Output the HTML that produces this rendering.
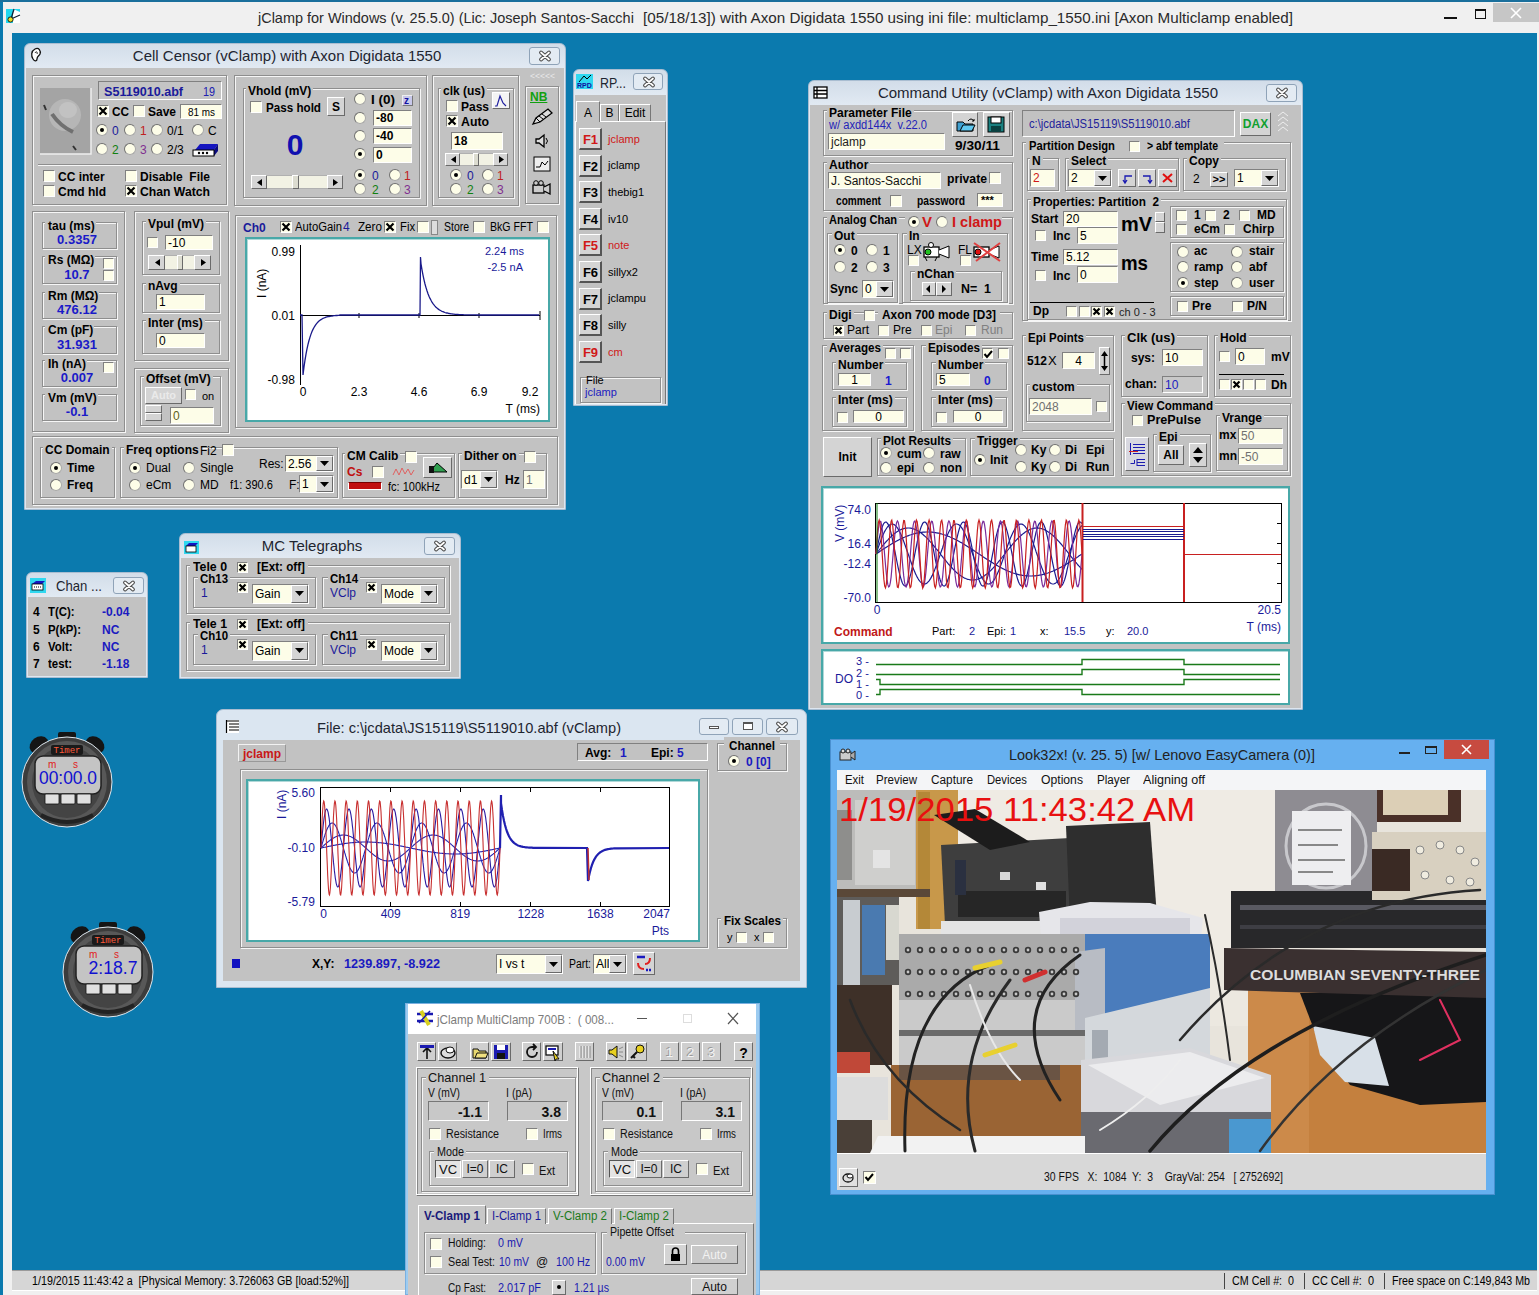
<!DOCTYPE html>
<html><head><meta charset="utf-8">
<style>
*{margin:0;padding:0;box-sizing:border-box}
html,body{width:1539px;height:1295px;overflow:hidden}
body{position:relative;background:#0b7aae;font-family:"Liberation Sans",sans-serif;font-size:12px;color:#000}
.a{position:absolute}
.t{position:absolute;white-space:pre}
svg{overflow:visible}
</style></head><body>
<div class="a" style="left:3px;top:2px;width:1536px;height:1293px;background:#f0f0f0"></div>
<div class="a" style="left:0px;top:0px;width:1539px;height:2px;background:#1a6f9c"></div>
<div class="a" style="left:12px;top:33px;width:1525px;height:1237px;background:#0b7aae"></div>
<svg class="a" style="left:6px;top:9px" width="14" height="14" viewBox="0 0 14 14"><rect width="14" height="14" fill="#22d8ee"/><path d="M14 3L7 0V14H14Z" fill="#fff"/><path d="M8 0L5 10M5 10L14 6" stroke="#123" stroke-width="1.3"/><circle cx="4.5" cy="10.5" r="2.6" fill="#e8e020" stroke="#222" stroke-width="1"/></svg>
<div class="t" style="left:258.0px;top:10.3px;font-size:15px;line-height:15px;color:#2a2a2a;transform:scaleX(0.964);transform-origin:0 0;">jClamp for Windows (v. 25.5.0) (Lic: Joseph Santos-Sacchi</div>
<div class="t" style="left:643.0px;top:10.3px;font-size:15px;line-height:15px;color:#2a2a2a;transform:scaleX(1.015);transform-origin:0 0;">[05/18/13]) with Axon Digidata 1550 using ini file: multiclamp_1550.ini [Axon Multiclamp enabled]</div>
<div class="a" style="left:1444px;top:17px;width:13px;height:2px;background:#111"></div>
<div class="a" style="left:1475px;top:9px;width:11px;height:10px;border:1.5px solid #111;border-top-width:2.5px"></div>
<div class="a" style="left:1493px;top:3px;width:46px;height:19px;background:#c6c6c6"></div>
<svg class="a" style="left:1510px;top:8px" width="12" height="10" viewBox="0 0 12 10"><path d="M1 0L11 10M11 0L1 10" stroke="#fff" stroke-width="1.6"/></svg>
<div class="a" style="left:12px;top:1270px;width:1525px;height:21px;background:#d6d6d6;border-top:1px solid #9a9a9a;border-bottom:1px solid #fff"></div>
<div class="t" style="left:32.0px;top:1274.8px;font-size:12px;line-height:12px;transform:scaleX(0.894);transform-origin:0 0;">1/19/2015 11:43:42 a  [Physical Memory: 3.726063 GB [load:52%]]</div>
<div class="a" style="left:1224px;top:1273px;width:1px;height:16px;background:#444"></div>
<div class="a" style="left:1304px;top:1273px;width:1px;height:16px;background:#444"></div>
<div class="a" style="left:1384px;top:1273px;width:1px;height:16px;background:#444"></div>
<div class="t" style="left:1232.0px;top:1274.8px;font-size:12px;line-height:12px;transform:scaleX(0.894);transform-origin:0 0;">CM Cell #:  0</div>
<div class="t" style="left:1312.0px;top:1274.8px;font-size:12px;line-height:12px;transform:scaleX(0.911);transform-origin:0 0;">CC Cell #:  0</div>
<div class="t" style="left:1392.0px;top:1274.8px;font-size:12px;line-height:12px;transform:scaleX(0.888);transform-origin:0 0;">Free space on C:149,843 Mb</div>
<div class="a" style="left:24px;top:43px;width:542px;height:467px;background:linear-gradient(#d2dde9,#e2eaf3 25px,#dde6f0);border:1px solid #a9bdd1;border-radius:6px 6px 0 0"></div>
<div class="a" style="left:26px;top:68px;width:538px;height:440px;background:#c2c2c2"></div>
<div class="t" style="left:132.8px;top:48.2px;font-size:15px;line-height:15px;color:#1e2530;">Cell Censor (vClamp) with Axon Digidata 1550</div>
<div class="a" style="left:529px;top:47px;width:31px;height:18px;border:1px solid #8fa3b8;border-radius:3px;background:#e3ebf3"></div>
<svg class="a" style="left:538.5px;top:51px" width="12" height="10"><path d="M2 1.5L10 8.5M10 1.5L2 8.5" stroke="#4a4a4a" stroke-width="3.8" stroke-linecap="round"/><path d="M2 1.5L10 8.5M10 1.5L2 8.5" stroke="#fff" stroke-width="1.7" stroke-linecap="round"/></svg>
<svg class="a" style="left:30px;top:47px" width="12" height="16" viewBox="0 0 12 16"><path d="M3 12C1 9 1 4 5 2C9 0 11 4 10 7C9 9 7 9 7 12C7 14 5 15 3 12Z" fill="#fff" stroke="#111" stroke-width="1.3"/><path d="M5 6C6 4 8 5 7 7" stroke="#111" fill="none"/></svg>
<div class="a" style="left:32px;top:75px;width:195px;height:130px;border:1px solid #8e8e8e;box-shadow:inset 1px 1px 0 #f6f6f6,1px 1px 0 #f6f6f6;"></div>
<svg class="a" style="left:40px;top:88px" width="51" height="66" viewBox="0 0 51 66"><rect width="51" height="66" fill="#a4a4a4"/><ellipse cx="25" cy="27" rx="16" ry="16" fill="#b6b6b6"/><ellipse cx="28" cy="22" rx="9" ry="8" fill="#c2c2c2"/><path d="M12 26Q20 38 33 44" stroke="#707070" stroke-width="4" fill="none"/><path d="M4 17L6 22M33 58L36 62" stroke="#333" stroke-width="2"/><path d="M51 0V66H0" stroke="#eee" fill="none" stroke-width="1.5"/></svg>
<div class="a" style="left:98px;top:81px;width:124px;height:19px;background:#c4c4c4;border-top:1px solid #808080;border-left:1px solid #808080;border-bottom:1px solid #fff;border-right:1px solid #fff;"></div>
<div class="t" style="left:104.0px;top:85.8px;font-size:12px;line-height:12px;font-weight:bold;color:#1a1a9a;transform:scaleX(1.048);transform-origin:0 0;">S5119010.abf</div>
<div class="t" style="left:203.0px;top:85.8px;font-size:12px;line-height:12px;color:#2020b0;transform:scaleX(0.899);transform-origin:0 0;">19</div>
<div class="a" style="left:97px;top:105px;width:12px;height:12px;background:#fdfde8;border-top:1px solid #808080;border-left:1px solid #808080;border-bottom:1px solid #fff;border-right:1px solid #fff;"></div>
<svg class="a" style="left:97px;top:105px" width="12" height="12"><path d="M2.5 2.5L9.5 9.5M9.5 2.5L2.5 9.5" stroke="#000" stroke-width="2.2"/></svg>
<div class="t" style="left:112.0px;top:105.8px;font-size:12px;line-height:12px;font-weight:bold;transform:scaleX(0.981);transform-origin:0 0;">CC</div>
<div class="a" style="left:133px;top:105px;width:12px;height:12px;background:#fdfde8;border-top:1px solid #808080;border-left:1px solid #808080;border-bottom:1px solid #fff;border-right:1px solid #fff;"></div>
<div class="t" style="left:148.0px;top:105.8px;font-size:12px;line-height:12px;font-weight:bold;">Save</div>
<div class="a" style="left:180px;top:104px;width:42px;height:15px;background:#fdfde8;border-top:1px solid #808080;border-left:1px solid #808080;border-bottom:1px solid #fff;border-right:1px solid #fff;"></div>
<div class="t" style="left:188.0px;top:106.7px;font-size:11px;line-height:11px;transform:scaleX(0.901);transform-origin:0 0;">81 ms</div>
<div class="a" style="left:96px;top:124px;width:12px;height:12px;border-radius:50%;background:#fdfde8;border:1px solid #a8a8a8;border-top-color:#707070;border-left-color:#707070"></div>
<div class="a" style="left:100px;top:128px;width:4px;height:4px;border-radius:50%;background:#000"></div>
<div class="t" style="left:112.0px;top:124.8px;font-size:12px;line-height:12px;color:#1a1a9a;">0</div>
<div class="a" style="left:124px;top:124px;width:12px;height:12px;border-radius:50%;background:#fdfde8;border:1px solid #a8a8a8;border-top-color:#707070;border-left-color:#707070"></div>
<div class="t" style="left:140.0px;top:124.8px;font-size:12px;line-height:12px;color:#c02020;">1</div>
<div class="a" style="left:151px;top:124px;width:12px;height:12px;border-radius:50%;background:#fdfde8;border:1px solid #a8a8a8;border-top-color:#707070;border-left-color:#707070"></div>
<div class="t" style="left:167.0px;top:124.8px;font-size:12px;line-height:12px;">0/1</div>
<div class="a" style="left:192px;top:124px;width:12px;height:12px;border-radius:50%;background:#fdfde8;border:1px solid #a8a8a8;border-top-color:#707070;border-left-color:#707070"></div>
<div class="t" style="left:208.0px;top:124.8px;font-size:12px;line-height:12px;">C</div>
<div class="a" style="left:96px;top:143px;width:12px;height:12px;border-radius:50%;background:#fdfde8;border:1px solid #a8a8a8;border-top-color:#707070;border-left-color:#707070"></div>
<div class="t" style="left:112.0px;top:143.8px;font-size:12px;line-height:12px;color:#108010;">2</div>
<div class="a" style="left:124px;top:143px;width:12px;height:12px;border-radius:50%;background:#fdfde8;border:1px solid #a8a8a8;border-top-color:#707070;border-left-color:#707070"></div>
<div class="t" style="left:140.0px;top:143.8px;font-size:12px;line-height:12px;color:#803090;">3</div>
<div class="a" style="left:151px;top:143px;width:12px;height:12px;border-radius:50%;background:#fdfde8;border:1px solid #a8a8a8;border-top-color:#707070;border-left-color:#707070"></div>
<div class="t" style="left:167.0px;top:143.8px;font-size:12px;line-height:12px;">2/3</div>
<svg class="a" style="left:192px;top:142px" width="28" height="15" viewBox="0 0 28 15"><path d="M3 8L8 2H26L22 8Z" fill="#1515c0"/><path d="M22 8L26 2V9L22 14Z" fill="#0a0a80"/><rect x="1" y="8" width="21" height="6" fill="#fff" stroke="#000"/><circle cx="7" cy="11" r="1.2" fill="#000"/><circle cx="11" cy="11" r="1.2" fill="#000"/><circle cx="15" cy="11" r="1.2" fill="#000"/></svg>
<div class="a" style="left:38px;top:164px;width:183px;height:2px;border-top:1px solid #8e8e8e;border-bottom:1px solid #f6f6f6"></div>
<div class="a" style="left:43px;top:170px;width:12px;height:12px;background:#fdfde8;border-top:1px solid #808080;border-left:1px solid #808080;border-bottom:1px solid #fff;border-right:1px solid #fff;"></div>
<div class="t" style="left:58.0px;top:170.8px;font-size:12px;line-height:12px;font-weight:bold;">CC inter</div>
<div class="a" style="left:43px;top:185px;width:12px;height:12px;background:#fdfde8;border-top:1px solid #808080;border-left:1px solid #808080;border-bottom:1px solid #fff;border-right:1px solid #fff;"></div>
<div class="t" style="left:58.0px;top:185.8px;font-size:12px;line-height:12px;font-weight:bold;">Cmd hld</div>
<div class="a" style="left:125px;top:170px;width:12px;height:12px;background:#fdfde8;border-top:1px solid #808080;border-left:1px solid #808080;border-bottom:1px solid #fff;border-right:1px solid #fff;"></div>
<div class="t" style="left:140.0px;top:170.8px;font-size:12px;line-height:12px;font-weight:bold;">Disable  File</div>
<div class="a" style="left:125px;top:185px;width:12px;height:12px;background:#fdfde8;border-top:1px solid #808080;border-left:1px solid #808080;border-bottom:1px solid #fff;border-right:1px solid #fff;"></div>
<svg class="a" style="left:125px;top:185px" width="12" height="12"><path d="M2.5 2.5L9.5 9.5M9.5 2.5L2.5 9.5" stroke="#000" stroke-width="2.2"/></svg>
<div class="t" style="left:140.0px;top:185.8px;font-size:12px;line-height:12px;font-weight:bold;transform:scaleX(1.016);transform-origin:0 0;">Chan Watch</div>
<div class="a" style="left:234px;top:75px;width:193px;height:131px;border:1px solid #8e8e8e;box-shadow:inset 1px 1px 0 #f6f6f6,1px 1px 0 #f6f6f6;"></div>
<div class="a" style="left:243px;top:88px;width:177px;height:110px;border:1px solid #8e8e8e;box-shadow:inset 1px 1px 0 #f6f6f6,1px 1px 0 #f6f6f6;"></div>
<div class="a" style="left:246px;top:86px;width:67.3398px;height:10px;background:#c2c2c2"></div>
<div class="t" style="left:248.0px;top:84.8px;font-size:12px;line-height:12px;font-weight:bold;">Vhold (mV)</div>
<div class="a" style="left:250px;top:101px;width:12px;height:12px;background:#fdfde8;border-top:1px solid #808080;border-left:1px solid #808080;border-bottom:1px solid #fff;border-right:1px solid #fff;"></div>
<div class="t" style="left:266.0px;top:101.8px;font-size:12px;line-height:12px;font-weight:bold;transform:scaleX(0.970);transform-origin:0 0;">Pass hold</div>
<div class="a" style="left:327px;top:97px;width:18px;height:19px;background:#d4d4d4;border-top:1px solid #fff;border-left:1px solid #fff;border-bottom:1px solid #6a6a6a;border-right:1px solid #6a6a6a;"></div>
<div class="t" style="left:332.0px;top:100.7px;font-size:12px;line-height:12px;font-weight:bold;">S</div>
<div class="t" style="left:286.7px;top:129.6px;font-size:30px;line-height:30px;font-weight:bold;color:#1010b0;">0</div>
<div class="a" style="left:251px;top:175px;width:92px;height:14px;background:#f2f2e4;border:1px solid #b0b0b0"></div>
<div class="a" style="left:251px;top:175px;width:16px;height:14px;background:#d4d4d4;border-top:1px solid #fff;border-left:1px solid #fff;border-bottom:1px solid #6a6a6a;border-right:1px solid #6a6a6a;"></div>
<div class="a" style="left:327px;top:175px;width:16px;height:14px;background:#d4d4d4;border-top:1px solid #fff;border-left:1px solid #fff;border-bottom:1px solid #6a6a6a;border-right:1px solid #6a6a6a;"></div>
<svg class="a" style="left:257px;top:178.5px" width="5" height="7"><path d="M5 0V7L0 3.5Z" fill="#000"/></svg>
<svg class="a" style="left:333px;top:178.5px" width="5" height="7"><path d="M0 0V7L5 3.5Z" fill="#000"/></svg>
<div class="a" style="left:292px;top:175px;width:7px;height:14px;background:#dcdcd0;border-top:1px solid #fff;border-left:1px solid #fff;border-bottom:1px solid #6a6a6a;border-right:1px solid #6a6a6a;"></div>
<div class="a" style="left:354px;top:93px;width:12px;height:12px;border-radius:50%;background:#fdfde8;border:1px solid #a8a8a8;border-top-color:#707070;border-left-color:#707070"></div>
<div class="a" style="left:354px;top:112px;width:12px;height:12px;border-radius:50%;background:#fdfde8;border:1px solid #a8a8a8;border-top-color:#707070;border-left-color:#707070"></div>
<div class="a" style="left:354px;top:130px;width:12px;height:12px;border-radius:50%;background:#fdfde8;border:1px solid #a8a8a8;border-top-color:#707070;border-left-color:#707070"></div>
<div class="a" style="left:354px;top:148px;width:12px;height:12px;border-radius:50%;background:#fdfde8;border:1px solid #a8a8a8;border-top-color:#707070;border-left-color:#707070"></div>
<div class="a" style="left:358px;top:152px;width:4px;height:4px;border-radius:50%;background:#000"></div>
<div class="a" style="left:373px;top:110px;width:39px;height:16px;background:#fdfde8;border-top:1px solid #808080;border-left:1px solid #808080;border-bottom:1px solid #fff;border-right:1px solid #fff;"></div>
<div class="t" style="left:376.0px;top:112.2px;font-size:12px;line-height:12px;font-weight:bold;">-80</div>
<div class="a" style="left:373px;top:128px;width:39px;height:16px;background:#fdfde8;border-top:1px solid #808080;border-left:1px solid #808080;border-bottom:1px solid #fff;border-right:1px solid #fff;"></div>
<div class="t" style="left:376.0px;top:130.2px;font-size:12px;line-height:12px;font-weight:bold;">-40</div>
<div class="a" style="left:373px;top:147px;width:39px;height:16px;background:#fdfde8;border-top:1px solid #808080;border-left:1px solid #808080;border-bottom:1px solid #fff;border-right:1px solid #fff;"></div>
<div class="t" style="left:376.0px;top:149.2px;font-size:12px;line-height:12px;font-weight:bold;">0</div>
<div class="t" style="left:371.0px;top:93.8px;font-size:12px;line-height:12px;font-weight:bold;transform:scaleX(1.125);transform-origin:0 0;">I (0)</div>
<div class="a" style="left:402px;top:95px;width:11px;height:11px;background:#c8c8ea;border:1px solid #eee;border-right-color:#777;border-bottom-color:#777"></div>
<div class="t" style="left:404.0px;top:95.5px;font-size:10px;line-height:10px;font-weight:bold;color:#1010a0;">z</div>
<div class="a" style="left:354px;top:169px;width:12px;height:12px;border-radius:50%;background:#fdfde8;border:1px solid #a8a8a8;border-top-color:#707070;border-left-color:#707070"></div>
<div class="a" style="left:358px;top:173px;width:4px;height:4px;border-radius:50%;background:#000"></div>
<div class="t" style="left:372.0px;top:169.8px;font-size:12px;line-height:12px;color:#1a1a9a;">0</div>
<div class="a" style="left:389px;top:169px;width:12px;height:12px;border-radius:50%;background:#fdfde8;border:1px solid #a8a8a8;border-top-color:#707070;border-left-color:#707070"></div>
<div class="t" style="left:404.0px;top:169.8px;font-size:12px;line-height:12px;color:#c02020;">1</div>
<div class="a" style="left:354px;top:183px;width:12px;height:12px;border-radius:50%;background:#fdfde8;border:1px solid #a8a8a8;border-top-color:#707070;border-left-color:#707070"></div>
<div class="t" style="left:372.0px;top:183.8px;font-size:12px;line-height:12px;color:#108010;">2</div>
<div class="a" style="left:389px;top:183px;width:12px;height:12px;border-radius:50%;background:#fdfde8;border:1px solid #a8a8a8;border-top-color:#707070;border-left-color:#707070"></div>
<div class="t" style="left:404.0px;top:183.8px;font-size:12px;line-height:12px;color:#803090;">3</div>
<div class="a" style="left:432px;top:75px;width:87px;height:131px;border:1px solid #8e8e8e;box-shadow:inset 1px 1px 0 #f6f6f6,1px 1px 0 #f6f6f6;"></div>
<div class="a" style="left:438px;top:88px;width:76px;height:110px;border:1px solid #8e8e8e;box-shadow:inset 1px 1px 0 #f6f6f6,1px 1px 0 #f6f6f6;"></div>
<div class="a" style="left:441px;top:86px;width:46.0234px;height:10px;background:#c2c2c2"></div>
<div class="t" style="left:443.0px;top:84.8px;font-size:12px;line-height:12px;font-weight:bold;">clk (us)</div>
<div class="a" style="left:446px;top:100px;width:12px;height:12px;background:#fdfde8;border-top:1px solid #808080;border-left:1px solid #808080;border-bottom:1px solid #fff;border-right:1px solid #fff;"></div>
<div class="t" style="left:461.0px;top:100.8px;font-size:12px;line-height:12px;font-weight:bold;">Pass</div>
<div class="a" style="left:492px;top:92px;width:18px;height:17px;background:#f4f4f4;border-top:1px solid #fff;border-left:1px solid #fff;border-bottom:1px solid #6a6a6a;border-right:1px solid #6a6a6a;"></div>
<svg class="a" style="left:494px;top:94px" width="14" height="13" viewBox="0 0 14 13"><path d="M1 12H3L6 2L9 9L12 12" stroke="#2020a0" fill="none" stroke-width="1.2"/></svg>
<div class="a" style="left:446px;top:115px;width:12px;height:12px;background:#fdfde8;border-top:1px solid #808080;border-left:1px solid #808080;border-bottom:1px solid #fff;border-right:1px solid #fff;"></div>
<svg class="a" style="left:446px;top:115px" width="12" height="12"><path d="M2.5 2.5L9.5 9.5M9.5 2.5L2.5 9.5" stroke="#000" stroke-width="2.2"/></svg>
<div class="t" style="left:461.0px;top:115.8px;font-size:12px;line-height:12px;font-weight:bold;transform:scaleX(1.025);transform-origin:0 0;">Auto</div>
<div class="a" style="left:451px;top:132px;width:52px;height:18px;background:#fdfde8;border-top:1px solid #808080;border-left:1px solid #808080;border-bottom:1px solid #fff;border-right:1px solid #fff;"></div>
<div class="t" style="left:454.0px;top:135.2px;font-size:12px;line-height:12px;font-weight:bold;">18</div>
<div class="a" style="left:445px;top:153px;width:63px;height:13px;background:#f2f2e4;border:1px solid #b0b0b0"></div>
<div class="a" style="left:445px;top:153px;width:15px;height:13px;background:#d4d4d4;border-top:1px solid #fff;border-left:1px solid #fff;border-bottom:1px solid #6a6a6a;border-right:1px solid #6a6a6a;"></div>
<div class="a" style="left:493px;top:153px;width:15px;height:13px;background:#d4d4d4;border-top:1px solid #fff;border-left:1px solid #fff;border-bottom:1px solid #6a6a6a;border-right:1px solid #6a6a6a;"></div>
<svg class="a" style="left:450.5px;top:156px" width="5" height="7"><path d="M5 0V7L0 3.5Z" fill="#000"/></svg>
<svg class="a" style="left:498.5px;top:156px" width="5" height="7"><path d="M0 0V7L5 3.5Z" fill="#000"/></svg>
<div class="a" style="left:473px;top:153px;width:6px;height:13px;background:#dcdcd0;border-top:1px solid #fff;border-left:1px solid #fff;border-bottom:1px solid #6a6a6a;border-right:1px solid #6a6a6a;"></div>
<div class="a" style="left:450px;top:169px;width:12px;height:12px;border-radius:50%;background:#fdfde8;border:1px solid #a8a8a8;border-top-color:#707070;border-left-color:#707070"></div>
<div class="a" style="left:454px;top:173px;width:4px;height:4px;border-radius:50%;background:#000"></div>
<div class="t" style="left:467.0px;top:169.8px;font-size:12px;line-height:12px;color:#1a1a9a;">0</div>
<div class="a" style="left:482px;top:169px;width:12px;height:12px;border-radius:50%;background:#fdfde8;border:1px solid #a8a8a8;border-top-color:#707070;border-left-color:#707070"></div>
<div class="t" style="left:497.0px;top:169.8px;font-size:12px;line-height:12px;color:#c02020;">1</div>
<div class="a" style="left:450px;top:183px;width:12px;height:12px;border-radius:50%;background:#fdfde8;border:1px solid #a8a8a8;border-top-color:#707070;border-left-color:#707070"></div>
<div class="t" style="left:467.0px;top:183.8px;font-size:12px;line-height:12px;color:#108010;">2</div>
<div class="a" style="left:482px;top:183px;width:12px;height:12px;border-radius:50%;background:#fdfde8;border:1px solid #a8a8a8;border-top-color:#707070;border-left-color:#707070"></div>
<div class="t" style="left:497.0px;top:183.8px;font-size:12px;line-height:12px;color:#803090;">3</div>
<div class="t" style="left:530.0px;top:72.4px;font-size:9px;line-height:9px;color:#e8e8e8;transform:scaleX(0.951);transform-origin:0 0;">&lt;&lt;&lt;&lt;&lt;</div>
<div class="a" style="left:525px;top:86px;width:34px;height:118px;border:1px solid #8e8e8e;box-shadow:inset 1px 1px 0 #f6f6f6,1px 1px 0 #f6f6f6;"></div>
<div class="t" style="left:530.0px;top:90.8px;font-size:12px;line-height:12px;font-weight:bold;color:#10a010;text-decoration:underline">NB</div>
<svg class="a" style="left:531px;top:108px" width="22" height="18" viewBox="0 0 22 18"><path d="M2 16L5 10L17 1L21 5L9 14Z" fill="#ddd" stroke="#000" stroke-width="1.3"/><path d="M5 10L9 14M8 8L12 11M11 6L15 9" stroke="#000"/></svg>
<svg class="a" style="left:534px;top:133px" width="16" height="16" viewBox="0 0 16 16"><path d="M2 6H5L10 2V14L5 10H2Z" fill="#ddd" stroke="#000" stroke-width="1.3"/><path d="M12 5Q15 8 12 11" stroke="#000" fill="none"/></svg>
<svg class="a" style="left:533px;top:156px" width="18" height="16" viewBox="0 0 18 16"><rect x="1" y="1" width="16" height="14" fill="#eee" stroke="#000"/><path d="M3 11H7L9 6L12 9L15 5" stroke="#000" fill="none"/></svg>
<svg class="a" style="left:532px;top:180px" width="20" height="16" viewBox="0 0 20 16"><rect x="1" y="5" width="11" height="8" fill="#ccc" stroke="#000" stroke-width="1.3"/><path d="M12 7L18 4V14L12 11" fill="#ccc" stroke="#000" stroke-width="1.3"/><circle cx="4" cy="3" r="2.3" fill="#ccc" stroke="#000"/><circle cx="9" cy="3" r="2.3" fill="#ccc" stroke="#000"/></svg>
<div class="a" style="left:32px;top:211px;width:93px;height:221px;border:1px solid #8e8e8e;box-shadow:inset 1px 1px 0 #f6f6f6,1px 1px 0 #f6f6f6;"></div>
<div class="a" style="left:42px;top:222px;width:75px;height:27px;border:1px solid #8e8e8e;box-shadow:inset 1px 1px 0 #f6f6f6,1px 1px 0 #f6f6f6;"></div>
<div class="a" style="left:45px;top:217px;width:50.6797px;height:9px;background:#c2c2c2"></div>
<div class="t" style="left:48.0px;top:219.8px;font-size:12px;line-height:12px;font-weight:bold;">tau (ms)</div>
<div class="t" style="left:57.1px;top:233.0px;font-size:13px;line-height:13px;font-weight:bold;color:#1a1ac8;">0.3357</div>
<div class="a" style="left:42px;top:256px;width:75px;height:28px;border:1px solid #8e8e8e;box-shadow:inset 1px 1px 0 #f6f6f6,1px 1px 0 #f6f6f6;"></div>
<div class="a" style="left:45px;top:251px;width:50.2891px;height:9px;background:#c2c2c2"></div>
<div class="t" style="left:48.0px;top:253.8px;font-size:12px;line-height:12px;font-weight:bold;">Rs (MΩ)</div>
<div class="t" style="left:64.3px;top:268.0px;font-size:13px;line-height:13px;font-weight:bold;color:#1a1ac8;">10.7</div>
<div class="a" style="left:42px;top:292px;width:75px;height:27px;border:1px solid #8e8e8e;box-shadow:inset 1px 1px 0 #f6f6f6,1px 1px 0 #f6f6f6;"></div>
<div class="a" style="left:45px;top:287px;width:54.2852px;height:9px;background:#c2c2c2"></div>
<div class="t" style="left:48.0px;top:289.8px;font-size:12px;line-height:12px;font-weight:bold;">Rm (MΩ)</div>
<div class="t" style="left:57.1px;top:303.0px;font-size:13px;line-height:13px;font-weight:bold;color:#1a1ac8;">476.12</div>
<div class="a" style="left:42px;top:326px;width:75px;height:28px;border:1px solid #8e8e8e;box-shadow:inset 1px 1px 0 #f6f6f6,1px 1px 0 #f6f6f6;"></div>
<div class="a" style="left:45px;top:321px;width:49.332px;height:9px;background:#c2c2c2"></div>
<div class="t" style="left:48.0px;top:323.8px;font-size:12px;line-height:12px;font-weight:bold;">Cm (pF)</div>
<div class="t" style="left:57.1px;top:338.0px;font-size:13px;line-height:13px;font-weight:bold;color:#1a1ac8;">31.931</div>
<div class="a" style="left:42px;top:360px;width:75px;height:27px;border:1px solid #8e8e8e;box-shadow:inset 1px 1px 0 #f6f6f6,1px 1px 0 #f6f6f6;"></div>
<div class="a" style="left:45px;top:355px;width:41.9961px;height:9px;background:#c2c2c2"></div>
<div class="t" style="left:48.0px;top:357.8px;font-size:12px;line-height:12px;font-weight:bold;">Ih (nA)</div>
<div class="t" style="left:60.7px;top:371.0px;font-size:13px;line-height:13px;font-weight:bold;color:#1a1ac8;">0.007</div>
<div class="a" style="left:42px;top:394px;width:75px;height:27px;border:1px solid #8e8e8e;box-shadow:inset 1px 1px 0 #f6f6f6,1px 1px 0 #f6f6f6;"></div>
<div class="a" style="left:45px;top:389px;width:52.6797px;height:9px;background:#c2c2c2"></div>
<div class="t" style="left:48.0px;top:391.8px;font-size:12px;line-height:12px;font-weight:bold;">Vm (mV)</div>
<div class="t" style="left:65.8px;top:405.0px;font-size:13px;line-height:13px;font-weight:bold;color:#1a1ac8;">-0.1</div>
<div class="a" style="left:103px;top:258px;width:11px;height:11px;background:#fdfde8;border-top:1px solid #808080;border-left:1px solid #808080;border-bottom:1px solid #fff;border-right:1px solid #fff;"></div>
<div class="a" style="left:103px;top:270px;width:11px;height:11px;background:#fdfde8;border-top:1px solid #808080;border-left:1px solid #808080;border-bottom:1px solid #fff;border-right:1px solid #fff;"></div>
<div class="a" style="left:103px;top:362px;width:11px;height:11px;background:#fdfde8;border-top:1px solid #808080;border-left:1px solid #808080;border-bottom:1px solid #fff;border-right:1px solid #fff;"></div>
<div class="a" style="left:134px;top:211px;width:95px;height:150px;border:1px solid #8e8e8e;box-shadow:inset 1px 1px 0 #f6f6f6,1px 1px 0 #f6f6f6;"></div>
<div class="a" style="left:142px;top:221px;width:78px;height:54px;border:1px solid #8e8e8e;box-shadow:inset 1px 1px 0 #f6f6f6,1px 1px 0 #f6f6f6;"></div>
<div class="a" style="left:146px;top:219px;width:60.0078px;height:10px;background:#c2c2c2"></div>
<div class="t" style="left:148.0px;top:217.8px;font-size:12px;line-height:12px;font-weight:bold;">Vpul (mV)</div>
<div class="a" style="left:147px;top:237px;width:11px;height:11px;background:#fdfde8;border-top:1px solid #808080;border-left:1px solid #808080;border-bottom:1px solid #fff;border-right:1px solid #fff;"></div>
<div class="a" style="left:165px;top:235px;width:48px;height:15px;background:#fdfde8;border-top:1px solid #808080;border-left:1px solid #808080;border-bottom:1px solid #fff;border-right:1px solid #fff;"></div>
<div class="t" style="left:168.0px;top:236.7px;font-size:12px;line-height:12px;">-10</div>
<div class="a" style="left:148px;top:255px;width:63px;height:15px;background:#f2f2e4;border:1px solid #b0b0b0"></div>
<div class="a" style="left:148px;top:255px;width:17px;height:15px;background:#d4d4d4;border-top:1px solid #fff;border-left:1px solid #fff;border-bottom:1px solid #6a6a6a;border-right:1px solid #6a6a6a;"></div>
<div class="a" style="left:194px;top:255px;width:17px;height:15px;background:#d4d4d4;border-top:1px solid #fff;border-left:1px solid #fff;border-bottom:1px solid #6a6a6a;border-right:1px solid #6a6a6a;"></div>
<svg class="a" style="left:154.5px;top:259px" width="5" height="7"><path d="M5 0V7L0 3.5Z" fill="#000"/></svg>
<svg class="a" style="left:200.5px;top:259px" width="5" height="7"><path d="M0 0V7L5 3.5Z" fill="#000"/></svg>
<div class="a" style="left:177px;top:255px;width:6px;height:15px;background:#dcdcd0;border-top:1px solid #fff;border-left:1px solid #fff;border-bottom:1px solid #6a6a6a;border-right:1px solid #6a6a6a;"></div>
<div class="a" style="left:142px;top:283px;width:78px;height:30px;border:1px solid #8e8e8e;box-shadow:inset 1px 1px 0 #f6f6f6,1px 1px 0 #f6f6f6;"></div>
<div class="a" style="left:146px;top:281px;width:33.5625px;height:10px;background:#c2c2c2"></div>
<div class="t" style="left:148.0px;top:279.8px;font-size:12px;line-height:12px;font-weight:bold;">nAvg</div>
<div class="a" style="left:156px;top:294px;width:49px;height:16px;background:#fdfde8;border-top:1px solid #808080;border-left:1px solid #808080;border-bottom:1px solid #fff;border-right:1px solid #fff;"></div>
<div class="t" style="left:159.0px;top:296.2px;font-size:12px;line-height:12px;">1</div>
<div class="a" style="left:142px;top:320px;width:78px;height:34px;border:1px solid #8e8e8e;box-shadow:inset 1px 1px 0 #f6f6f6,1px 1px 0 #f6f6f6;"></div>
<div class="a" style="left:146px;top:318px;width:58.6875px;height:10px;background:#c2c2c2"></div>
<div class="t" style="left:148.0px;top:316.8px;font-size:12px;line-height:12px;font-weight:bold;">Inter (ms)</div>
<div class="a" style="left:156px;top:333px;width:49px;height:15px;background:#fdfde8;border-top:1px solid #808080;border-left:1px solid #808080;border-bottom:1px solid #fff;border-right:1px solid #fff;"></div>
<div class="t" style="left:159.0px;top:334.7px;font-size:12px;line-height:12px;">0</div>
<div class="a" style="left:134px;top:368px;width:95px;height:65px;border:1px solid #8e8e8e;box-shadow:inset 1px 1px 0 #f6f6f6,1px 1px 0 #f6f6f6;"></div>
<div class="a" style="left:140px;top:376px;width:81px;height:50px;border:1px solid #8e8e8e;box-shadow:inset 1px 1px 0 #f6f6f6,1px 1px 0 #f6f6f6;"></div>
<div class="a" style="left:144px;top:374px;width:68.6797px;height:10px;background:#c2c2c2"></div>
<div class="t" style="left:146.0px;top:372.8px;font-size:12px;line-height:12px;font-weight:bold;">Offset (mV)</div>
<div class="a" style="left:145px;top:387px;width:37px;height:17px;background:#d4d4d4;border-top:1px solid #fff;border-left:1px solid #fff;border-bottom:1px solid #6a6a6a;border-right:1px solid #6a6a6a;"></div>
<div class="t" style="left:151.0px;top:390.1px;font-size:11px;line-height:11px;font-weight:bold;color:#eaeaea;">Auto</div>
<div class="a" style="left:185px;top:389px;width:11px;height:11px;background:#fdfde8;border-top:1px solid #808080;border-left:1px solid #808080;border-bottom:1px solid #fff;border-right:1px solid #fff;"></div>
<div class="t" style="left:202.0px;top:390.7px;font-size:11px;line-height:11px;">on</div>
<div class="a" style="left:145px;top:405px;width:17px;height:8px;background:#d4d4d4;border-top:1px solid #fff;border-left:1px solid #fff;border-bottom:1px solid #6a6a6a;border-right:1px solid #6a6a6a;"></div>
<div class="a" style="left:145px;top:413px;width:17px;height:8px;background:#d4d4d4;border-top:1px solid #fff;border-left:1px solid #fff;border-bottom:1px solid #6a6a6a;border-right:1px solid #6a6a6a;"></div>
<div class="a" style="left:170px;top:407px;width:44px;height:17px;background:#fdfde8;border-top:1px solid #808080;border-left:1px solid #808080;border-bottom:1px solid #fff;border-right:1px solid #fff;"></div>
<div class="t" style="left:173.0px;top:409.7px;font-size:12px;line-height:12px;color:#606020;">0</div>
<div class="a" style="left:235px;top:215px;width:322px;height:213px;border:1px solid #8e8e8e;box-shadow:inset 1px 1px 0 #f6f6f6,1px 1px 0 #f6f6f6;"></div>
<div class="t" style="left:243.0px;top:221.8px;font-size:12px;line-height:12px;font-weight:bold;color:#1a1a9a;">Ch0</div>
<div class="a" style="left:280px;top:221px;width:12px;height:12px;background:#fdfde8;border-top:1px solid #808080;border-left:1px solid #808080;border-bottom:1px solid #fff;border-right:1px solid #fff;"></div>
<svg class="a" style="left:280px;top:221px" width="12" height="12"><path d="M2.5 2.5L9.5 9.5M9.5 2.5L2.5 9.5" stroke="#000" stroke-width="2.2"/></svg>
<div class="t" style="left:295.0px;top:220.8px;font-size:12px;line-height:12px;transform:scaleX(0.939);transform-origin:0 0;">AutoGain</div>
<div class="t" style="left:343.0px;top:220.8px;font-size:12px;line-height:12px;color:#1a1a9a;">4</div>
<div class="t" style="left:358.0px;top:220.8px;font-size:12px;line-height:12px;transform:scaleX(0.972);transform-origin:0 0;">Zero</div>
<div class="a" style="left:384px;top:221px;width:12px;height:12px;background:#fdfde8;border-top:1px solid #808080;border-left:1px solid #808080;border-bottom:1px solid #fff;border-right:1px solid #fff;"></div>
<svg class="a" style="left:384px;top:221px" width="12" height="12"><path d="M2.5 2.5L9.5 9.5M9.5 2.5L2.5 9.5" stroke="#000" stroke-width="2.2"/></svg>
<div class="t" style="left:400.0px;top:220.8px;font-size:12px;line-height:12px;transform:scaleX(0.938);transform-origin:0 0;">Fix</div>
<div class="a" style="left:417px;top:221px;width:12px;height:12px;background:#fdfde8;border-top:1px solid #808080;border-left:1px solid #808080;border-bottom:1px solid #fff;border-right:1px solid #fff;"></div>
<div class="a" style="left:431px;top:220px;width:7px;height:15px;background:#ddd;border:1px solid #888"></div>
<div class="t" style="left:444.0px;top:220.8px;font-size:12px;line-height:12px;transform:scaleX(0.871);transform-origin:0 0;">Store</div>
<div class="a" style="left:473px;top:221px;width:12px;height:12px;background:#fdfde8;border-top:1px solid #808080;border-left:1px solid #808080;border-bottom:1px solid #fff;border-right:1px solid #fff;"></div>
<div class="t" style="left:490.0px;top:220.8px;font-size:12px;line-height:12px;transform:scaleX(0.883);transform-origin:0 0;">BkG FFT</div>
<div class="a" style="left:537px;top:221px;width:12px;height:12px;background:#fdfde8;border-top:1px solid #808080;border-left:1px solid #808080;border-bottom:1px solid #fff;border-right:1px solid #fff;"></div>
<div class="a" style="left:245px;top:237px;width:305px;height:185px;background:#fff;border:2px solid #48a8a8;box-shadow:inset 1px 1px 0 #b0d8d8"></div>
<svg class="a" style="left:0px;top:0px" width="1" height="1" viewBox="0 0 1 1"><path d="M300.5 245V385M300 315.5H540M540 311V320M359 313V318M419 313V318M479 313V318" stroke="#000" fill="none"/><path d="M300 315L302 315L303 375L303 375.0L304 367.0L305 360.1L306 354.1L307 348.9L308 344.4L309 340.5L310 337.1L311 334.1L312 331.6L313 329.4L314 327.5L315 325.8L316 324.4L317 323.1L318 322.0L319 321.1L320 320.3L321 319.6L322 319.0L323 318.4L324 318.0L325 317.6L326 317.2L327 316.9L328 316.7L329 316.5L330 316.3L331 316.1L332 316.0L333 315.8L334 315.7L335 315.6L336 315.5L337 315.5L338 315.4L339 315.4L340 315.0L341 315.0L342 315.0L343 315.0L344 315.0L345 315.0L346 315.0L347 315.0L348 315.0L349 315.0L350 315.0L351 315.0L352 315.0L353 315.0L354 315.0L355 315.0L356 315.0L357 315.0L358 315.0L359 315.0L360 315.0L361 315.0L362 315.0L363 315.0L364 315.0L365 315.0L366 315.0L367 315.0L368 315.0L369 315.0L370 315.0L371 315.0L372 315.0L373 315.0L374 315.0L375 315.0L376 315.0L377 315.0L378 315.0L379 315.0L380 315.0L381 315.0L382 315.0L383 315.0L384 315.0L385 315.0L386 315.0L387 315.0L388 315.0L389 315.0L390 315.0L391 315.0L392 315.0L393 315.0L394 315.0L395 315.0L396 315.0L397 315.0L398 315.0L399 315.0L400 315.0L401 315.0L402 315.0L403 315.0L404 315.0L405 315.0L406 315.0L407 315.0L408 315.0L409 315.0L410 315.0L411 315.0L412 315.0L413 315.0L414 315.0L415 315.0L416 315.0L417 315.0L418 315.0L419 315.0L420 315L420.5 257L421 263.8L422 269.8L423 275.1L424 279.8L425 284.0L426 287.6L427 290.8L428 293.7L429 296.2L430 298.4L431 300.3L432 302.1L433 303.6L434 304.9L435 306.1L436 307.2L437 308.1L438 308.9L439 309.6L440 310.2L441 310.8L442 311.3L443 311.7L444 312.1L445 312.5L446 312.8L447 313.0L448 313.2L449 313.5L450 313.6L451 313.8L452 313.9L453 314.1L454 314.2L455 314.3L456 314.4L457 314.4L458 314.5L459 314.6L460 314.6L461 314.7L462 314.7L463 314.7L464 314.8L465 314.8L466 314.8L467 314.8L468 314.9L469 314.9L470 314.9L471 314.9L472 314.9L473 314.9L474 314.9L475 314.9L476 314.9L477 315.0L478 315.0L479 315.0L480 315.0L481 315.0L482 315.0L483 315.0L484 315.0L485 315.0L486 315.0L487 315.0L488 315.0L489 315.0L490 315.0L491 315.0L492 315.0L493 315.0L494 315.0L495 315.0L496 315.0L497 315.0L498 315.0L499 315.0L500 315.0L501 315.0L502 315.0L503 315.0L504 315.0L505 315.0L506 315.0L507 315.0L508 315.0L509 315.0L510 315.0L511 315.0L512 315.0L513 315.0L514 315.0L515 315.0L516 315.0L517 315.0L518 315.0L519 315.0L520 315.0L521 315.0L522 315.0L523 315.0L524 315.0L525 315.0L526 315.0L527 315.0L528 315.0L529 315.0L530 315.0L531 315.0L532 315.0L533 315.0L534 315.0L535 315.0L536 315.0L537 315.0L538 315.0L539 315.0" stroke="#1a1a8a" fill="none" stroke-width="1.3"/></svg>
<div class="t" style="left:271.6px;top:245.8px;font-size:12px;line-height:12px;">0.99</div>
<div class="t" style="left:271.6px;top:309.8px;font-size:12px;line-height:12px;">0.01</div>
<div class="t" style="left:267.6px;top:373.8px;font-size:12px;line-height:12px;">-0.98</div>
<div class="t" style="left:299.7px;top:385.8px;font-size:12px;line-height:12px;">0</div>
<div class="t" style="left:350.7px;top:385.8px;font-size:12px;line-height:12px;">2.3</div>
<div class="t" style="left:410.7px;top:385.8px;font-size:12px;line-height:12px;">4.6</div>
<div class="t" style="left:470.7px;top:385.8px;font-size:12px;line-height:12px;">6.9</div>
<div class="t" style="left:521.7px;top:385.8px;font-size:12px;line-height:12px;">9.2</div>
<div class="t" style="left:505.6px;top:402.8px;font-size:12px;line-height:12px;">T (ms)</div>
<div class="t" style="left:244px;top:274px;font-size:12px;line-height:12px;transform:rotate(-90deg);transform-origin:18px 6px;width:36px">I (nA)</div>
<div class="t" style="left:484.9px;top:245.7px;font-size:11px;line-height:11px;color:#1a1a9a;">2.24 ms</div>
<div class="t" style="left:487.5px;top:261.7px;font-size:11px;line-height:11px;color:#1a1a9a;">-2.5 nA</div>
<div class="a" style="left:32px;top:436px;width:526px;height:69px;border:1px solid #8e8e8e;box-shadow:inset 1px 1px 0 #f6f6f6,1px 1px 0 #f6f6f6;"></div>
<div class="a" style="left:40px;top:447px;width:75px;height:51px;border:1px solid #8e8e8e;box-shadow:inset 1px 1px 0 #f6f6f6,1px 1px 0 #f6f6f6;"></div>
<div class="a" style="left:43px;top:445px;width:68.6875px;height:10px;background:#c2c2c2"></div>
<div class="t" style="left:45.0px;top:443.8px;font-size:12px;line-height:12px;font-weight:bold;">CC Domain</div>
<div class="a" style="left:50px;top:462px;width:12px;height:12px;border-radius:50%;background:#fdfde8;border:1px solid #a8a8a8;border-top-color:#707070;border-left-color:#707070"></div>
<div class="a" style="left:54px;top:466px;width:4px;height:4px;border-radius:50%;background:#000"></div>
<div class="t" style="left:67.0px;top:461.8px;font-size:12px;line-height:12px;font-weight:bold;">Time</div>
<div class="a" style="left:50px;top:479px;width:12px;height:12px;border-radius:50%;background:#fdfde8;border:1px solid #a8a8a8;border-top-color:#707070;border-left-color:#707070"></div>
<div class="t" style="left:67.0px;top:478.8px;font-size:12px;line-height:12px;font-weight:bold;">Freq</div>
<div class="a" style="left:120px;top:447px;width:218px;height:51px;border:1px solid #8e8e8e;box-shadow:inset 1px 1px 0 #f6f6f6,1px 1px 0 #f6f6f6;"></div>
<div class="a" style="left:124px;top:445px;width:76.6836px;height:10px;background:#c2c2c2"></div>
<div class="t" style="left:126.0px;top:443.8px;font-size:12px;line-height:12px;font-weight:bold;">Freq options</div>
<div class="t" style="left:200.0px;top:444.8px;font-size:12px;line-height:12px;">Fi2</div>
<div class="a" style="left:222px;top:444px;width:12px;height:12px;background:#fdfde8;border-top:1px solid #808080;border-left:1px solid #808080;border-bottom:1px solid #fff;border-right:1px solid #fff;"></div>
<div class="a" style="left:129px;top:462px;width:12px;height:12px;border-radius:50%;background:#fdfde8;border:1px solid #a8a8a8;border-top-color:#707070;border-left-color:#707070"></div>
<div class="a" style="left:133px;top:466px;width:4px;height:4px;border-radius:50%;background:#000"></div>
<div class="t" style="left:146.0px;top:461.8px;font-size:12px;line-height:12px;">Dual</div>
<div class="a" style="left:183px;top:462px;width:12px;height:12px;border-radius:50%;background:#fdfde8;border:1px solid #a8a8a8;border-top-color:#707070;border-left-color:#707070"></div>
<div class="t" style="left:200.0px;top:461.8px;font-size:12px;line-height:12px;">Single</div>
<div class="a" style="left:129px;top:479px;width:12px;height:12px;border-radius:50%;background:#fdfde8;border:1px solid #a8a8a8;border-top-color:#707070;border-left-color:#707070"></div>
<div class="t" style="left:146.0px;top:478.8px;font-size:12px;line-height:12px;">eCm</div>
<div class="a" style="left:183px;top:479px;width:12px;height:12px;border-radius:50%;background:#fdfde8;border:1px solid #a8a8a8;border-top-color:#707070;border-left-color:#707070"></div>
<div class="t" style="left:200.0px;top:478.8px;font-size:12px;line-height:12px;">MD</div>
<div class="t" style="left:230.0px;top:478.8px;font-size:12px;line-height:12px;transform:scaleX(0.920);transform-origin:0 0;">f1: 390.6</div>
<div class="t" style="left:259.0px;top:457.8px;font-size:12px;line-height:12px;">Res:</div>
<div class="a" style="left:285px;top:455px;width:49px;height:17px;background:#fdfde8;border-top:1px solid #808080;border-left:1px solid #808080;border-bottom:1px solid #fff;border-right:1px solid #fff;"></div>
<div class="t" style="left:288.0px;top:457.7px;font-size:12px;line-height:12px;">2.56</div>
<div class="a" style="left:316px;top:456px;width:17px;height:15px;background:#d4d4d4;border-top:1px solid #fff;border-left:1px solid #fff;border-bottom:1px solid #6a6a6a;border-right:1px solid #6a6a6a;"></div>
<svg class="a" style="left:320px;top:461px" width="9" height="5"><path d="M0 0H9L4.5 5Z" fill="#000"/></svg>
<div class="t" style="left:289.0px;top:478.8px;font-size:12px;line-height:12px;">F:</div>
<div class="a" style="left:299px;top:475px;width:35px;height:18px;background:#fdfde8;border-top:1px solid #808080;border-left:1px solid #808080;border-bottom:1px solid #fff;border-right:1px solid #fff;"></div>
<div class="t" style="left:302.0px;top:478.2px;font-size:12px;line-height:12px;">1</div>
<div class="a" style="left:316px;top:476px;width:17px;height:16px;background:#d4d4d4;border-top:1px solid #fff;border-left:1px solid #fff;border-bottom:1px solid #6a6a6a;border-right:1px solid #6a6a6a;"></div>
<svg class="a" style="left:320px;top:481.5px" width="9" height="5"><path d="M0 0H9L4.5 5Z" fill="#000"/></svg>
<div class="a" style="left:342px;top:453px;width:113px;height:45px;border:1px solid #8e8e8e;box-shadow:inset 1px 1px 0 #f6f6f6,1px 1px 0 #f6f6f6;"></div>
<div class="a" style="left:345px;top:451px;width:55.3477px;height:10px;background:#c2c2c2"></div>
<div class="t" style="left:347.0px;top:449.8px;font-size:12px;line-height:12px;font-weight:bold;">CM Calib</div>
<div class="a" style="left:405px;top:451px;width:12px;height:12px;background:#fdfde8;border-top:1px solid #808080;border-left:1px solid #808080;border-bottom:1px solid #fff;border-right:1px solid #fff;"></div>
<div class="t" style="left:347.0px;top:465.8px;font-size:12px;line-height:12px;font-weight:bold;color:#c01010;">Cs</div>
<div class="a" style="left:372px;top:466px;width:12px;height:12px;background:#fdfde8;border-top:1px solid #808080;border-left:1px solid #808080;border-bottom:1px solid #fff;border-right:1px solid #fff;"></div>
<svg class="a" style="left:392px;top:466px" width="24" height="11" viewBox="0 0 24 11"><path d="M1 9L4 3L7 9L10 2L13 8L16 3L19 9L22 4" stroke="#e06060" fill="none"/></svg>
<div class="a" style="left:423px;top:457px;width:29px;height:21px;background:#d0d0d0;border-top:1px solid #fff;border-left:1px solid #fff;border-bottom:1px solid #6a6a6a;border-right:1px solid #6a6a6a;"></div>
<svg class="a" style="left:427px;top:460px" width="22" height="15" viewBox="0 0 22 15"><path d="M3 12L10 3L20 12Z" fill="#30a050" stroke="#000"/><rect x="2" y="6" width="5" height="7" fill="#111"/></svg>
<div class="a" style="left:348px;top:482px;width:34px;height:8px;background:#c01010;border:1px solid #fff;border-top-color:#700"></div>
<div class="t" style="left:388.0px;top:480.8px;font-size:12px;line-height:12px;transform:scaleX(0.917);transform-origin:0 0;">fc: 100kHz</div>
<div class="a" style="left:458px;top:453px;width:89px;height:45px;border:1px solid #8e8e8e;box-shadow:inset 1px 1px 0 #f6f6f6,1px 1px 0 #f6f6f6;"></div>
<div class="a" style="left:462px;top:451px;width:56.6797px;height:10px;background:#c2c2c2"></div>
<div class="t" style="left:464.0px;top:449.8px;font-size:12px;line-height:12px;font-weight:bold;">Dither on</div>
<div class="a" style="left:524px;top:451px;width:12px;height:12px;background:#fdfde8;border-top:1px solid #808080;border-left:1px solid #808080;border-bottom:1px solid #fff;border-right:1px solid #fff;"></div>
<div class="a" style="left:461px;top:470px;width:37px;height:19px;background:#fdfde8;border-top:1px solid #808080;border-left:1px solid #808080;border-bottom:1px solid #fff;border-right:1px solid #fff;"></div>
<div class="t" style="left:464.0px;top:473.7px;font-size:12px;line-height:12px;">d1</div>
<div class="a" style="left:480px;top:471px;width:17px;height:17px;background:#d4d4d4;border-top:1px solid #fff;border-left:1px solid #fff;border-bottom:1px solid #6a6a6a;border-right:1px solid #6a6a6a;"></div>
<svg class="a" style="left:484px;top:477px" width="9" height="5"><path d="M0 0H9L4.5 5Z" fill="#000"/></svg>
<div class="t" style="left:505.0px;top:473.8px;font-size:12px;line-height:12px;font-weight:bold;">Hz</div>
<div class="a" style="left:523px;top:470px;width:22px;height:19px;background:#fdfde8;border-top:1px solid #808080;border-left:1px solid #808080;border-bottom:1px solid #fff;border-right:1px solid #fff;"></div>
<div class="t" style="left:526.0px;top:473.7px;font-size:12px;line-height:12px;color:#707070;">1</div>
<div class="a" style="left:573px;top:69px;width:95px;height:337px;background:linear-gradient(#d2dde9,#e2eaf3 26px,#dde6f0);border:1px solid #a9bdd1;border-radius:6px 6px 0 0"></div>
<div class="a" style="left:575px;top:95px;width:91px;height:309px;background:#c2c2c2"></div>
<div class="t" style="left:620.5px;top:74.7px;font-size:15px;line-height:15px;color:#1e2530;"></div>
<svg class="a" style="left:576px;top:74px" width="17" height="15" viewBox="0 0 17 15"><rect width="17" height="15" fill="#30d8f0"/><path d="M3 8L8 2L11 5L15 1" stroke="#000" fill="none"/><text x="1" y="14" font-size="7" font-family="Liberation Sans" font-weight="bold" fill="#1010a0">RPD</text></svg>
<div class="t" style="left:600.0px;top:75.3px;font-size:15px;line-height:15px;color:#1e2530;transform:scaleX(0.828);transform-origin:0 0;">RP...</div>
<div class="a" style="left:633px;top:73px;width:30px;height:17px;border:1px solid #8fa3b8;border-radius:3px;background:#e3ebf3"></div>
<svg class="a" style="left:642.5px;top:77px" width="12" height="10" viewBox="0 0 12 10"><path d="M2 1.5L10 8.5M10 1.5L2 8.5" stroke="#4a4a4a" stroke-width="3.8" stroke-linecap="round"/><path d="M2 1.5L10 8.5M10 1.5L2 8.5" stroke="#fff" stroke-width="1.7" stroke-linecap="round"/></svg>
<div class="a" style="left:575px;top:121px;width:91px;height:283px;border-left:1px solid #fff;border-top:1px solid #fff;border-right:1px solid #777;"></div>
<div class="a" style="left:600px;top:104px;width:19px;height:17px;background:#c2c2c2;border:1px solid #fff;border-right-color:#777;border-bottom:none"></div>
<div class="a" style="left:619px;top:104px;width:32px;height:17px;background:#c2c2c2;border:1px solid #fff;border-right-color:#777;border-bottom:none"></div>
<div class="a" style="left:576px;top:101px;width:24px;height:21px;background:#c2c2c2;border:1px solid #fff;border-right-color:#777;border-bottom:none"></div>
<div class="t" style="left:584.0px;top:106.8px;font-size:12px;line-height:12px;">A</div>
<div class="t" style="left:605.5px;top:106.8px;font-size:12px;line-height:12px;">B</div>
<div class="t" style="left:624.7px;top:106.8px;font-size:12px;line-height:12px;">Edit</div>
<div class="a" style="left:579px;top:128px;width:23px;height:22px;background:#d4d4d4;border:1px solid #fff;border-right:2px solid #555;border-bottom:2px solid #555"></div>
<div class="t" style="left:582.9px;top:133.0px;font-size:13px;line-height:13px;font-weight:bold;color:#d01818;">F1</div>
<div class="t" style="left:608.0px;top:133.7px;font-size:11px;line-height:11px;color:#d01818;">jclamp</div>
<div class="a" style="left:579px;top:154.6px;width:23px;height:22px;background:#d4d4d4;border:1px solid #fff;border-right:2px solid #555;border-bottom:2px solid #555"></div>
<div class="t" style="left:582.9px;top:159.6px;font-size:13px;line-height:13px;font-weight:bold;">F2</div>
<div class="t" style="left:608.0px;top:160.3px;font-size:11px;line-height:11px;">jclamp</div>
<div class="a" style="left:579px;top:181.2px;width:23px;height:22px;background:#d4d4d4;border:1px solid #fff;border-right:2px solid #555;border-bottom:2px solid #555"></div>
<div class="t" style="left:582.9px;top:186.2px;font-size:13px;line-height:13px;font-weight:bold;">F3</div>
<div class="t" style="left:608.0px;top:186.9px;font-size:11px;line-height:11px;">thebig1</div>
<div class="a" style="left:579px;top:207.8px;width:23px;height:22px;background:#d4d4d4;border:1px solid #fff;border-right:2px solid #555;border-bottom:2px solid #555"></div>
<div class="t" style="left:582.9px;top:212.8px;font-size:13px;line-height:13px;font-weight:bold;">F4</div>
<div class="t" style="left:608.0px;top:213.5px;font-size:11px;line-height:11px;">iv10</div>
<div class="a" style="left:579px;top:234.4px;width:23px;height:22px;background:#d4d4d4;border:1px solid #fff;border-right:2px solid #555;border-bottom:2px solid #555"></div>
<div class="t" style="left:582.9px;top:239.4px;font-size:13px;line-height:13px;font-weight:bold;color:#d01818;">F5</div>
<div class="t" style="left:608.0px;top:240.1px;font-size:11px;line-height:11px;color:#d01818;">note</div>
<div class="a" style="left:579px;top:261px;width:23px;height:22px;background:#d4d4d4;border:1px solid #fff;border-right:2px solid #555;border-bottom:2px solid #555"></div>
<div class="t" style="left:582.9px;top:266.0px;font-size:13px;line-height:13px;font-weight:bold;">F6</div>
<div class="t" style="left:608.0px;top:266.7px;font-size:11px;line-height:11px;">sillyx2</div>
<div class="a" style="left:579px;top:287.6px;width:23px;height:22px;background:#d4d4d4;border:1px solid #fff;border-right:2px solid #555;border-bottom:2px solid #555"></div>
<div class="t" style="left:582.9px;top:292.6px;font-size:13px;line-height:13px;font-weight:bold;">F7</div>
<div class="t" style="left:608.0px;top:293.3px;font-size:11px;line-height:11px;">jclampu</div>
<div class="a" style="left:579px;top:314.2px;width:23px;height:22px;background:#d4d4d4;border:1px solid #fff;border-right:2px solid #555;border-bottom:2px solid #555"></div>
<div class="t" style="left:582.9px;top:319.2px;font-size:13px;line-height:13px;font-weight:bold;">F8</div>
<div class="t" style="left:608.0px;top:319.9px;font-size:11px;line-height:11px;">silly</div>
<div class="a" style="left:579px;top:340.8px;width:23px;height:22px;background:#d4d4d4;border:1px solid #fff;border-right:2px solid #555;border-bottom:2px solid #555"></div>
<div class="t" style="left:582.9px;top:345.8px;font-size:13px;line-height:13px;font-weight:bold;color:#d01818;">F9</div>
<div class="t" style="left:608.0px;top:346.5px;font-size:11px;line-height:11px;color:#d01818;">cm</div>
<div class="a" style="left:580px;top:377px;width:81px;height:26px;border:1px solid #8e8e8e;box-shadow:inset 1px 1px 0 #f6f6f6,1px 1px 0 #f6f6f6;"></div>
<div class="t" style="left:586.0px;top:374.7px;font-size:11px;line-height:11px;">File</div>
<div class="t" style="left:585.0px;top:386.7px;font-size:11px;line-height:11px;color:#2020c0;">jclamp</div>
<div class="a" style="left:808px;top:80px;width:495px;height:630px;background:linear-gradient(#d2dde9,#e2eaf3 25px,#dde6f0);border:1px solid #a9bdd1;border-radius:6px 6px 0 0"></div>
<div class="a" style="left:810px;top:105px;width:491px;height:603px;background:#c2c2c2"></div>
<div class="t" style="left:877.9px;top:85.2px;font-size:15px;line-height:15px;color:#1e2530;">Command Utility (vClamp) with Axon Digidata 1550</div>
<div class="a" style="left:1266px;top:84px;width:31px;height:18px;border:1px solid #8fa3b8;border-radius:3px;background:#e3ebf3"></div>
<svg class="a" style="left:1275.5px;top:88px" width="12" height="10"><path d="M2 1.5L10 8.5M10 1.5L2 8.5" stroke="#4a4a4a" stroke-width="3.8" stroke-linecap="round"/><path d="M2 1.5L10 8.5M10 1.5L2 8.5" stroke="#fff" stroke-width="1.7" stroke-linecap="round"/></svg>
<svg class="a" style="left:813px;top:86px" width="15" height="13" viewBox="0 0 15 13"><rect x="1" y="1" width="13" height="11" fill="#fff" stroke="#000" stroke-width="1.3"/><path d="M1 4.5H14M1 8H14M4 1V12" stroke="#000" stroke-width="1.3"/></svg>
<div class="a" style="left:823px;top:110px;width:190px;height:46px;border:1px solid #8e8e8e;box-shadow:inset 1px 1px 0 #f6f6f6,1px 1px 0 #f6f6f6;"></div>
<div class="a" style="left:827px;top:108px;width:86.7344px;height:10px;background:#c2c2c2"></div>
<div class="t" style="left:829.0px;top:106.8px;font-size:12px;line-height:12px;font-weight:bold;">Parameter File</div>
<div class="t" style="left:829.0px;top:118.8px;font-size:12px;line-height:12px;color:#2424b8;transform:scaleX(0.926);transform-origin:0 0;">w/ axdd144x  v.22.0</div>
<div class="a" style="left:828px;top:133px;width:117px;height:17px;background:#fdfde8;border-top:1px solid #808080;border-left:1px solid #808080;border-bottom:1px solid #fff;border-right:1px solid #fff;"></div>
<div class="t" style="left:831.0px;top:135.7px;font-size:12px;line-height:12px;color:#222;">jclamp</div>
<div class="a" style="left:952px;top:112px;width:26px;height:25px;background:#d4d4d4;border-top:1px solid #fff;border-left:1px solid #fff;border-bottom:1px solid #6a6a6a;border-right:1px solid #6a6a6a;"></div>
<svg class="a" style="left:956px;top:116px" width="20" height="17" viewBox="0 0 20 17"><path d="M1 6H7L9 8H17V15H1Z" fill="#40a0d0" stroke="#000"/><path d="M4 15L7 9H19L16 15Z" fill="#60c8f0" stroke="#000"/><path d="M12 5Q15 1 18 5M16 5H18V3" stroke="#000" fill="none"/></svg>
<div class="a" style="left:983px;top:112px;width:27px;height:25px;background:#d4d4d4;border-top:1px solid #fff;border-left:1px solid #fff;border-bottom:1px solid #6a6a6a;border-right:1px solid #6a6a6a;"></div>
<svg class="a" style="left:987px;top:116px" width="18" height="17" viewBox="0 0 18 17"><rect x="1" y="1" width="16" height="15" fill="#1a8080" stroke="#000"/><rect x="4" y="1" width="10" height="6" fill="#fff" stroke="#000"/><rect x="4" y="10" width="10" height="6" fill="#0a4040"/></svg>
<div class="t" style="left:955.0px;top:139.8px;font-size:12px;line-height:12px;font-weight:bold;transform:scaleX(1.142);transform-origin:0 0;">9/30/11</div>
<div class="a" style="left:823px;top:162px;width:190px;height:49px;border:1px solid #8e8e8e;box-shadow:inset 1px 1px 0 #f6f6f6,1px 1px 0 #f6f6f6;"></div>
<div class="a" style="left:827px;top:160px;width:43.332px;height:10px;background:#c2c2c2"></div>
<div class="t" style="left:829.0px;top:158.8px;font-size:12px;line-height:12px;font-weight:bold;">Author</div>
<div class="a" style="left:828px;top:172px;width:113px;height:17px;background:#fdfde8;border-top:1px solid #808080;border-left:1px solid #808080;border-bottom:1px solid #fff;border-right:1px solid #fff;"></div>
<div class="t" style="left:831.0px;top:174.7px;font-size:12px;line-height:12px;color:#111;">J. Santos-Sacchi</div>
<div class="t" style="left:947.0px;top:172.8px;font-size:12px;line-height:12px;font-weight:bold;transform:scaleX(1.016);transform-origin:0 0;">private</div>
<div class="a" style="left:989px;top:172px;width:12px;height:12px;background:#fdfde8;border-top:1px solid #808080;border-left:1px solid #808080;border-bottom:1px solid #fff;border-right:1px solid #fff;"></div>
<div class="t" style="left:836.0px;top:194.8px;font-size:12px;line-height:12px;font-weight:bold;transform:scaleX(0.843);transform-origin:0 0;">comment</div>
<div class="a" style="left:890px;top:195px;width:12px;height:12px;background:#fdfde8;border-top:1px solid #808080;border-left:1px solid #808080;border-bottom:1px solid #fff;border-right:1px solid #fff;"></div>
<div class="t" style="left:917.0px;top:194.8px;font-size:12px;line-height:12px;font-weight:bold;transform:scaleX(0.857);transform-origin:0 0;">password</div>
<div class="a" style="left:977px;top:193px;width:26px;height:14px;background:#fdfde8;border-top:1px solid #808080;border-left:1px solid #808080;border-bottom:1px solid #fff;border-right:1px solid #fff;"></div>
<div class="t" style="left:981.0px;top:194.7px;font-size:11px;line-height:11px;font-weight:bold;">***</div>
<div class="a" style="left:823px;top:217px;width:190px;height:87px;border:1px solid #8e8e8e;box-shadow:inset 1px 1px 0 #f6f6f6,1px 1px 0 #f6f6f6;"></div>
<div class="a" style="left:827px;top:215px;width:72px;height:10px;background:#c2c2c2"></div>
<div class="t" style="left:829.0px;top:213.8px;font-size:12px;line-height:12px;font-weight:bold;transform:scaleX(0.919);transform-origin:0 0;">Analog Chan</div>
<div class="a" style="left:905px;top:212px;width:97px;height:18px;background:#c2c2c2"></div>
<div class="a" style="left:908px;top:216px;width:12px;height:12px;border-radius:50%;background:#fdfde8;border:1px solid #a8a8a8;border-top-color:#707070;border-left-color:#707070"></div>
<div class="a" style="left:912px;top:220px;width:4px;height:4px;border-radius:50%;background:#000"></div>
<div class="t" style="left:922.0px;top:214.3px;font-size:15px;line-height:15px;font-weight:bold;color:#d01818;">V</div>
<div class="a" style="left:936px;top:216px;width:12px;height:12px;border-radius:50%;background:#fdfde8;border:1px solid #a8a8a8;border-top-color:#707070;border-left-color:#707070"></div>
<div class="t" style="left:952.0px;top:215.1px;font-size:14px;line-height:14px;font-weight:bold;color:#d01818;transform:scaleX(1.036);transform-origin:0 0;">I clamp</div>
<div class="a" style="left:827px;top:233px;width:71px;height:70px;border:1px solid #8e8e8e;box-shadow:inset 1px 1px 0 #f6f6f6,1px 1px 0 #f6f6f6;"></div>
<div class="a" style="left:832px;top:231px;width:24.6641px;height:10px;background:#c2c2c2"></div>
<div class="t" style="left:834.0px;top:229.8px;font-size:12px;line-height:12px;font-weight:bold;">Out</div>
<div class="a" style="left:834px;top:244px;width:12px;height:12px;border-radius:50%;background:#fdfde8;border:1px solid #a8a8a8;border-top-color:#707070;border-left-color:#707070"></div>
<div class="a" style="left:838px;top:248px;width:4px;height:4px;border-radius:50%;background:#000"></div>
<div class="t" style="left:851.0px;top:244.8px;font-size:12px;line-height:12px;font-weight:bold;">0</div>
<div class="a" style="left:866px;top:244px;width:12px;height:12px;border-radius:50%;background:#fdfde8;border:1px solid #a8a8a8;border-top-color:#707070;border-left-color:#707070"></div>
<div class="t" style="left:883.0px;top:244.8px;font-size:12px;line-height:12px;font-weight:bold;">1</div>
<div class="a" style="left:834px;top:261px;width:12px;height:12px;border-radius:50%;background:#fdfde8;border:1px solid #a8a8a8;border-top-color:#707070;border-left-color:#707070"></div>
<div class="t" style="left:851.0px;top:261.8px;font-size:12px;line-height:12px;font-weight:bold;">2</div>
<div class="a" style="left:866px;top:261px;width:12px;height:12px;border-radius:50%;background:#fdfde8;border:1px solid #a8a8a8;border-top-color:#707070;border-left-color:#707070"></div>
<div class="t" style="left:883.0px;top:261.8px;font-size:12px;line-height:12px;font-weight:bold;">3</div>
<div class="t" style="left:830.0px;top:282.8px;font-size:12px;line-height:12px;font-weight:bold;transform:scaleX(0.976);transform-origin:0 0;">Sync</div>
<div class="a" style="left:862px;top:280px;width:32px;height:18px;background:#fdfde8;border-top:1px solid #808080;border-left:1px solid #808080;border-bottom:1px solid #fff;border-right:1px solid #fff;"></div>
<div class="t" style="left:865.0px;top:283.2px;font-size:12px;line-height:12px;">0</div>
<div class="a" style="left:876px;top:281px;width:17px;height:16px;background:#d4d4d4;border-top:1px solid #fff;border-left:1px solid #fff;border-bottom:1px solid #6a6a6a;border-right:1px solid #6a6a6a;"></div>
<svg class="a" style="left:880px;top:286.5px" width="9" height="5"><path d="M0 0H9L4.5 5Z" fill="#000"/></svg>
<div class="a" style="left:902px;top:233px;width:106px;height:70px;border:1px solid #8e8e8e;box-shadow:inset 1px 1px 0 #f6f6f6,1px 1px 0 #f6f6f6;"></div>
<div class="a" style="left:907px;top:231px;width:14.668px;height:10px;background:#c2c2c2"></div>
<div class="t" style="left:909.0px;top:229.8px;font-size:12px;line-height:12px;font-weight:bold;">In</div>
<div class="t" style="left:907.0px;top:243.8px;font-size:12px;line-height:12px;">LX</div>
<div class="a" style="left:908px;top:255px;width:11px;height:11px;background:#fdfde8;border-top:1px solid #808080;border-left:1px solid #808080;border-bottom:1px solid #fff;border-right:1px solid #fff;"></div>
<svg class="a" style="left:922px;top:242px" width="30" height="20" viewBox="0 0 30 20"><rect x="2" y="5" width="15" height="10" fill="#fff" stroke="#000" stroke-width="1.3"/><circle cx="6" cy="10" r="3" fill="#20c020" stroke="#000"/><path d="M17 8L27 4V16L17 12" fill="#fff" stroke="#000"/><path d="M3 15L5 19M15 15L13 19" stroke="#000"/><circle cx="9" cy="3" r="2.5" fill="#fff" stroke="#000"/></svg>
<div class="t" style="left:958.0px;top:243.8px;font-size:12px;line-height:12px;">FL</div>
<div class="a" style="left:960px;top:255px;width:11px;height:11px;background:#fdfde8;border-top:1px solid #808080;border-left:1px solid #808080;border-bottom:1px solid #fff;border-right:1px solid #fff;"></div>
<svg class="a" style="left:972px;top:241px" width="30" height="22" viewBox="0 0 30 22"><rect x="2" y="6" width="15" height="10" fill="#fff" stroke="#000" stroke-width="1.3"/><circle cx="6" cy="11" r="3" fill="#e01010" stroke="#000"/><path d="M17 9L27 5V17L17 13" fill="#fff" stroke="#000"/><path d="M2 2L28 20M28 2L4 20" stroke="#e04040" stroke-width="2"/></svg>
<div class="a" style="left:910px;top:271px;width:92px;height:30px;border:1px solid #8e8e8e;box-shadow:inset 1px 1px 0 #f6f6f6,1px 1px 0 #f6f6f6;"></div>
<div class="a" style="left:915px;top:269px;width:41.3398px;height:10px;background:#c2c2c2"></div>
<div class="t" style="left:917.0px;top:267.8px;font-size:12px;line-height:12px;font-weight:bold;">nChan</div>
<div class="a" style="left:922px;top:282px;width:14px;height:14px;background:#d4d4d4;border-top:1px solid #fff;border-left:1px solid #fff;border-bottom:1px solid #6a6a6a;border-right:1px solid #6a6a6a;"></div>
<div class="a" style="left:936px;top:282px;width:16px;height:14px;background:#d4d4d4;border-top:1px solid #fff;border-left:1px solid #fff;border-bottom:1px solid #6a6a6a;border-right:1px solid #6a6a6a;"></div>
<svg class="a" style="left:926px;top:285px" width="5" height="8" viewBox="0 0 5 8"><path d="M4 0V8L0 4Z" fill="#000"/></svg>
<svg class="a" style="left:942px;top:285px" width="5" height="8" viewBox="0 0 5 8"><path d="M0 0V8L4 4Z" fill="#000"/></svg>
<div class="t" style="left:961.0px;top:282.8px;font-size:12px;line-height:12px;font-weight:bold;transform:scaleX(1.034);transform-origin:0 0;">N=  1</div>
<div class="a" style="left:823px;top:312px;width:190px;height:27px;border:1px solid #8e8e8e;box-shadow:inset 1px 1px 0 #f6f6f6,1px 1px 0 #f6f6f6;"></div>
<div class="a" style="left:827px;top:310px;width:26.6719px;height:10px;background:#c2c2c2"></div>
<div class="t" style="left:829.0px;top:308.8px;font-size:12px;line-height:12px;font-weight:bold;">Digi</div>
<div class="a" style="left:864px;top:310px;width:11px;height:11px;background:#fdfde8;border-top:1px solid #808080;border-left:1px solid #808080;border-bottom:1px solid #fff;border-right:1px solid #fff;"></div>
<div class="a" style="left:878px;top:306px;width:122px;height:12px;background:#c2c2c2"></div>
<div class="t" style="left:882.0px;top:308.8px;font-size:12px;line-height:12px;font-weight:bold;transform:scaleX(0.988);transform-origin:0 0;">Axon 700 mode [D3]</div>
<div class="a" style="left:833px;top:325px;width:11px;height:11px;background:#fdfde8;border-top:1px solid #808080;border-left:1px solid #808080;border-bottom:1px solid #fff;border-right:1px solid #fff;"></div>
<svg class="a" style="left:833px;top:325px" width="11" height="11"><path d="M2.5 2.5L8.5 8.5M8.5 2.5L2.5 8.5" stroke="#000" stroke-width="2.2"/></svg>
<div class="t" style="left:847.0px;top:323.8px;font-size:12px;line-height:12px;">Part</div>
<div class="a" style="left:878px;top:325px;width:11px;height:11px;background:#fdfde8;border-top:1px solid #808080;border-left:1px solid #808080;border-bottom:1px solid #fff;border-right:1px solid #fff;"></div>
<div class="t" style="left:893.0px;top:323.8px;font-size:12px;line-height:12px;">Pre</div>
<div class="a" style="left:921px;top:325px;width:11px;height:11px;background:#fdfde8;border-top:1px solid #808080;border-left:1px solid #808080;border-bottom:1px solid #fff;border-right:1px solid #fff;"></div>
<div class="t" style="left:935.0px;top:323.8px;font-size:12px;line-height:12px;color:#808080;">Epi</div>
<div class="a" style="left:965px;top:325px;width:11px;height:11px;background:#fdfde8;border-top:1px solid #808080;border-left:1px solid #808080;border-bottom:1px solid #fff;border-right:1px solid #fff;"></div>
<div class="t" style="left:981.0px;top:323.8px;font-size:12px;line-height:12px;color:#808080;">Run</div>
<div class="a" style="left:822px;top:345px;width:92px;height:86px;border:1px solid #8e8e8e;box-shadow:inset 1px 1px 0 #f6f6f6,1px 1px 0 #f6f6f6;"></div>
<div class="a" style="left:827px;top:343px;width:56px;height:10px;background:#c2c2c2"></div>
<div class="t" style="left:829.0px;top:341.8px;font-size:12px;line-height:12px;font-weight:bold;transform:scaleX(0.970);transform-origin:0 0;">Averages</div>
<div class="a" style="left:885px;top:348px;width:11px;height:11px;background:#fdfde8;border-top:1px solid #808080;border-left:1px solid #808080;border-bottom:1px solid #fff;border-right:1px solid #fff;"></div>
<div class="a" style="left:900px;top:348px;width:11px;height:11px;background:#fdfde8;border-top:1px solid #808080;border-left:1px solid #808080;border-bottom:1px solid #fff;border-right:1px solid #fff;"></div>
<div class="a" style="left:832px;top:362px;width:75px;height:28px;border:1px solid #8e8e8e;box-shadow:inset 1px 1px 0 #f6f6f6,1px 1px 0 #f6f6f6;"></div>
<div class="a" style="left:836px;top:360px;width:49.3516px;height:10px;background:#c2c2c2"></div>
<div class="t" style="left:838.0px;top:358.8px;font-size:12px;line-height:12px;font-weight:bold;">Number</div>
<div class="a" style="left:838px;top:373px;width:33px;height:13px;background:#fdfde8;border-top:1px solid #808080;border-left:1px solid #808080;border-bottom:1px solid #fff;border-right:1px solid #fff;"></div>
<div class="t" style="left:851.2px;top:373.7px;font-size:12px;line-height:12px;">1</div>
<div class="t" style="left:885.0px;top:374.8px;font-size:12px;line-height:12px;font-weight:bold;color:#1a1ad0;">1</div>
<div class="a" style="left:832px;top:397px;width:75px;height:30px;border:1px solid #8e8e8e;box-shadow:inset 1px 1px 0 #f6f6f6,1px 1px 0 #f6f6f6;"></div>
<div class="a" style="left:836px;top:395px;width:58.6875px;height:10px;background:#c2c2c2"></div>
<div class="t" style="left:838.0px;top:393.8px;font-size:12px;line-height:12px;font-weight:bold;">Inter (ms)</div>
<div class="a" style="left:837px;top:412px;width:11px;height:11px;background:#fdfde8;border-top:1px solid #808080;border-left:1px solid #808080;border-bottom:1px solid #fff;border-right:1px solid #fff;"></div>
<div class="a" style="left:853px;top:410px;width:51px;height:13px;background:#fdfde8;border-top:1px solid #808080;border-left:1px solid #808080;border-bottom:1px solid #fff;border-right:1px solid #fff;"></div>
<div class="t" style="left:875.2px;top:410.7px;font-size:12px;line-height:12px;">0</div>
<div class="a" style="left:921px;top:345px;width:92px;height:86px;border:1px solid #8e8e8e;box-shadow:inset 1px 1px 0 #f6f6f6,1px 1px 0 #f6f6f6;"></div>
<div class="a" style="left:926px;top:343px;width:56px;height:10px;background:#c2c2c2"></div>
<div class="t" style="left:928.0px;top:341.8px;font-size:12px;line-height:12px;font-weight:bold;transform:scaleX(0.974);transform-origin:0 0;">Episodes</div>
<div class="a" style="left:982px;top:348px;width:11px;height:11px;background:#fdfde8;border-top:1px solid #808080;border-left:1px solid #808080;border-bottom:1px solid #fff;border-right:1px solid #fff;"></div>
<svg class="a" style="left:982px;top:348px" width="11" height="11"><path d="M2.5 6L5 9L10 3" stroke="#000" stroke-width="2" fill="none"/></svg>
<div class="a" style="left:998px;top:348px;width:11px;height:11px;background:#fdfde8;border-top:1px solid #808080;border-left:1px solid #808080;border-bottom:1px solid #fff;border-right:1px solid #fff;"></div>
<div class="a" style="left:931px;top:362px;width:76px;height:28px;border:1px solid #8e8e8e;box-shadow:inset 1px 1px 0 #f6f6f6,1px 1px 0 #f6f6f6;"></div>
<div class="a" style="left:936px;top:360px;width:49.3516px;height:10px;background:#c2c2c2"></div>
<div class="t" style="left:938.0px;top:358.8px;font-size:12px;line-height:12px;font-weight:bold;">Number</div>
<div class="a" style="left:936px;top:373px;width:34px;height:13px;background:#fdfde8;border-top:1px solid #808080;border-left:1px solid #808080;border-bottom:1px solid #fff;border-right:1px solid #fff;"></div>
<div class="t" style="left:939.0px;top:373.7px;font-size:12px;line-height:12px;">5</div>
<div class="t" style="left:984.0px;top:374.8px;font-size:12px;line-height:12px;font-weight:bold;color:#1a1ad0;">0</div>
<div class="a" style="left:931px;top:397px;width:76px;height:30px;border:1px solid #8e8e8e;box-shadow:inset 1px 1px 0 #f6f6f6,1px 1px 0 #f6f6f6;"></div>
<div class="a" style="left:936px;top:395px;width:58.6875px;height:10px;background:#c2c2c2"></div>
<div class="t" style="left:938.0px;top:393.8px;font-size:12px;line-height:12px;font-weight:bold;">Inter (ms)</div>
<div class="a" style="left:936px;top:412px;width:11px;height:11px;background:#fdfde8;border-top:1px solid #808080;border-left:1px solid #808080;border-bottom:1px solid #fff;border-right:1px solid #fff;"></div>
<div class="a" style="left:953px;top:410px;width:50px;height:13px;background:#fdfde8;border-top:1px solid #808080;border-left:1px solid #808080;border-bottom:1px solid #fff;border-right:1px solid #fff;"></div>
<div class="t" style="left:974.7px;top:410.7px;font-size:12px;line-height:12px;">0</div>
<div class="a" style="left:823px;top:437px;width:49px;height:40px;background:#d4d4d4;border-top:1px solid #fff;border-left:1px solid #fff;border-bottom:1px solid #6a6a6a;border-right:1px solid #6a6a6a;"></div>
<div class="t" style="left:838.5px;top:451.2px;font-size:12px;line-height:12px;font-weight:bold;">Init</div>
<div class="a" style="left:877px;top:438px;width:89px;height:38px;border:1px solid #8e8e8e;box-shadow:inset 1px 1px 0 #f6f6f6,1px 1px 0 #f6f6f6;"></div>
<div class="a" style="left:881px;top:436px;width:72px;height:10px;background:#c2c2c2"></div>
<div class="t" style="left:883.0px;top:434.8px;font-size:12px;line-height:12px;font-weight:bold;transform:scaleX(0.980);transform-origin:0 0;">Plot Results</div>
<div class="a" style="left:880px;top:447px;width:12px;height:12px;border-radius:50%;background:#fdfde8;border:1px solid #a8a8a8;border-top-color:#707070;border-left-color:#707070"></div>
<div class="a" style="left:884px;top:451px;width:4px;height:4px;border-radius:50%;background:#000"></div>
<div class="t" style="left:897.0px;top:447.8px;font-size:12px;line-height:12px;font-weight:bold;">cum</div>
<div class="a" style="left:923px;top:447px;width:12px;height:12px;border-radius:50%;background:#fdfde8;border:1px solid #a8a8a8;border-top-color:#707070;border-left-color:#707070"></div>
<div class="t" style="left:940.0px;top:447.8px;font-size:12px;line-height:12px;font-weight:bold;">raw</div>
<div class="a" style="left:880px;top:462px;width:12px;height:12px;border-radius:50%;background:#fdfde8;border:1px solid #a8a8a8;border-top-color:#707070;border-left-color:#707070"></div>
<div class="t" style="left:897.0px;top:461.8px;font-size:12px;line-height:12px;font-weight:bold;">epi</div>
<div class="a" style="left:923px;top:462px;width:12px;height:12px;border-radius:50%;background:#fdfde8;border:1px solid #a8a8a8;border-top-color:#707070;border-left-color:#707070"></div>
<div class="t" style="left:940.0px;top:461.8px;font-size:12px;line-height:12px;font-weight:bold;">non</div>
<div class="a" style="left:970px;top:438px;width:144px;height:38px;border:1px solid #8e8e8e;box-shadow:inset 1px 1px 0 #f6f6f6,1px 1px 0 #f6f6f6;"></div>
<div class="a" style="left:975px;top:436px;width:44.6914px;height:10px;background:#c2c2c2"></div>
<div class="t" style="left:977.0px;top:434.8px;font-size:12px;line-height:12px;font-weight:bold;">Trigger</div>
<div class="a" style="left:974px;top:454px;width:12px;height:12px;border-radius:50%;background:#fdfde8;border:1px solid #a8a8a8;border-top-color:#707070;border-left-color:#707070"></div>
<div class="a" style="left:978px;top:458px;width:4px;height:4px;border-radius:50%;background:#000"></div>
<div class="t" style="left:990.0px;top:453.8px;font-size:12px;line-height:12px;font-weight:bold;">Init</div>
<div class="a" style="left:1015px;top:444px;width:12px;height:12px;border-radius:50%;background:#fdfde8;border:1px solid #a8a8a8;border-top-color:#707070;border-left-color:#707070"></div>
<div class="t" style="left:1031.0px;top:443.8px;font-size:12px;line-height:12px;font-weight:bold;">Ky</div>
<div class="a" style="left:1049px;top:444px;width:12px;height:12px;border-radius:50%;background:#fdfde8;border:1px solid #a8a8a8;border-top-color:#707070;border-left-color:#707070"></div>
<div class="t" style="left:1065.0px;top:443.8px;font-size:12px;line-height:12px;font-weight:bold;">Di</div>
<div class="t" style="left:1086.0px;top:443.8px;font-size:12px;line-height:12px;font-weight:bold;">Epi</div>
<div class="a" style="left:1015px;top:461px;width:12px;height:12px;border-radius:50%;background:#fdfde8;border:1px solid #a8a8a8;border-top-color:#707070;border-left-color:#707070"></div>
<div class="t" style="left:1031.0px;top:460.8px;font-size:12px;line-height:12px;font-weight:bold;">Ky</div>
<div class="a" style="left:1049px;top:461px;width:12px;height:12px;border-radius:50%;background:#fdfde8;border:1px solid #a8a8a8;border-top-color:#707070;border-left-color:#707070"></div>
<div class="t" style="left:1065.0px;top:460.8px;font-size:12px;line-height:12px;font-weight:bold;">Di</div>
<div class="t" style="left:1086.0px;top:460.8px;font-size:12px;line-height:12px;font-weight:bold;">Run</div>
<div class="a" style="left:1022px;top:110px;width:213px;height:27px;background:#c2c2c2;border-top:1px solid #808080;border-left:1px solid #808080;border-bottom:1px solid #fff;border-right:1px solid #fff;"></div>
<div class="t" style="left:1029.0px;top:117.8px;font-size:12px;line-height:12px;color:#22229a;transform:scaleX(0.937);transform-origin:0 0;">c:\jcdata\JS15119\S5119010.abf</div>
<div class="a" style="left:1240px;top:112px;width:31px;height:24px;background:#d4d4d4;border-top:1px solid #fff;border-left:1px solid #fff;border-bottom:1px solid #6a6a6a;border-right:1px solid #6a6a6a;"></div>
<div class="t" style="left:1242.8px;top:118.2px;font-size:12px;line-height:12px;font-weight:bold;color:#10a030;">DAX</div>
<svg class="a" style="left:1277px;top:110px" width="12" height="26" viewBox="0 0 12 26"><path d="M1 6L6 2L11 6M1 11L6 7L11 11M1 16L6 12L11 16M1 21L6 17L11 21" stroke="#eee" fill="none"/></svg>
<div class="a" style="left:1022px;top:142px;width:269px;height:179px;border:1px solid #8e8e8e;box-shadow:inset 1px 1px 0 #f6f6f6,1px 1px 0 #f6f6f6;"></div>
<div class="a" style="left:1026px;top:139px;width:198px;height:11px;background:#c2c2c2"></div>
<div class="t" style="left:1029.0px;top:139.8px;font-size:12px;line-height:12px;font-weight:bold;transform:scaleX(0.934);transform-origin:0 0;">Partition Design</div>
<div class="a" style="left:1129px;top:141px;width:11px;height:11px;background:#fdfde8;border-top:1px solid #808080;border-left:1px solid #808080;border-bottom:1px solid #fff;border-right:1px solid #fff;"></div>
<div class="t" style="left:1147.0px;top:139.8px;font-size:12px;line-height:12px;font-weight:bold;transform:scaleX(0.876);transform-origin:0 0;">&gt; abf template</div>
<div class="a" style="left:1027px;top:158px;width:32px;height:33px;border:1px solid #8e8e8e;box-shadow:inset 1px 1px 0 #f6f6f6,1px 1px 0 #f6f6f6;"></div>
<div class="a" style="left:1030px;top:156px;width:12.668px;height:10px;background:#c2c2c2"></div>
<div class="t" style="left:1032.0px;top:154.8px;font-size:12px;line-height:12px;font-weight:bold;">N</div>
<div class="a" style="left:1030px;top:169px;width:25px;height:18px;background:#fdfde8;border-top:1px solid #808080;border-left:1px solid #808080;border-bottom:1px solid #fff;border-right:1px solid #fff;"></div>
<div class="t" style="left:1033.0px;top:172.2px;font-size:12px;line-height:12px;color:#d01818;">2</div>
<div class="a" style="left:1065px;top:158px;width:114px;height:33px;border:1px solid #8e8e8e;box-shadow:inset 1px 1px 0 #f6f6f6,1px 1px 0 #f6f6f6;"></div>
<div class="a" style="left:1069px;top:156px;width:39.3633px;height:10px;background:#c2c2c2"></div>
<div class="t" style="left:1071.0px;top:154.8px;font-size:12px;line-height:12px;font-weight:bold;">Select</div>
<div class="a" style="left:1068px;top:169px;width:44px;height:18px;background:#fdfde8;border-top:1px solid #808080;border-left:1px solid #808080;border-bottom:1px solid #fff;border-right:1px solid #fff;"></div>
<div class="t" style="left:1071.0px;top:172.2px;font-size:12px;line-height:12px;">2</div>
<div class="a" style="left:1094px;top:170px;width:17px;height:16px;background:#d4d4d4;border-top:1px solid #fff;border-left:1px solid #fff;border-bottom:1px solid #6a6a6a;border-right:1px solid #6a6a6a;"></div>
<svg class="a" style="left:1098px;top:175.5px" width="9" height="5"><path d="M0 0H9L4.5 5Z" fill="#000"/></svg>
<div class="a" style="left:1118px;top:169px;width:18px;height:18px;background:#d4d4d4;border-top:1px solid #fff;border-left:1px solid #fff;border-bottom:1px solid #6a6a6a;border-right:1px solid #6a6a6a;"></div>
<div class="a" style="left:1138px;top:169px;width:18px;height:18px;background:#d4d4d4;border-top:1px solid #fff;border-left:1px solid #fff;border-bottom:1px solid #6a6a6a;border-right:1px solid #6a6a6a;"></div>
<div class="a" style="left:1158px;top:169px;width:19px;height:18px;background:#d4d4d4;border-top:1px solid #fff;border-left:1px solid #fff;border-bottom:1px solid #6a6a6a;border-right:1px solid #6a6a6a;"></div>
<svg class="a" style="left:1121px;top:172px" width="13" height="12" viewBox="0 0 13 12"><path d="M11 4H4V10M2 8L4 11L6 8" stroke="#1a1ab0" fill="none" stroke-width="1.3"/></svg>
<svg class="a" style="left:1141px;top:172px" width="13" height="12" viewBox="0 0 13 12"><path d="M2 4H9V10M7 8L9 11L11 8" stroke="#1a1ab0" fill="none" stroke-width="1.3"/></svg>
<svg class="a" style="left:1161px;top:172px" width="13" height="12" viewBox="0 0 13 12"><path d="M2 2L11 10M11 2L2 10" stroke="#e01010" stroke-width="2"/></svg>
<div class="a" style="left:1183px;top:158px;width:103px;height:33px;border:1px solid #8e8e8e;box-shadow:inset 1px 1px 0 #f6f6f6,1px 1px 0 #f6f6f6;"></div>
<div class="a" style="left:1187px;top:156px;width:34.0078px;height:10px;background:#c2c2c2"></div>
<div class="t" style="left:1189.0px;top:154.8px;font-size:12px;line-height:12px;font-weight:bold;">Copy</div>
<div class="t" style="left:1193.0px;top:172.8px;font-size:12px;line-height:12px;">2</div>
<div class="a" style="left:1210px;top:172px;width:18px;height:15px;background:#d4d4d4;border-top:1px solid #fff;border-left:1px solid #fff;border-bottom:1px solid #6a6a6a;border-right:1px solid #6a6a6a;"></div>
<div class="t" style="left:1212.6px;top:174.1px;font-size:11px;line-height:11px;font-weight:bold;">&gt;&gt;</div>
<div class="a" style="left:1234px;top:169px;width:45px;height:18px;background:#fdfde8;border-top:1px solid #808080;border-left:1px solid #808080;border-bottom:1px solid #fff;border-right:1px solid #fff;"></div>
<div class="t" style="left:1237.0px;top:172.2px;font-size:12px;line-height:12px;">1</div>
<div class="a" style="left:1261px;top:170px;width:17px;height:16px;background:#d4d4d4;border-top:1px solid #fff;border-left:1px solid #fff;border-bottom:1px solid #6a6a6a;border-right:1px solid #6a6a6a;"></div>
<svg class="a" style="left:1265px;top:175.5px" width="9" height="5"><path d="M0 0H9L4.5 5Z" fill="#000"/></svg>
<div class="a" style="left:1027px;top:199px;width:260px;height:121px;border:1px solid #8e8e8e;box-shadow:inset 1px 1px 0 #f6f6f6,1px 1px 0 #f6f6f6;"></div>
<div class="a" style="left:1031px;top:197px;width:130px;height:10px;background:#c2c2c2"></div>
<div class="t" style="left:1033.0px;top:195.8px;font-size:12px;line-height:12px;font-weight:bold;transform:scaleX(0.979);transform-origin:0 0;">Properties: Partition  2</div>
<div class="t" style="left:1031.0px;top:212.8px;font-size:12px;line-height:12px;font-weight:bold;">Start</div>
<div class="a" style="left:1063px;top:211px;width:55px;height:16px;background:#fdfde8;border-top:1px solid #808080;border-left:1px solid #808080;border-bottom:1px solid #fff;border-right:1px solid #fff;"></div>
<div class="t" style="left:1066.0px;top:213.2px;font-size:12px;line-height:12px;">20</div>
<div class="a" style="left:1035px;top:230px;width:11px;height:11px;background:#fdfde8;border-top:1px solid #808080;border-left:1px solid #808080;border-bottom:1px solid #fff;border-right:1px solid #fff;"></div>
<div class="t" style="left:1053.0px;top:229.8px;font-size:12px;line-height:12px;font-weight:bold;">Inc</div>
<div class="a" style="left:1077px;top:227px;width:41px;height:17px;background:#fdfde8;border-top:1px solid #808080;border-left:1px solid #808080;border-bottom:1px solid #fff;border-right:1px solid #fff;"></div>
<div class="t" style="left:1080.0px;top:229.7px;font-size:12px;line-height:12px;">5</div>
<div class="t" style="left:1121.0px;top:213.2px;font-size:21px;line-height:21px;font-weight:bold;transform:scaleX(0.949);transform-origin:0 0;">mV</div>
<div class="a" style="left:1155px;top:212px;width:10px;height:10px;background:#d4d4d4;border-top:1px solid #fff;border-left:1px solid #fff;border-bottom:1px solid #6a6a6a;border-right:1px solid #6a6a6a;"></div>
<div class="a" style="left:1155px;top:222px;width:10px;height:11px;background:#d4d4d4;border-top:1px solid #fff;border-left:1px solid #fff;border-bottom:1px solid #6a6a6a;border-right:1px solid #6a6a6a;"></div>
<div class="t" style="left:1031.0px;top:250.8px;font-size:12px;line-height:12px;font-weight:bold;">Time</div>
<div class="a" style="left:1063px;top:249px;width:55px;height:16px;background:#fdfde8;border-top:1px solid #808080;border-left:1px solid #808080;border-bottom:1px solid #fff;border-right:1px solid #fff;"></div>
<div class="t" style="left:1066.0px;top:251.2px;font-size:12px;line-height:12px;">5.12</div>
<div class="a" style="left:1035px;top:270px;width:11px;height:11px;background:#fdfde8;border-top:1px solid #808080;border-left:1px solid #808080;border-bottom:1px solid #fff;border-right:1px solid #fff;"></div>
<div class="t" style="left:1053.0px;top:269.8px;font-size:12px;line-height:12px;font-weight:bold;">Inc</div>
<div class="a" style="left:1077px;top:266px;width:41px;height:17px;background:#fdfde8;border-top:1px solid #808080;border-left:1px solid #808080;border-bottom:1px solid #fff;border-right:1px solid #fff;"></div>
<div class="t" style="left:1080.0px;top:268.7px;font-size:12px;line-height:12px;">0</div>
<div class="t" style="left:1121.0px;top:252.2px;font-size:21px;line-height:21px;font-weight:bold;transform:scaleX(0.890);transform-origin:0 0;">ms</div>
<div class="a" style="left:1030px;top:302px;width:124px;height:1px;background:#000"></div>
<div class="t" style="left:1033.0px;top:304.8px;font-size:12px;line-height:12px;font-weight:bold;">Dp</div>
<div class="a" style="left:1066px;top:306px;width:11px;height:11px;background:#fdfde8;border-top:1px solid #808080;border-left:1px solid #808080;border-bottom:1px solid #fff;border-right:1px solid #fff;"></div>
<div class="a" style="left:1078.5px;top:306px;width:11px;height:11px;background:#fdfde8;border-top:1px solid #808080;border-left:1px solid #808080;border-bottom:1px solid #fff;border-right:1px solid #fff;"></div>
<div class="a" style="left:1091px;top:306px;width:11px;height:11px;background:#fdfde8;border-top:1px solid #808080;border-left:1px solid #808080;border-bottom:1px solid #fff;border-right:1px solid #fff;"></div>
<svg class="a" style="left:1091px;top:306px" width="11" height="11"><path d="M2.5 2.5L8.5 8.5M8.5 2.5L2.5 8.5" stroke="#000" stroke-width="2.2"/></svg>
<div class="a" style="left:1103.5px;top:306px;width:11px;height:11px;background:#fdfde8;border-top:1px solid #808080;border-left:1px solid #808080;border-bottom:1px solid #fff;border-right:1px solid #fff;"></div>
<svg class="a" style="left:1103.5px;top:306px" width="11" height="11"><path d="M2.5 2.5L8.5 8.5M8.5 2.5L2.5 8.5" stroke="#000" stroke-width="2.2"/></svg>
<div class="t" style="left:1119.0px;top:306.7px;font-size:11px;line-height:11px;color:#222;">ch 0 - 3</div>
<div class="a" style="left:1170px;top:206px;width:114px;height:32px;border:1px solid #8e8e8e;box-shadow:inset 1px 1px 0 #f6f6f6,1px 1px 0 #f6f6f6;"></div>
<div class="a" style="left:1176px;top:210px;width:11px;height:11px;background:#fdfde8;border-top:1px solid #808080;border-left:1px solid #808080;border-bottom:1px solid #fff;border-right:1px solid #fff;"></div>
<div class="t" style="left:1194.0px;top:208.8px;font-size:12px;line-height:12px;font-weight:bold;">1</div>
<div class="a" style="left:1205px;top:210px;width:11px;height:11px;background:#fdfde8;border-top:1px solid #808080;border-left:1px solid #808080;border-bottom:1px solid #fff;border-right:1px solid #fff;"></div>
<div class="t" style="left:1223.0px;top:208.8px;font-size:12px;line-height:12px;font-weight:bold;">2</div>
<div class="a" style="left:1239px;top:210px;width:11px;height:11px;background:#fdfde8;border-top:1px solid #808080;border-left:1px solid #808080;border-bottom:1px solid #fff;border-right:1px solid #fff;"></div>
<div class="t" style="left:1257.0px;top:208.8px;font-size:12px;line-height:12px;font-weight:bold;">MD</div>
<div class="a" style="left:1176px;top:224px;width:11px;height:11px;background:#fdfde8;border-top:1px solid #808080;border-left:1px solid #808080;border-bottom:1px solid #fff;border-right:1px solid #fff;"></div>
<div class="t" style="left:1194.0px;top:222.8px;font-size:12px;line-height:12px;font-weight:bold;">eCm</div>
<div class="a" style="left:1224px;top:224px;width:11px;height:11px;background:#fdfde8;border-top:1px solid #808080;border-left:1px solid #808080;border-bottom:1px solid #fff;border-right:1px solid #fff;"></div>
<div class="t" style="left:1243.0px;top:222.8px;font-size:12px;line-height:12px;font-weight:bold;">Chirp</div>
<div class="a" style="left:1170px;top:242px;width:114px;height:50px;border:1px solid #8e8e8e;box-shadow:inset 1px 1px 0 #f6f6f6,1px 1px 0 #f6f6f6;"></div>
<div class="a" style="left:1176.5px;top:245.5px;width:12px;height:12px;border-radius:50%;background:#fdfde8;border:1px solid #a8a8a8;border-top-color:#707070;border-left-color:#707070"></div>
<div class="t" style="left:1194.0px;top:245.3px;font-size:12px;line-height:12px;font-weight:bold;">ac</div>
<div class="a" style="left:1231px;top:245.5px;width:12px;height:12px;border-radius:50%;background:#fdfde8;border:1px solid #a8a8a8;border-top-color:#707070;border-left-color:#707070"></div>
<div class="t" style="left:1249.0px;top:245.3px;font-size:12px;line-height:12px;font-weight:bold;">stair</div>
<div class="a" style="left:1176.5px;top:261px;width:12px;height:12px;border-radius:50%;background:#fdfde8;border:1px solid #a8a8a8;border-top-color:#707070;border-left-color:#707070"></div>
<div class="t" style="left:1194.0px;top:260.8px;font-size:12px;line-height:12px;font-weight:bold;">ramp</div>
<div class="a" style="left:1231px;top:261px;width:12px;height:12px;border-radius:50%;background:#fdfde8;border:1px solid #a8a8a8;border-top-color:#707070;border-left-color:#707070"></div>
<div class="t" style="left:1249.0px;top:260.8px;font-size:12px;line-height:12px;font-weight:bold;">abf</div>
<div class="a" style="left:1176.5px;top:276.7px;width:12px;height:12px;border-radius:50%;background:#fdfde8;border:1px solid #a8a8a8;border-top-color:#707070;border-left-color:#707070"></div>
<div class="a" style="left:1180.5px;top:280.7px;width:4px;height:4px;border-radius:50%;background:#000"></div>
<div class="t" style="left:1194.0px;top:276.5px;font-size:12px;line-height:12px;font-weight:bold;">step</div>
<div class="a" style="left:1231px;top:276.7px;width:12px;height:12px;border-radius:50%;background:#fdfde8;border:1px solid #a8a8a8;border-top-color:#707070;border-left-color:#707070"></div>
<div class="t" style="left:1249.0px;top:276.5px;font-size:12px;line-height:12px;font-weight:bold;">user</div>
<div class="a" style="left:1170px;top:296px;width:114px;height:20px;border:1px solid #8e8e8e;box-shadow:inset 1px 1px 0 #f6f6f6,1px 1px 0 #f6f6f6;"></div>
<div class="a" style="left:1177px;top:301px;width:11px;height:11px;background:#fdfde8;border-top:1px solid #808080;border-left:1px solid #808080;border-bottom:1px solid #fff;border-right:1px solid #fff;"></div>
<div class="t" style="left:1192.0px;top:299.8px;font-size:12px;line-height:12px;font-weight:bold;">Pre</div>
<div class="a" style="left:1232px;top:301px;width:11px;height:11px;background:#fdfde8;border-top:1px solid #808080;border-left:1px solid #808080;border-bottom:1px solid #fff;border-right:1px solid #fff;"></div>
<div class="t" style="left:1247.0px;top:299.8px;font-size:12px;line-height:12px;font-weight:bold;">P/N</div>
<div class="a" style="left:1022px;top:335px;width:92px;height:96px;border:1px solid #8e8e8e;box-shadow:inset 1px 1px 0 #f6f6f6,1px 1px 0 #f6f6f6;"></div>
<div class="a" style="left:1026px;top:333px;width:60px;height:10px;background:#c2c2c2"></div>
<div class="t" style="left:1028.0px;top:331.8px;font-size:12px;line-height:12px;font-weight:bold;transform:scaleX(0.954);transform-origin:0 0;">Epi Points</div>
<div class="t" style="left:1027.0px;top:354.8px;font-size:12px;line-height:12px;font-weight:bold;">512</div>
<div class="t" style="left:1048.0px;top:354.0px;font-size:13px;line-height:13px;">X</div>
<div class="a" style="left:1062px;top:352px;width:33px;height:17px;background:#fdfde8;border-top:1px solid #808080;border-left:1px solid #808080;border-bottom:1px solid #fff;border-right:1px solid #fff;"></div>
<div class="t" style="left:1075.2px;top:354.7px;font-size:12px;line-height:12px;">4</div>
<div class="a" style="left:1099px;top:347px;width:11px;height:28px;background:#d4d4d4;border-top:1px solid #fff;border-left:1px solid #fff;border-bottom:1px solid #6a6a6a;border-right:1px solid #6a6a6a;"></div>
<svg class="a" style="left:1100px;top:349px" width="9" height="24" viewBox="0 0 9 24"><path d="M4.5 2L8 7H1Z M4.5 22L8 17H1Z" fill="#000"/><path d="M4.5 7V17" stroke="#000" stroke-width="1.5"/></svg>
<div class="a" style="left:1026px;top:384px;width:84px;height:38px;border:1px solid #8e8e8e;box-shadow:inset 1px 1px 0 #f6f6f6,1px 1px 0 #f6f6f6;"></div>
<div class="a" style="left:1030px;top:382px;width:46.6836px;height:10px;background:#c2c2c2"></div>
<div class="t" style="left:1032.0px;top:380.8px;font-size:12px;line-height:12px;font-weight:bold;">custom</div>
<div class="a" style="left:1029px;top:398px;width:63px;height:17px;background:#fdfde8;border-top:1px solid #808080;border-left:1px solid #808080;border-bottom:1px solid #fff;border-right:1px solid #fff;"></div>
<div class="t" style="left:1032.0px;top:400.7px;font-size:12px;line-height:12px;color:#707070;">2048</div>
<div class="a" style="left:1096px;top:401px;width:11px;height:11px;background:#fdfde8;border-top:1px solid #808080;border-left:1px solid #808080;border-bottom:1px solid #fff;border-right:1px solid #fff;"></div>
<div class="a" style="left:1121px;top:335px;width:87px;height:62px;border:1px solid #8e8e8e;box-shadow:inset 1px 1px 0 #f6f6f6,1px 1px 0 #f6f6f6;"></div>
<div class="a" style="left:1125px;top:333px;width:52px;height:10px;background:#c2c2c2"></div>
<div class="t" style="left:1127.0px;top:331.8px;font-size:12px;line-height:12px;font-weight:bold;transform:scaleX(1.091);transform-origin:0 0;">Clk (us)</div>
<div class="t" style="left:1131.0px;top:351.8px;font-size:12px;line-height:12px;font-weight:bold;">sys:</div>
<div class="a" style="left:1162px;top:349px;width:41px;height:17px;background:#fdfde8;border-top:1px solid #808080;border-left:1px solid #808080;border-bottom:1px solid #fff;border-right:1px solid #fff;"></div>
<div class="t" style="left:1165.0px;top:351.7px;font-size:12px;line-height:12px;">10</div>
<div class="t" style="left:1125.0px;top:377.8px;font-size:12px;line-height:12px;font-weight:bold;">chan:</div>
<div class="a" style="left:1162px;top:376px;width:41px;height:17px;background:#c8c8c8;border-top:1px solid #808080;border-left:1px solid #808080;border-bottom:1px solid #fff;border-right:1px solid #fff;"></div>
<div class="t" style="left:1165.0px;top:378.7px;font-size:12px;line-height:12px;color:#2020c0;">10</div>
<div class="a" style="left:1214px;top:335px;width:77px;height:62px;border:1px solid #8e8e8e;box-shadow:inset 1px 1px 0 #f6f6f6,1px 1px 0 #f6f6f6;"></div>
<div class="a" style="left:1218px;top:333px;width:30.668px;height:10px;background:#c2c2c2"></div>
<div class="t" style="left:1220.0px;top:331.8px;font-size:12px;line-height:12px;font-weight:bold;">Hold</div>
<div class="a" style="left:1219px;top:351px;width:11px;height:11px;background:#fdfde8;border-top:1px solid #808080;border-left:1px solid #808080;border-bottom:1px solid #fff;border-right:1px solid #fff;"></div>
<div class="a" style="left:1235px;top:348px;width:30px;height:17px;background:#fdfde8;border-top:1px solid #808080;border-left:1px solid #808080;border-bottom:1px solid #fff;border-right:1px solid #fff;"></div>
<div class="t" style="left:1238.0px;top:350.7px;font-size:12px;line-height:12px;">0</div>
<div class="t" style="left:1271.0px;top:350.8px;font-size:12px;line-height:12px;font-weight:bold;">mV</div>
<div class="a" style="left:1219px;top:374px;width:65px;height:1px;background:#000"></div>
<div class="a" style="left:1219px;top:379px;width:11px;height:11px;background:#fdfde8;border-top:1px solid #808080;border-left:1px solid #808080;border-bottom:1px solid #fff;border-right:1px solid #fff;"></div>
<div class="a" style="left:1231px;top:379px;width:11px;height:11px;background:#fdfde8;border-top:1px solid #808080;border-left:1px solid #808080;border-bottom:1px solid #fff;border-right:1px solid #fff;"></div>
<svg class="a" style="left:1231px;top:379px" width="11" height="11"><path d="M2.5 2.5L8.5 8.5M8.5 2.5L2.5 8.5" stroke="#000" stroke-width="2.2"/></svg>
<div class="a" style="left:1243px;top:379px;width:11px;height:11px;background:#fdfde8;border-top:1px solid #808080;border-left:1px solid #808080;border-bottom:1px solid #fff;border-right:1px solid #fff;"></div>
<div class="a" style="left:1254.5px;top:379px;width:11px;height:11px;background:#fdfde8;border-top:1px solid #808080;border-left:1px solid #808080;border-bottom:1px solid #fff;border-right:1px solid #fff;"></div>
<div class="t" style="left:1271.0px;top:378.8px;font-size:12px;line-height:12px;font-weight:bold;">Dh</div>
<div class="a" style="left:1121px;top:403px;width:170px;height:73px;border:1px solid #8e8e8e;box-shadow:inset 1px 1px 0 #f6f6f6,1px 1px 0 #f6f6f6;"></div>
<div class="a" style="left:1125px;top:401px;width:90px;height:10px;background:#c2c2c2"></div>
<div class="t" style="left:1127.0px;top:399.8px;font-size:12px;line-height:12px;font-weight:bold;transform:scaleX(0.965);transform-origin:0 0;">View Command</div>
<div class="a" style="left:1132px;top:415px;width:11px;height:11px;background:#fdfde8;border-top:1px solid #808080;border-left:1px solid #808080;border-bottom:1px solid #fff;border-right:1px solid #fff;"></div>
<div class="t" style="left:1147.0px;top:413.8px;font-size:12px;line-height:12px;font-weight:bold;transform:scaleX(1.051);transform-origin:0 0;">PrePulse</div>
<div class="a" style="left:1125px;top:437px;width:24px;height:34px;background:#d8d8e0;border-top:1px solid #fff;border-left:1px solid #fff;border-bottom:1px solid #6a6a6a;border-right:1px solid #6a6a6a;"></div>
<svg class="a" style="left:1127px;top:440px" width="20" height="28" viewBox="0 0 20 28"><path d="M3.5 3V15M6 4.5H18M6 7.5H18M6 10.5H18M6 13.5H18" stroke="#1a1ab0" stroke-width="1"/><path d="M2 11.5H11" stroke="#d02020" stroke-width="1"/><path d="M3.5 23.5H7.5V20M10 19.5H18M10 22.5H18M10 25.5H18M10 19V26" stroke="#1a1ab0" stroke-width="1" fill="none"/></svg>
<div class="a" style="left:1153px;top:434px;width:58px;height:38px;border:1px solid #8e8e8e;box-shadow:inset 1px 1px 0 #f6f6f6,1px 1px 0 #f6f6f6;"></div>
<div class="a" style="left:1157px;top:432px;width:22.6719px;height:10px;background:#c2c2c2"></div>
<div class="t" style="left:1159.0px;top:430.8px;font-size:12px;line-height:12px;font-weight:bold;">Epi</div>
<div class="a" style="left:1158px;top:445px;width:26px;height:20px;background:#d4d4d4;border-top:1px solid #fff;border-left:1px solid #fff;border-bottom:1px solid #6a6a6a;border-right:1px solid #6a6a6a;"></div>
<div class="t" style="left:1163.3px;top:449.2px;font-size:12px;line-height:12px;font-weight:bold;">All</div>
<div class="a" style="left:1189px;top:443px;width:18px;height:24px;background:#d4d4d4;border-top:1px solid #fff;border-left:1px solid #fff;border-bottom:1px solid #6a6a6a;border-right:1px solid #6a6a6a;"></div>
<svg class="a" style="left:1192px;top:446px" width="12" height="18" viewBox="0 0 12 18"><path d="M6 1L11 7H1Z M6 17L11 11H1Z" fill="#000"/></svg>
<div class="a" style="left:1216px;top:415px;width:72px;height:56px;border:1px solid #8e8e8e;box-shadow:inset 1px 1px 0 #f6f6f6,1px 1px 0 #f6f6f6;"></div>
<div class="a" style="left:1220px;top:413px;width:44.0312px;height:10px;background:#c2c2c2"></div>
<div class="t" style="left:1222.0px;top:411.8px;font-size:12px;line-height:12px;font-weight:bold;">Vrange</div>
<div class="t" style="left:1219.0px;top:428.8px;font-size:12px;line-height:12px;font-weight:bold;">mx</div>
<div class="a" style="left:1238px;top:428px;width:45px;height:16px;background:#fdfde8;border-top:1px solid #808080;border-left:1px solid #808080;border-bottom:1px solid #fff;border-right:1px solid #fff;"></div>
<div class="t" style="left:1241.0px;top:430.2px;font-size:12px;line-height:12px;color:#707070;">50</div>
<div class="t" style="left:1219.0px;top:449.8px;font-size:12px;line-height:12px;font-weight:bold;">mn</div>
<div class="a" style="left:1238px;top:448px;width:45px;height:17px;background:#fdfde8;border-top:1px solid #808080;border-left:1px solid #808080;border-bottom:1px solid #fff;border-right:1px solid #fff;"></div>
<div class="t" style="left:1241.0px;top:450.7px;font-size:12px;line-height:12px;color:#707070;">-50</div>
<div class="a" style="left:821px;top:486px;width:469px;height:158px;background:#fff;border:2px solid #48a8a8;box-shadow:inset 1px 1px 0 #b0d8d8"></div>
<div class="a" style="left:875px;top:503px;width:407px;height:100px;border:1px solid #000"></div>
<svg class="a" style="left:0px;top:0px" width="1" height="1" viewBox="0 0 1 1"><path d="M876.0 554.0L876.8 553.5L877.6 552.9L878.4 552.4L879.2 551.9L880.0 551.3L880.8 550.8L881.5 550.3L882.3 549.8L883.1 549.3L883.9 548.7L884.7 548.2L885.5 547.7L886.3 547.2L887.1 546.7L887.9 546.2L888.7 545.7L889.5 545.2L890.3 544.7L891.1 544.2L891.8 543.8L892.6 543.3L893.4 542.8L894.2 542.4L895.0 541.9L895.8 541.5L896.6 541.1L897.4 540.6L898.2 540.2L899.0 539.8L899.8 539.4L900.6 539.0L901.4 538.6L902.1 538.3L902.9 537.9L903.7 537.5L904.5 537.2L905.3 536.8L906.1 536.5L906.9 536.2L907.7 535.9L908.5 535.6L909.3 535.3L910.1 535.0L910.9 534.8L911.7 534.5L912.4 534.3L913.2 534.0L914.0 533.8L914.8 533.6L915.6 533.4L916.4 533.2L917.2 533.1L918.0 532.9L918.8 532.8L919.6 532.6L920.4 532.5L921.2 532.4L922.0 532.3L922.7 532.2L923.5 532.2L924.3 532.1L925.1 532.1L925.9 532.0L926.7 532.0L927.5 532.0L928.3 532.0L929.1 532.0L929.9 532.1L930.7 532.1L931.5 532.2L932.3 532.2L933.0 532.3L933.8 532.4L934.6 532.5L935.4 532.6L936.2 532.8L937.0 532.9L937.8 533.1L938.6 533.2L939.4 533.4L940.2 533.6L941.0 533.8L941.8 534.0L942.6 534.3L943.3 534.5L944.1 534.8L944.9 535.0L945.7 535.3L946.5 535.6L947.3 535.9L948.1 536.2L948.9 536.5L949.7 536.8L950.5 537.2L951.3 537.5L952.1 537.9L952.9 538.3L953.6 538.6L954.4 539.0L955.2 539.4L956.0 539.8L956.8 540.2L957.6 540.6L958.4 541.1L959.2 541.5L960.0 541.9L960.8 542.4L961.6 542.8L962.4 543.3L963.2 543.8L963.9 544.2L964.7 544.7L965.5 545.2L966.3 545.7L967.1 546.2L967.9 546.7L968.7 547.2L969.5 547.7L970.3 548.2L971.1 548.7L971.9 549.3L972.7 549.8L973.5 550.3L974.2 550.8L975.0 551.3L975.8 551.9L976.6 552.4L977.4 552.9L978.2 553.5L979.0 554.0L979.8 554.5L980.6 555.1L981.4 555.6L982.2 556.1L983.0 556.7L983.8 557.2L984.5 557.7L985.3 558.2L986.1 558.7L986.9 559.3L987.7 559.8L988.5 560.3L989.3 560.8L990.1 561.3L990.9 561.8L991.7 562.3L992.5 562.8L993.3 563.3L994.1 563.8L994.8 564.2L995.6 564.7L996.4 565.2L997.2 565.6L998.0 566.1L998.8 566.5L999.6 566.9L1000.4 567.4L1001.2 567.8L1002.0 568.2L1002.8 568.6L1003.6 569.0L1004.4 569.4L1005.1 569.7L1005.9 570.1L1006.7 570.5L1007.5 570.8L1008.3 571.2L1009.1 571.5L1009.9 571.8L1010.7 572.1L1011.5 572.4L1012.3 572.7L1013.1 573.0L1013.9 573.2L1014.7 573.5L1015.4 573.7L1016.2 574.0L1017.0 574.2L1017.8 574.4L1018.6 574.6L1019.4 574.8L1020.2 574.9L1021.0 575.1L1021.8 575.2L1022.6 575.4L1023.4 575.5L1024.2 575.6L1025.0 575.7L1025.7 575.8L1026.5 575.8L1027.3 575.9L1028.1 575.9L1028.9 576.0L1029.7 576.0L1030.5 576.0L1031.3 576.0L1032.1 576.0L1032.9 575.9L1033.7 575.9L1034.5 575.8L1035.3 575.8L1036.0 575.7L1036.8 575.6L1037.6 575.5L1038.4 575.4L1039.2 575.2L1040.0 575.1L1040.8 574.9L1041.6 574.8L1042.4 574.6L1043.2 574.4L1044.0 574.2L1044.8 574.0L1045.6 573.7L1046.3 573.5L1047.1 573.2L1047.9 573.0L1048.7 572.7L1049.5 572.4L1050.3 572.1L1051.1 571.8L1051.9 571.5L1052.7 571.2L1053.5 570.8L1054.3 570.5L1055.1 570.1L1055.9 569.7L1056.6 569.4L1057.4 569.0L1058.2 568.6L1059.0 568.2L1059.8 567.8L1060.6 567.4L1061.4 566.9L1062.2 566.5L1063.0 566.1L1063.8 565.6L1064.6 565.2L1065.4 564.7L1066.2 564.2L1066.9 563.8L1067.7 563.3L1068.5 562.8L1069.3 562.3L1070.1 561.8L1070.9 561.3L1071.7 560.8L1072.5 560.3L1073.3 559.8L1074.1 559.3L1074.9 558.7L1075.7 558.2L1076.5 557.7L1077.2 557.2L1078.0 556.7L1078.8 556.1L1079.6 555.6L1080.4 555.1L1081.2 554.5L1082.0 554.0" stroke="#1a1a90" fill="none" stroke-width="1.2"/><path d="M876.0 554.0L876.8 553.0L877.6 552.0L878.4 551.0L879.2 550.0L880.0 549.0L880.8 548.0L881.5 547.0L882.3 546.1L883.1 545.1L883.9 544.2L884.7 543.3L885.5 542.4L886.3 541.5L887.1 540.6L887.9 539.8L888.7 538.9L889.5 538.1L890.3 537.3L891.1 536.6L891.8 535.8L892.6 535.1L893.4 534.5L894.2 533.8L895.0 533.2L895.8 532.6L896.6 532.0L897.4 531.5L898.2 531.0L899.0 530.6L899.8 530.2L900.6 529.8L901.4 529.4L902.1 529.1L902.9 528.8L903.7 528.6L904.5 528.4L905.3 528.3L906.1 528.1L906.9 528.1L907.7 528.0L908.5 528.0L909.3 528.0L910.1 528.1L910.9 528.2L911.7 528.4L912.4 528.6L913.2 528.8L914.0 529.0L914.8 529.4L915.6 529.7L916.4 530.1L917.2 530.5L918.0 530.9L918.8 531.4L919.6 531.9L920.4 532.5L921.2 533.0L922.0 533.7L922.7 534.3L923.5 535.0L924.3 535.7L925.1 536.4L925.9 537.1L926.7 537.9L927.5 538.7L928.3 539.5L929.1 540.4L929.9 541.3L930.7 542.1L931.5 543.0L932.3 544.0L933.0 544.9L933.8 545.8L934.6 546.8L935.4 547.8L936.2 548.8L937.0 549.7L937.8 550.7L938.6 551.7L939.4 552.7L940.2 553.7L941.0 554.8L941.8 555.8L942.6 556.8L943.3 557.8L944.1 558.7L944.9 559.7L945.7 560.7L946.5 561.7L947.3 562.6L948.1 563.6L948.9 564.5L949.7 565.4L950.5 566.3L951.3 567.2L952.1 568.0L952.9 568.9L953.6 569.7L954.4 570.5L955.2 571.2L956.0 572.0L956.8 572.7L957.6 573.4L958.4 574.0L959.2 574.7L960.0 575.3L960.8 575.8L961.6 576.3L962.4 576.8L963.2 577.3L963.9 577.7L964.7 578.1L965.5 578.5L966.3 578.8L967.1 579.1L967.9 579.3L968.7 579.5L969.5 579.7L970.3 579.8L971.1 579.9L971.9 580.0L972.7 580.0L973.5 580.0L974.2 579.9L975.0 579.8L975.8 579.7L976.6 579.5L977.4 579.3L978.2 579.0L979.0 578.7L979.8 578.4L980.6 578.0L981.4 577.6L982.2 577.2L983.0 576.7L983.8 576.2L984.5 575.7L985.3 575.1L986.1 574.5L986.9 573.9L987.7 573.2L988.5 572.5L989.3 571.8L990.1 571.1L990.9 570.3L991.7 569.5L992.5 568.7L993.3 567.8L994.1 567.0L994.8 566.1L995.6 565.2L996.4 564.3L997.2 563.3L998.0 562.4L998.8 561.4L999.6 560.5L1000.4 559.5L1001.2 558.5L1002.0 557.5L1002.8 556.5L1003.6 555.5L1004.4 554.5L1005.1 553.5L1005.9 552.5L1006.7 551.5L1007.5 550.5L1008.3 549.5L1009.1 548.5L1009.9 547.5L1010.7 546.6L1011.5 545.6L1012.3 544.7L1013.1 543.7L1013.9 542.8L1014.7 541.9L1015.4 541.0L1016.2 540.2L1017.0 539.3L1017.8 538.5L1018.6 537.7L1019.4 536.9L1020.2 536.2L1021.0 535.5L1021.8 534.8L1022.6 534.1L1023.4 533.5L1024.2 532.9L1025.0 532.3L1025.7 531.8L1026.5 531.3L1027.3 530.8L1028.1 530.4L1028.9 530.0L1029.7 529.6L1030.5 529.3L1031.3 529.0L1032.1 528.7L1032.9 528.5L1033.7 528.3L1034.5 528.2L1035.3 528.1L1036.0 528.0L1036.8 528.0L1037.6 528.0L1038.4 528.1L1039.2 528.2L1040.0 528.3L1040.8 528.5L1041.6 528.7L1042.4 528.9L1043.2 529.2L1044.0 529.5L1044.8 529.9L1045.6 530.3L1046.3 530.7L1047.1 531.2L1047.9 531.7L1048.7 532.2L1049.5 532.7L1050.3 533.3L1051.1 534.0L1051.9 534.6L1052.7 535.3L1053.5 536.0L1054.3 536.8L1055.1 537.5L1055.9 538.3L1056.6 539.1L1057.4 540.0L1058.2 540.8L1059.0 541.7L1059.8 542.6L1060.6 543.5L1061.4 544.4L1062.2 545.4L1063.0 546.3L1063.8 547.3L1064.6 548.3L1065.4 549.3L1066.2 550.2L1066.9 551.2L1067.7 552.2L1068.5 553.2L1069.3 554.3L1070.1 555.3L1070.9 556.3L1071.7 557.3L1072.5 558.3L1073.3 559.2L1074.1 560.2L1074.9 561.2L1075.7 562.2L1076.5 563.1L1077.2 564.0L1078.0 565.0L1078.8 565.9L1079.6 566.7L1080.4 567.6L1081.2 568.5L1082.0 569.3" stroke="#1a1a90" fill="none" stroke-width="1.2"/><path d="M876.0 554.0L876.8 551.7L877.6 549.4L878.4 547.1L879.2 544.9L880.0 542.7L880.8 540.6L881.5 538.5L882.3 536.6L883.1 534.8L883.9 533.0L884.7 531.4L885.5 530.0L886.3 528.7L887.1 527.5L887.9 526.5L888.7 525.7L889.5 525.0L890.3 524.5L891.1 524.2L891.8 524.0L892.6 524.0L893.4 524.3L894.2 524.6L895.0 525.2L895.8 525.9L896.6 526.9L897.4 527.9L898.2 529.1L899.0 530.5L899.8 532.0L900.6 533.7L901.4 535.4L902.1 537.3L902.9 539.3L903.7 541.4L904.5 543.5L905.3 545.7L906.1 548.0L906.9 550.2L907.7 552.6L908.5 554.9L909.3 557.2L910.1 559.5L910.9 561.7L911.7 564.0L912.4 566.1L913.2 568.2L914.0 570.2L914.8 572.1L915.6 573.9L916.4 575.6L917.2 577.1L918.0 578.5L918.8 579.8L919.6 580.9L920.4 581.8L921.2 582.6L922.0 583.2L922.7 583.7L923.5 583.9L924.3 584.0L925.1 583.9L925.9 583.6L926.7 583.2L927.5 582.5L928.3 581.7L929.1 580.8L929.9 579.6L930.7 578.4L931.5 576.9L932.3 575.4L933.0 573.7L933.8 571.9L934.6 570.0L935.4 567.9L936.2 565.8L937.0 563.7L937.8 561.5L938.6 559.2L939.4 556.9L940.2 554.6L941.0 552.3L941.8 550.0L942.6 547.7L943.3 545.4L944.1 543.2L944.9 541.1L945.7 539.0L946.5 537.1L947.3 535.2L948.1 533.5L948.9 531.8L949.7 530.3L950.5 529.0L951.3 527.8L952.1 526.7L952.9 525.8L953.6 525.1L954.4 524.6L955.2 524.2L956.0 524.0L956.8 524.0L957.6 524.2L958.4 524.5L959.2 525.1L960.0 525.7L960.8 526.6L961.6 527.6L962.4 528.8L963.2 530.2L963.9 531.6L964.7 533.3L965.5 535.0L966.3 536.8L967.1 538.8L967.9 540.8L968.7 543.0L969.5 545.1L970.3 547.4L971.1 549.7L971.9 552.0L972.7 554.3L973.5 556.6L974.2 558.9L975.0 561.2L975.8 563.4L976.6 565.6L977.4 567.7L978.2 569.7L979.0 571.6L979.8 573.5L980.6 575.2L981.4 576.7L982.2 578.2L983.0 579.5L983.8 580.6L984.5 581.6L985.3 582.4L986.1 583.1L986.9 583.6L987.7 583.9L988.5 584.0L989.3 583.9L990.1 583.7L990.9 583.3L991.7 582.7L992.5 581.9L993.3 581.0L994.1 579.9L994.8 578.7L995.6 577.3L996.4 575.8L997.2 574.1L998.0 572.3L998.8 570.4L999.6 568.5L1000.4 566.4L1001.2 564.2L1002.0 562.0L1002.8 559.8L1003.6 557.5L1004.4 555.2L1005.1 552.8L1005.9 550.5L1006.7 548.2L1007.5 546.0L1008.3 543.8L1009.1 541.6L1009.9 539.5L1010.7 537.6L1011.5 535.7L1012.3 533.9L1013.1 532.2L1013.9 530.7L1014.7 529.3L1015.4 528.1L1016.2 527.0L1017.0 526.1L1017.8 525.3L1018.6 524.7L1019.4 524.3L1020.2 524.1L1021.0 524.0L1021.8 524.1L1022.6 524.4L1023.4 524.9L1024.2 525.6L1025.0 526.4L1025.7 527.4L1026.5 528.5L1027.3 529.8L1028.1 531.3L1028.9 532.8L1029.7 534.5L1030.5 536.4L1031.3 538.3L1032.1 540.3L1032.9 542.4L1033.7 544.6L1034.5 546.8L1035.3 549.1L1036.0 551.4L1036.8 553.7L1037.6 556.0L1038.4 558.3L1039.2 560.6L1040.0 562.9L1040.8 565.0L1041.6 567.2L1042.4 569.2L1043.2 571.2L1044.0 573.0L1044.8 574.7L1045.6 576.4L1046.3 577.8L1047.1 579.2L1047.9 580.4L1048.7 581.4L1049.5 582.3L1050.3 582.9L1051.1 583.5L1051.9 583.8L1052.7 584.0L1053.5 584.0L1054.3 583.8L1055.1 583.4L1055.9 582.9L1056.6 582.2L1057.4 581.3L1058.2 580.2L1059.0 579.0L1059.8 577.7L1060.6 576.2L1061.4 574.5L1062.2 572.8L1063.0 570.9L1063.8 569.0L1064.6 566.9L1065.4 564.8L1066.2 562.6L1066.9 560.3L1067.7 558.0L1068.5 555.7L1069.3 553.4L1070.1 551.1L1070.9 548.8L1071.7 546.5L1072.5 544.3L1073.3 542.2L1074.1 540.1L1074.9 538.0L1075.7 536.1L1076.5 534.3L1077.2 532.6L1078.0 531.1L1078.8 529.6L1079.6 528.4L1080.4 527.2L1081.2 526.3L1082.0 525.5" stroke="#1a1a90" fill="none" stroke-width="1.2"/><path d="M876.0 554.0L876.8 549.9L877.6 545.9L878.4 542.0L879.2 538.3L880.0 534.9L880.8 531.8L881.5 529.0L882.3 526.7L883.1 524.8L883.9 523.3L884.7 522.4L885.5 522.0L886.3 522.1L887.1 522.8L887.9 523.9L888.7 525.6L889.5 527.7L890.3 530.3L891.1 533.2L891.8 536.5L892.6 540.0L893.4 543.8L894.2 547.8L895.0 551.8L895.8 555.9L896.6 560.0L897.4 564.0L898.2 567.8L899.0 571.3L899.8 574.6L900.6 577.6L901.4 580.2L902.1 582.3L902.9 584.0L903.7 585.2L904.5 585.8L905.3 586.0L906.1 585.6L906.9 584.7L907.7 583.3L908.5 581.5L909.3 579.1L910.1 576.4L910.9 573.3L911.7 569.9L912.4 566.2L913.2 562.3L914.0 558.3L914.8 554.2L915.6 550.1L916.4 546.1L917.2 542.2L918.0 538.5L918.8 535.1L919.6 531.9L920.4 529.1L921.2 526.8L922.0 524.9L922.7 523.4L923.5 522.5L924.3 522.0L925.1 522.1L925.9 522.7L926.7 523.9L927.5 525.5L928.3 527.6L929.1 530.1L929.9 533.0L930.7 536.3L931.5 539.8L932.3 543.6L933.0 547.5L933.8 551.6L934.6 555.7L935.4 559.8L936.2 563.7L937.0 567.6L937.8 571.1L938.6 574.5L939.4 577.4L940.2 580.0L941.0 582.2L941.8 583.9L942.6 585.1L943.3 585.8L944.1 586.0L944.9 585.7L945.7 584.8L946.5 583.4L947.3 581.6L948.1 579.3L948.9 576.6L949.7 573.5L950.5 570.1L951.3 566.4L952.1 562.6L952.9 558.5L953.6 554.5L954.4 550.4L955.2 546.3L956.0 542.4L956.8 538.7L957.6 535.3L958.4 532.1L959.2 529.3L960.0 526.9L960.8 524.9L961.6 523.5L962.4 522.5L963.2 522.0L963.9 522.1L964.7 522.7L965.5 523.8L966.3 525.4L967.1 527.4L967.9 529.9L968.7 532.8L969.5 536.1L970.3 539.6L971.1 543.4L971.9 547.3L972.7 551.4L973.5 555.5L974.2 559.5L975.0 563.5L975.8 567.3L976.6 571.0L977.4 574.3L978.2 577.3L979.0 579.9L979.8 582.1L980.6 583.8L981.4 585.1L982.2 585.8L983.0 586.0L983.8 585.7L984.5 584.9L985.3 583.5L986.1 581.7L986.9 579.4L987.7 576.7L988.5 573.7L989.3 570.3L990.1 566.6L990.9 562.8L991.7 558.8L992.5 554.7L993.3 550.6L994.1 546.6L994.8 542.7L995.6 538.9L996.4 535.4L997.2 532.3L998.0 529.4L998.8 527.0L999.6 525.0L1000.4 523.5L1001.2 522.5L1002.0 522.0L1002.8 522.1L1003.6 522.6L1004.4 523.7L1005.1 525.3L1005.9 527.3L1006.7 529.8L1007.5 532.7L1008.3 535.9L1009.1 539.4L1009.9 543.2L1010.7 547.1L1011.5 551.1L1012.3 555.2L1013.1 559.3L1013.9 563.3L1014.7 567.1L1015.4 570.8L1016.2 574.1L1017.0 577.1L1017.8 579.8L1018.6 582.0L1019.4 583.7L1020.2 585.0L1021.0 585.8L1021.8 586.0L1022.6 585.7L1023.4 584.9L1024.2 583.6L1025.0 581.8L1025.7 579.6L1026.5 576.9L1027.3 573.9L1028.1 570.5L1028.9 566.9L1029.7 563.0L1030.5 559.0L1031.3 554.9L1032.1 550.8L1032.9 546.8L1033.7 542.9L1034.5 539.1L1035.3 535.6L1036.0 532.4L1036.8 529.6L1037.6 527.1L1038.4 525.1L1039.2 523.6L1040.0 522.6L1040.8 522.1L1041.6 522.1L1042.4 522.6L1043.2 523.6L1044.0 525.2L1044.8 527.2L1045.6 529.6L1046.3 532.5L1047.1 535.7L1047.9 539.2L1048.7 542.9L1049.5 546.9L1050.3 550.9L1051.1 555.0L1051.9 559.1L1052.7 563.1L1053.5 566.9L1054.3 570.6L1055.1 573.9L1055.9 577.0L1056.6 579.6L1057.4 581.9L1058.2 583.6L1059.0 584.9L1059.8 585.7L1060.6 586.0L1061.4 585.7L1062.2 585.0L1063.0 583.7L1063.8 581.9L1064.6 579.7L1065.4 577.1L1066.2 574.0L1066.9 570.7L1067.7 567.1L1068.5 563.2L1069.3 559.2L1070.1 555.2L1070.9 551.1L1071.7 547.0L1072.5 543.1L1073.3 539.3L1074.1 535.8L1074.9 532.6L1075.7 529.7L1076.5 527.3L1077.2 525.2L1078.0 523.7L1078.8 522.6L1079.6 522.1L1080.4 522.1L1081.2 522.6L1082.0 523.6" stroke="#1a1a90" fill="none" stroke-width="1.2"/><path d="M876.0 554.0L876.8 544.6L877.6 535.9L878.4 528.8L879.2 523.7L880.0 521.2L880.8 521.5L881.5 524.4L882.3 529.8L883.1 537.3L883.9 546.1L884.7 555.6L885.5 565.0L886.3 573.4L887.1 580.2L887.9 584.9L888.7 586.9L889.5 586.2L890.3 582.8L891.1 577.1L891.8 569.3L892.6 560.3L893.4 550.8L894.2 541.6L895.0 533.3L895.8 526.8L896.6 522.6L897.4 521.0L898.2 522.2L899.0 526.0L899.8 532.1L900.6 540.1L901.4 549.2L902.1 558.8L902.9 567.9L903.7 575.9L904.5 582.0L905.3 585.8L906.1 587.0L906.9 585.4L907.7 581.2L908.5 574.7L909.3 566.4L910.1 557.2L910.9 547.7L911.7 538.7L912.4 530.9L913.2 525.2L914.0 521.8L914.8 521.1L915.6 523.1L916.4 527.8L917.2 534.6L918.0 543.0L918.8 552.4L919.6 561.9L920.4 570.7L921.2 578.2L922.0 583.6L922.7 586.5L923.5 586.8L924.3 584.3L925.1 579.2L925.9 572.1L926.7 563.4L927.5 554.0L928.3 544.6L929.1 535.9L929.9 528.8L930.7 523.7L931.5 521.2L932.3 521.5L933.0 524.4L933.8 529.8L934.6 537.3L935.4 546.1L936.2 555.6L937.0 565.0L937.8 573.4L938.6 580.2L939.4 584.9L940.2 586.9L941.0 586.2L941.8 582.8L942.6 577.1L943.3 569.3L944.1 560.3L944.9 550.8L945.7 541.6L946.5 533.3L947.3 526.8L948.1 522.6L948.9 521.0L949.7 522.2L950.5 526.0L951.3 532.1L952.1 540.1L952.9 549.2L953.6 558.8L954.4 567.9L955.2 575.9L956.0 582.0L956.8 585.8L957.6 587.0L958.4 585.4L959.2 581.2L960.0 574.7L960.8 566.4L961.6 557.2L962.4 547.7L963.2 538.7L963.9 530.9L964.7 525.2L965.5 521.8L966.3 521.1L967.1 523.1L967.9 527.8L968.7 534.6L969.5 543.0L970.3 552.4L971.1 561.9L971.9 570.7L972.7 578.2L973.5 583.6L974.2 586.5L975.0 586.8L975.8 584.3L976.6 579.2L977.4 572.1L978.2 563.4L979.0 554.0L979.8 544.6L980.6 535.9L981.4 528.8L982.2 523.7L983.0 521.2L983.8 521.5L984.5 524.4L985.3 529.8L986.1 537.3L986.9 546.1L987.7 555.6L988.5 565.0L989.3 573.4L990.1 580.2L990.9 584.9L991.7 586.9L992.5 586.2L993.3 582.8L994.1 577.1L994.8 569.3L995.6 560.3L996.4 550.8L997.2 541.6L998.0 533.3L998.8 526.8L999.6 522.6L1000.4 521.0L1001.2 522.2L1002.0 526.0L1002.8 532.1L1003.6 540.1L1004.4 549.2L1005.1 558.8L1005.9 567.9L1006.7 575.9L1007.5 582.0L1008.3 585.8L1009.1 587.0L1009.9 585.4L1010.7 581.2L1011.5 574.7L1012.3 566.4L1013.1 557.2L1013.9 547.7L1014.7 538.7L1015.4 530.9L1016.2 525.2L1017.0 521.8L1017.8 521.1L1018.6 523.1L1019.4 527.8L1020.2 534.6L1021.0 543.0L1021.8 552.4L1022.6 561.9L1023.4 570.7L1024.2 578.2L1025.0 583.6L1025.7 586.5L1026.5 586.8L1027.3 584.3L1028.1 579.2L1028.9 572.1L1029.7 563.4L1030.5 554.0L1031.3 544.6L1032.1 535.9L1032.9 528.8L1033.7 523.7L1034.5 521.2L1035.3 521.5L1036.0 524.4L1036.8 529.8L1037.6 537.3L1038.4 546.1L1039.2 555.6L1040.0 565.0L1040.8 573.4L1041.6 580.2L1042.4 584.9L1043.2 586.9L1044.0 586.2L1044.8 582.8L1045.6 577.1L1046.3 569.3L1047.1 560.3L1047.9 550.8L1048.7 541.6L1049.5 533.3L1050.3 526.8L1051.1 522.6L1051.9 521.0L1052.7 522.2L1053.5 526.0L1054.3 532.1L1055.1 540.1L1055.9 549.2L1056.6 558.8L1057.4 567.9L1058.2 575.9L1059.0 582.0L1059.8 585.8L1060.6 587.0L1061.4 585.4L1062.2 581.2L1063.0 574.7L1063.8 566.4L1064.6 557.2L1065.4 547.7L1066.2 538.7L1066.9 530.9L1067.7 525.2L1068.5 521.8L1069.3 521.1L1070.1 523.1L1070.9 527.8L1071.7 534.6L1072.5 543.0L1073.3 552.4L1074.1 561.9L1074.9 570.7L1075.7 578.2L1076.5 583.6L1077.2 586.5L1078.0 586.8L1078.8 584.3L1079.6 579.2L1080.4 572.1L1081.2 563.4L1082.0 554.0" stroke="#7a2a9a" fill="none" stroke-width="1.2"/><path d="M876.0 554.0L876.8 540.8L877.6 529.7L878.4 522.4L879.2 520.0L880.0 523.0L880.8 530.8L881.5 542.3L882.3 555.6L883.1 568.7L883.9 579.4L884.7 586.2L885.5 587.9L886.3 584.3L887.1 575.9L887.9 564.1L888.7 550.7L889.5 537.8L890.3 527.5L891.1 521.3L891.8 520.2L892.6 524.5L893.4 533.4L894.2 545.5L895.0 558.9L895.8 571.6L896.6 581.5L897.4 587.1L898.2 587.5L899.0 582.7L899.8 573.3L900.6 560.9L901.4 547.5L902.1 535.0L902.9 525.6L903.7 520.6L904.5 520.8L905.3 526.3L906.1 536.1L906.9 548.7L907.7 562.1L908.5 574.3L909.3 583.3L910.1 587.7L910.9 586.8L911.7 580.8L912.4 570.5L913.2 557.7L914.0 544.3L914.8 532.4L915.6 523.9L916.4 520.1L917.2 521.7L918.0 528.3L918.8 538.9L919.6 551.9L920.4 565.3L921.2 576.9L922.0 584.8L922.7 588.0L923.5 585.8L924.3 578.6L925.1 567.6L925.9 554.4L926.7 541.2L927.5 530.0L928.3 522.5L929.1 520.0L929.9 522.8L930.7 530.5L931.5 541.9L932.3 555.2L933.0 568.3L933.8 579.2L934.6 586.1L935.4 587.9L936.2 584.5L937.0 576.2L937.8 564.5L938.6 551.1L939.4 538.2L940.2 527.8L941.0 521.4L941.8 520.2L942.6 524.3L943.3 533.0L944.1 545.1L944.9 558.5L945.7 571.2L946.5 581.3L947.3 587.0L948.1 587.6L948.9 582.9L949.7 573.7L950.5 561.3L951.3 547.9L952.1 535.4L952.9 525.8L953.6 520.6L954.4 520.7L955.2 526.0L956.0 535.7L956.8 548.3L957.6 561.7L958.4 574.0L959.2 583.1L960.0 587.6L960.8 586.9L961.6 581.0L962.4 570.9L963.2 558.1L963.9 544.7L964.7 532.7L965.5 524.1L966.3 520.2L967.1 521.5L967.9 528.0L968.7 538.6L969.5 551.5L970.3 564.9L971.1 576.5L971.9 584.7L972.7 588.0L973.5 585.9L974.2 578.9L975.0 568.0L975.8 554.8L976.6 541.6L977.4 530.3L978.2 522.7L979.0 520.0L979.8 522.7L980.6 530.3L981.4 541.6L982.2 554.8L983.0 568.0L983.8 578.9L984.5 585.9L985.3 588.0L986.1 584.7L986.9 576.5L987.7 564.9L988.5 551.5L989.3 538.6L990.1 528.0L990.9 521.5L991.7 520.2L992.5 524.1L993.3 532.7L994.1 544.7L994.8 558.1L995.6 570.9L996.4 581.0L997.2 586.9L998.0 587.6L998.8 583.1L999.6 574.0L1000.4 561.7L1001.2 548.3L1002.0 535.7L1002.8 526.0L1003.6 520.7L1004.4 520.6L1005.1 525.8L1005.9 535.4L1006.7 547.9L1007.5 561.3L1008.3 573.7L1009.1 582.9L1009.9 587.6L1010.7 587.0L1011.5 581.3L1012.3 571.2L1013.1 558.5L1013.9 545.1L1014.7 533.0L1015.4 524.3L1016.2 520.2L1017.0 521.4L1017.8 527.8L1018.6 538.2L1019.4 551.1L1020.2 564.5L1021.0 576.2L1021.8 584.5L1022.6 587.9L1023.4 586.1L1024.2 579.2L1025.0 568.3L1025.7 555.2L1026.5 541.9L1027.3 530.5L1028.1 522.8L1028.9 520.0L1029.7 522.5L1030.5 530.0L1031.3 541.2L1032.1 554.4L1032.9 567.6L1033.7 578.6L1034.5 585.8L1035.3 588.0L1036.0 584.8L1036.8 576.9L1037.6 565.3L1038.4 551.9L1039.2 538.9L1040.0 528.3L1040.8 521.7L1041.6 520.1L1042.4 523.9L1043.2 532.4L1044.0 544.3L1044.8 557.7L1045.6 570.5L1046.3 580.8L1047.1 586.8L1047.9 587.7L1048.7 583.3L1049.5 574.3L1050.3 562.1L1051.1 548.7L1051.9 536.1L1052.7 526.3L1053.5 520.8L1054.3 520.6L1055.1 525.6L1055.9 535.0L1056.6 547.5L1057.4 560.9L1058.2 573.3L1059.0 582.7L1059.8 587.5L1060.6 587.1L1061.4 581.5L1062.2 571.6L1063.0 558.9L1063.8 545.5L1064.6 533.4L1065.4 524.5L1066.2 520.2L1066.9 521.3L1067.7 527.5L1068.5 537.8L1069.3 550.7L1070.1 564.1L1070.9 575.9L1071.7 584.3L1072.5 587.9L1073.3 586.2L1074.1 579.4L1074.9 568.7L1075.7 555.6L1076.5 542.3L1077.2 530.8L1078.0 523.0L1078.8 520.0L1079.6 522.4L1080.4 529.7L1081.2 540.8L1082.0 554.0" stroke="#c82020" fill="none" stroke-width="1.2"/><path d="M877 503V602" stroke="#108010"/><path d="M1082.5 503V602M1184 503V602" stroke="#c82020" stroke-width="2"/><path d="M1083 526.5H1184" stroke="#c82020"/><path d="M1083 529.5H1184" stroke="#1a1a90"/><path d="M1083 531.5H1184" stroke="#1a1a90"/><path d="M1083 534.5H1184" stroke="#1a1a90"/><path d="M1083 536.5H1184" stroke="#1a1a90"/><path d="M1083 539.5H1184" stroke="#1a1a90"/><path d="M1185 554.5H1281" stroke="#c82020"/><path d="M1277 523.5H1282" stroke="#000"/><path d="M1277 543.5H1282" stroke="#000"/><path d="M1277 563.5H1282" stroke="#000"/><path d="M1277 583.5H1282" stroke="#000"/></svg>
<div class="t" style="left:847.6px;top:503.8px;font-size:12px;line-height:12px;color:#1a1a9a;">74.0</div>
<div class="t" style="left:847.6px;top:538.3px;font-size:12px;line-height:12px;color:#1a1a9a;">16.4</div>
<div class="t" style="left:843.6px;top:558.3px;font-size:12px;line-height:12px;color:#1a1a9a;">-12.4</div>
<div class="t" style="left:843.6px;top:591.8px;font-size:12px;line-height:12px;color:#1a1a9a;">-70.0</div>
<div class="t" style="left:820px;top:516px;font-size:12px;line-height:12px;color:#1a1a9a;transform:rotate(-90deg);transform-origin:20px 6px;width:40px">V (mV)</div>
<div class="t" style="left:873.7px;top:604.3px;font-size:12px;line-height:12px;color:#1a1a9a;">0</div>
<div class="t" style="left:1257.6px;top:604.3px;font-size:12px;line-height:12px;color:#1a1a9a;">20.5</div>
<div class="t" style="left:1246.6px;top:620.8px;font-size:12px;line-height:12px;color:#1a1a9a;">T (ms)</div>
<div class="t" style="left:834.0px;top:625.8px;font-size:12px;line-height:12px;font-weight:bold;color:#c01818;">Command</div>
<div class="t" style="left:932.0px;top:625.7px;font-size:11px;line-height:11px;">Part:</div>
<div class="t" style="left:969.0px;top:625.7px;font-size:11px;line-height:11px;color:#1a1a9a;">2</div>
<div class="t" style="left:987.0px;top:625.7px;font-size:11px;line-height:11px;">Epi:</div>
<div class="t" style="left:1010.0px;top:625.7px;font-size:11px;line-height:11px;color:#1a1a9a;">1</div>
<div class="t" style="left:1040.0px;top:625.7px;font-size:11px;line-height:11px;">x:</div>
<div class="t" style="left:1064.0px;top:625.7px;font-size:11px;line-height:11px;color:#1a1a9a;">15.5</div>
<div class="t" style="left:1106.0px;top:625.7px;font-size:11px;line-height:11px;">y:</div>
<div class="t" style="left:1127.0px;top:625.7px;font-size:11px;line-height:11px;color:#1a1a9a;">20.0</div>
<div class="a" style="left:821px;top:649px;width:469px;height:56px;background:#fff;border:2px solid #48a8a8;box-shadow:inset 1px 1px 0 #b0d8d8"></div>
<div class="t" style="left:835.0px;top:672.8px;font-size:12px;line-height:12px;color:#1a1a9a;">DO</div>
<div class="t" style="left:856.0px;top:655.7px;font-size:11px;line-height:11px;color:#1a1a9a;">3 -</div>
<div class="t" style="left:856.0px;top:668.2px;font-size:11px;line-height:11px;color:#1a1a9a;">2 -</div>
<div class="t" style="left:856.0px;top:678.7px;font-size:11px;line-height:11px;color:#1a1a9a;">1 -</div>
<div class="t" style="left:856.0px;top:689.7px;font-size:11px;line-height:11px;color:#1a1a9a;">0 -</div>
<svg class="a" style="left:0px;top:0px" width="1" height="1" viewBox="0 0 1 1"><path d="M876 664.5H1082V659.5H1184V664.5H1280M876 674.5H1082V669.5H1184V674.5H1280M876 679.5H880V684.5H1184V679.5H1280M876 694.5H880V689.5H1082V694.5H1280" stroke="#1a7a1a" fill="none" stroke-width="1.4"/></svg>
<div class="a" style="left:26px;top:572px;width:122px;height:106px;background:linear-gradient(#d2dde9,#e2eaf3 25px,#dde6f0);border:1px solid #a9bdd1;border-radius:6px 6px 0 0"></div>
<div class="a" style="left:28px;top:597px;width:118px;height:79px;background:#c2c2c2"></div>
<div class="t" style="left:87.0px;top:577.2px;font-size:15px;line-height:15px;color:#1e2530;"></div>
<svg class="a" style="left:30px;top:578px" width="16" height="15" viewBox="0 0 16 15"><rect width="16" height="15" fill="#30d8f0"/><path d="M2 6L6 3H15L12 6Z" fill="#1515c0"/><rect x="2" y="6" width="11" height="6" fill="#fff" stroke="#000" stroke-width="0.8"/><path d="M4 9H11" stroke="#000" stroke-dasharray="1 1"/></svg>
<div class="t" style="left:56.0px;top:578.3px;font-size:15px;line-height:15px;color:#1e2530;transform:scaleX(0.876);transform-origin:0 0;">Chan ...</div>
<div class="a" style="left:113px;top:577px;width:31px;height:17px;border:1px solid #8fa3b8;border-radius:3px;background:#e3ebf3"></div>
<svg class="a" style="left:122.5px;top:581px" width="12" height="10" viewBox="0 0 12 10"><path d="M2 1.5L10 8.5M10 1.5L2 8.5" stroke="#4a4a4a" stroke-width="3.8" stroke-linecap="round"/><path d="M2 1.5L10 8.5M10 1.5L2 8.5" stroke="#fff" stroke-width="1.7" stroke-linecap="round"/></svg>
<div class="t" style="left:33.0px;top:606.3px;font-size:12px;line-height:12px;font-weight:bold;">4</div>
<div class="t" style="left:47.5px;top:606.3px;font-size:12px;line-height:12px;font-weight:bold;transform:scaleX(0.950);transform-origin:0 0;">T(C):</div>
<div class="t" style="left:102.0px;top:606.3px;font-size:12px;line-height:12px;font-weight:bold;color:#1a1ac0;">-0.04</div>
<div class="t" style="left:33.0px;top:624.3px;font-size:12px;line-height:12px;font-weight:bold;">5</div>
<div class="t" style="left:47.5px;top:624.3px;font-size:12px;line-height:12px;font-weight:bold;transform:scaleX(0.950);transform-origin:0 0;">P(kP):</div>
<div class="t" style="left:102.0px;top:624.3px;font-size:12px;line-height:12px;font-weight:bold;color:#1a1ac0;">NC</div>
<div class="t" style="left:33.0px;top:640.8px;font-size:12px;line-height:12px;font-weight:bold;">6</div>
<div class="t" style="left:47.5px;top:640.8px;font-size:12px;line-height:12px;font-weight:bold;transform:scaleX(0.950);transform-origin:0 0;">Volt:</div>
<div class="t" style="left:102.0px;top:640.8px;font-size:12px;line-height:12px;font-weight:bold;color:#1a1ac0;">NC</div>
<div class="t" style="left:33.0px;top:658.3px;font-size:12px;line-height:12px;font-weight:bold;">7</div>
<div class="t" style="left:47.5px;top:658.3px;font-size:12px;line-height:12px;font-weight:bold;transform:scaleX(0.950);transform-origin:0 0;">test:</div>
<div class="t" style="left:102.0px;top:658.3px;font-size:12px;line-height:12px;font-weight:bold;color:#1a1ac0;">-1.18</div>
<div class="a" style="left:179px;top:533px;width:282px;height:146px;background:linear-gradient(#d2dde9,#e2eaf3 25px,#dde6f0);border:1px solid #a9bdd1;border-radius:6px 6px 0 0"></div>
<div class="a" style="left:181px;top:558px;width:278px;height:119px;background:#c2c2c2"></div>
<div class="t" style="left:261.7px;top:538.2px;font-size:15px;line-height:15px;color:#1e2530;">MC Telegraphs</div>
<div class="a" style="left:424px;top:537px;width:31px;height:18px;border:1px solid #8fa3b8;border-radius:3px;background:#e3ebf3"></div>
<svg class="a" style="left:433.5px;top:541px" width="12" height="10"><path d="M2 1.5L10 8.5M10 1.5L2 8.5" stroke="#4a4a4a" stroke-width="3.8" stroke-linecap="round"/><path d="M2 1.5L10 8.5M10 1.5L2 8.5" stroke="#fff" stroke-width="1.7" stroke-linecap="round"/></svg>
<svg class="a" style="left:184px;top:541px" width="15" height="13" viewBox="0 0 15 13"><rect width="15" height="13" fill="#30d8f0"/><path d="M2 5L5 2H14L11 5Z" fill="#1515c0"/><rect x="2" y="5" width="10" height="6" fill="#fff" stroke="#000" stroke-width="0.8"/></svg>
<div class="a" style="left:186px;top:565px;width:264px;height:49px;border:1px solid #8e8e8e;box-shadow:inset 1px 1px 0 #f6f6f6,1px 1px 0 #f6f6f6;"></div>
<div class="a" style="left:190px;top:562px;width:118px;height:11px;background:#c2c2c2"></div>
<div class="t" style="left:193.0px;top:560.8px;font-size:12px;line-height:12px;font-weight:bold;transform:scaleX(1.026);transform-origin:0 0;">Tele 0</div>
<div class="a" style="left:237px;top:562px;width:11px;height:11px;background:#fdfde8;border-top:1px solid #808080;border-left:1px solid #808080;border-bottom:1px solid #fff;border-right:1px solid #fff;"></div>
<svg class="a" style="left:237px;top:562px" width="11" height="11"><path d="M2.5 2.5L8.5 8.5M8.5 2.5L2.5 8.5" stroke="#000" stroke-width="2.2"/></svg>
<div class="t" style="left:257.0px;top:560.8px;font-size:12px;line-height:12px;font-weight:bold;transform:scaleX(0.973);transform-origin:0 0;">[Ext: off]</div>
<div class="a" style="left:193px;top:576.5px;width:122.5px;height:31.5px;border:1px solid #8e8e8e;box-shadow:inset 1px 1px 0 #f6f6f6,1px 1px 0 #f6f6f6;"></div>
<div class="a" style="left:198px;top:574.5px;width:32px;height:10px;background:#c2c2c2"></div>
<div class="t" style="left:200.0px;top:573.3px;font-size:12px;line-height:12px;font-weight:bold;transform:scaleX(0.954);transform-origin:0 0;">Ch13</div>
<div class="t" style="left:201.0px;top:587.3px;font-size:12px;line-height:12px;color:#1a1a9a;">1</div>
<div class="a" style="left:237px;top:581.5px;width:11px;height:11px;background:#fdfde8;border-top:1px solid #808080;border-left:1px solid #808080;border-bottom:1px solid #fff;border-right:1px solid #fff;"></div>
<svg class="a" style="left:237px;top:581.5px" width="11" height="11"><path d="M2.5 2.5L8.5 8.5M8.5 2.5L2.5 8.5" stroke="#000" stroke-width="2.2"/></svg>
<div class="a" style="left:252px;top:584px;width:57px;height:19.5px;background:#fdfde8;border-top:1px solid #808080;border-left:1px solid #808080;border-bottom:1px solid #fff;border-right:1px solid #fff;"></div>
<div class="t" style="left:255.0px;top:587.9px;font-size:12px;line-height:12px;">Gain</div>
<div class="a" style="left:291px;top:585px;width:17px;height:17.5px;background:#d4d4d4;border-top:1px solid #fff;border-left:1px solid #fff;border-bottom:1px solid #6a6a6a;border-right:1px solid #6a6a6a;"></div>
<svg class="a" style="left:295px;top:591.25px" width="9" height="5"><path d="M0 0H9L4.5 5Z" fill="#000"/></svg>
<div class="a" style="left:322px;top:576.5px;width:122.5px;height:31.5px;border:1px solid #8e8e8e;box-shadow:inset 1px 1px 0 #f6f6f6,1px 1px 0 #f6f6f6;"></div>
<div class="a" style="left:328px;top:574.5px;width:32px;height:10px;background:#c2c2c2"></div>
<div class="t" style="left:330.0px;top:573.3px;font-size:12px;line-height:12px;font-weight:bold;transform:scaleX(0.954);transform-origin:0 0;">Ch14</div>
<div class="t" style="left:330.0px;top:587.3px;font-size:12px;line-height:12px;color:#1a1a9a;">VClp</div>
<div class="a" style="left:366px;top:581.5px;width:11px;height:11px;background:#fdfde8;border-top:1px solid #808080;border-left:1px solid #808080;border-bottom:1px solid #fff;border-right:1px solid #fff;"></div>
<svg class="a" style="left:366px;top:581.5px" width="11" height="11"><path d="M2.5 2.5L8.5 8.5M8.5 2.5L2.5 8.5" stroke="#000" stroke-width="2.2"/></svg>
<div class="a" style="left:381px;top:584px;width:57px;height:19.5px;background:#fdfde8;border-top:1px solid #808080;border-left:1px solid #808080;border-bottom:1px solid #fff;border-right:1px solid #fff;"></div>
<div class="t" style="left:384.0px;top:587.9px;font-size:12px;line-height:12px;">Mode</div>
<div class="a" style="left:420px;top:585px;width:17px;height:17.5px;background:#d4d4d4;border-top:1px solid #fff;border-left:1px solid #fff;border-bottom:1px solid #6a6a6a;border-right:1px solid #6a6a6a;"></div>
<svg class="a" style="left:424px;top:591.25px" width="9" height="5"><path d="M0 0H9L4.5 5Z" fill="#000"/></svg>
<div class="a" style="left:186px;top:622px;width:264px;height:49px;border:1px solid #8e8e8e;box-shadow:inset 1px 1px 0 #f6f6f6,1px 1px 0 #f6f6f6;"></div>
<div class="a" style="left:190px;top:619px;width:118px;height:11px;background:#c2c2c2"></div>
<div class="t" style="left:193.0px;top:617.8px;font-size:12px;line-height:12px;font-weight:bold;transform:scaleX(1.026);transform-origin:0 0;">Tele 1</div>
<div class="a" style="left:237px;top:619px;width:11px;height:11px;background:#fdfde8;border-top:1px solid #808080;border-left:1px solid #808080;border-bottom:1px solid #fff;border-right:1px solid #fff;"></div>
<svg class="a" style="left:237px;top:619px" width="11" height="11"><path d="M2.5 2.5L8.5 8.5M8.5 2.5L2.5 8.5" stroke="#000" stroke-width="2.2"/></svg>
<div class="t" style="left:257.0px;top:617.8px;font-size:12px;line-height:12px;font-weight:bold;transform:scaleX(0.973);transform-origin:0 0;">[Ext: off]</div>
<div class="a" style="left:193px;top:633.5px;width:122.5px;height:31.5px;border:1px solid #8e8e8e;box-shadow:inset 1px 1px 0 #f6f6f6,1px 1px 0 #f6f6f6;"></div>
<div class="a" style="left:198px;top:631.5px;width:32px;height:10px;background:#c2c2c2"></div>
<div class="t" style="left:200.0px;top:630.3px;font-size:12px;line-height:12px;font-weight:bold;transform:scaleX(0.954);transform-origin:0 0;">Ch10</div>
<div class="t" style="left:201.0px;top:644.3px;font-size:12px;line-height:12px;color:#1a1a9a;">1</div>
<div class="a" style="left:237px;top:638.5px;width:11px;height:11px;background:#fdfde8;border-top:1px solid #808080;border-left:1px solid #808080;border-bottom:1px solid #fff;border-right:1px solid #fff;"></div>
<svg class="a" style="left:237px;top:638.5px" width="11" height="11"><path d="M2.5 2.5L8.5 8.5M8.5 2.5L2.5 8.5" stroke="#000" stroke-width="2.2"/></svg>
<div class="a" style="left:252px;top:641px;width:57px;height:19.5px;background:#fdfde8;border-top:1px solid #808080;border-left:1px solid #808080;border-bottom:1px solid #fff;border-right:1px solid #fff;"></div>
<div class="t" style="left:255.0px;top:644.9px;font-size:12px;line-height:12px;">Gain</div>
<div class="a" style="left:291px;top:642px;width:17px;height:17.5px;background:#d4d4d4;border-top:1px solid #fff;border-left:1px solid #fff;border-bottom:1px solid #6a6a6a;border-right:1px solid #6a6a6a;"></div>
<svg class="a" style="left:295px;top:648.25px" width="9" height="5"><path d="M0 0H9L4.5 5Z" fill="#000"/></svg>
<div class="a" style="left:322px;top:633.5px;width:122.5px;height:31.5px;border:1px solid #8e8e8e;box-shadow:inset 1px 1px 0 #f6f6f6,1px 1px 0 #f6f6f6;"></div>
<div class="a" style="left:328px;top:631.5px;width:32px;height:10px;background:#c2c2c2"></div>
<div class="t" style="left:330.0px;top:630.3px;font-size:12px;line-height:12px;font-weight:bold;transform:scaleX(0.976);transform-origin:0 0;">Ch11</div>
<div class="t" style="left:330.0px;top:644.3px;font-size:12px;line-height:12px;color:#1a1a9a;">VClp</div>
<div class="a" style="left:366px;top:638.5px;width:11px;height:11px;background:#fdfde8;border-top:1px solid #808080;border-left:1px solid #808080;border-bottom:1px solid #fff;border-right:1px solid #fff;"></div>
<svg class="a" style="left:366px;top:638.5px" width="11" height="11"><path d="M2.5 2.5L8.5 8.5M8.5 2.5L2.5 8.5" stroke="#000" stroke-width="2.2"/></svg>
<div class="a" style="left:381px;top:641px;width:57px;height:19.5px;background:#fdfde8;border-top:1px solid #808080;border-left:1px solid #808080;border-bottom:1px solid #fff;border-right:1px solid #fff;"></div>
<div class="t" style="left:384.0px;top:644.9px;font-size:12px;line-height:12px;">Mode</div>
<div class="a" style="left:420px;top:642px;width:17px;height:17.5px;background:#d4d4d4;border-top:1px solid #fff;border-left:1px solid #fff;border-bottom:1px solid #6a6a6a;border-right:1px solid #6a6a6a;"></div>
<svg class="a" style="left:424px;top:648.25px" width="9" height="5"><path d="M0 0H9L4.5 5Z" fill="#000"/></svg>
<svg class="a" style="left:21px;top:731px" width="92" height="97" viewBox="0 0 92 97"><ellipse cx="18" cy="14" rx="10" ry="8" fill="#151515" transform="rotate(-35 18 14)"/><ellipse cx="74" cy="14" rx="10" ry="8" fill="#151515" transform="rotate(35 74 14)"/><rect x="37" y="1" width="18" height="8" rx="2" fill="#151515"/><ellipse cx="46" cy="51" rx="45" ry="45" fill="#3c3c3c" stroke="#dfe8ef" stroke-width="1"/><ellipse cx="46" cy="51" rx="40" ry="41" fill="#585858"/><ellipse cx="46" cy="51" rx="35" ry="36" fill="#444"/><rect x="30" y="14" width="32" height="10" rx="2" fill="#1a1a1a"/><text x="46" y="22" font-size="9" font-family="Liberation Mono" fill="#ff5a3a" text-anchor="middle">Timer</text><rect x="14" y="25" width="66" height="38" rx="8" fill="#c4c4c4" stroke="#222" stroke-width="1.5"/><text x="27" y="37" font-size="10" font-family="Liberation Sans" fill="#e02020">m</text><text x="52" y="37" font-size="10" font-family="Liberation Sans" fill="#e02020">s</text><text x="47" y="53" font-size="18" font-family="Liberation Sans" fill="#1010d0" text-anchor="middle" textLength="58" lengthAdjust="spacingAndGlyphs">00:00.0</text><rect x="24" y="63" width="14" height="10" rx="1" fill="#e0e0e0" stroke="#111" stroke-width="0.8"/><rect x="40" y="63" width="14" height="10" rx="1" fill="#e0e0e0" stroke="#111" stroke-width="0.8"/><rect x="56" y="63" width="14" height="10" rx="1" fill="#e0e0e0" stroke="#111" stroke-width="0.8"/><path d="M20 84Q46 98 72 84" stroke="#222" fill="none" stroke-width="4"/></svg>
<svg class="a" style="left:62px;top:921px" width="92" height="97" viewBox="0 0 92 97"><ellipse cx="18" cy="14" rx="10" ry="8" fill="#151515" transform="rotate(-35 18 14)"/><ellipse cx="74" cy="14" rx="10" ry="8" fill="#151515" transform="rotate(35 74 14)"/><rect x="37" y="1" width="18" height="8" rx="2" fill="#151515"/><ellipse cx="46" cy="51" rx="45" ry="45" fill="#3c3c3c" stroke="#dfe8ef" stroke-width="1"/><ellipse cx="46" cy="51" rx="40" ry="41" fill="#585858"/><ellipse cx="46" cy="51" rx="35" ry="36" fill="#444"/><rect x="30" y="14" width="32" height="10" rx="2" fill="#1a1a1a"/><text x="46" y="22" font-size="9" font-family="Liberation Mono" fill="#ff5a3a" text-anchor="middle">Timer</text><rect x="14" y="25" width="66" height="38" rx="8" fill="#c4c4c4" stroke="#222" stroke-width="1.5"/><text x="27" y="37" font-size="10" font-family="Liberation Sans" fill="#e02020">m</text><text x="52" y="37" font-size="10" font-family="Liberation Sans" fill="#e02020">s</text><text x="51" y="53" font-size="18" font-family="Liberation Sans" fill="#1010d0" text-anchor="middle" textLength="49" lengthAdjust="spacingAndGlyphs">2:18.7</text><rect x="24" y="63" width="14" height="10" rx="1" fill="#e0e0e0" stroke="#111" stroke-width="0.8"/><rect x="40" y="63" width="14" height="10" rx="1" fill="#e0e0e0" stroke="#111" stroke-width="0.8"/><rect x="56" y="63" width="14" height="10" rx="1" fill="#e0e0e0" stroke="#111" stroke-width="0.8"/><path d="M20 84Q46 98 72 84" stroke="#222" fill="none" stroke-width="4"/></svg>
<div class="a" style="left:216px;top:709px;width:591px;height:279px;background:#dbe6f1;border:1px solid #a9bdd1;border-radius:7px 7px 0 0"></div>
<div class="a" style="left:223px;top:740px;width:577px;height:241px;background:#c2c2c2"></div>
<svg class="a" style="left:225px;top:719px" width="15" height="15" viewBox="0 0 15 15"><rect x="1" y="1" width="13" height="13" fill="#fff"/><path d="M1.5 1V14M1 2H14M4 5H14M4 8H14M4 11H14" stroke="#000" stroke-width="1.2"/></svg>
<div class="t" style="left:317.0px;top:720.3px;font-size:15px;line-height:15px;color:#1e2530;transform:scaleX(0.974);transform-origin:0 0;">File: c:\jcdata\JS15119\S5119010.abf (vClamp)</div>
<div class="a" style="left:699px;top:718px;width:30px;height:17px;border:1px solid #8fa3b8;border-radius:3px;background:#e3ebf3"></div>
<div class="a" style="left:709px;top:726px;width:10px;height:3px;border:1px solid #555;background:#fff"></div>
<div class="a" style="left:732px;top:718px;width:31px;height:17px;border:1px solid #8fa3b8;border-radius:3px;background:#e3ebf3"></div>
<div class="a" style="left:742.5px;top:722px;width:10px;height:8px;border:1px solid #555;border-top-width:2px;background:#fff"></div>
<div class="a" style="left:766px;top:718px;width:32px;height:17px;border:1px solid #8fa3b8;border-radius:3px;background:#e3ebf3"></div>
<svg class="a" style="left:776px;top:722px" width="12" height="10" viewBox="0 0 12 10"><path d="M2 1.5L10 8.5M10 1.5L2 8.5" stroke="#4a4a4a" stroke-width="3.8" stroke-linecap="round"/><path d="M2 1.5L10 8.5M10 1.5L2 8.5" stroke="#fff" stroke-width="1.7" stroke-linecap="round"/></svg>
<div class="a" style="left:238px;top:744px;width:48px;height:18px;background:#c2c2c2;border:1px solid #f2f2f2;border-right-color:#999;border-bottom-color:#999"></div>
<div class="t" style="left:243.0px;top:747.8px;font-size:12px;line-height:12px;font-weight:bold;color:#c81818;">jclamp</div>
<div class="a" style="left:577px;top:743px;width:131px;height:18px;background:#c2c2c2;border-top:1px solid #808080;border-left:1px solid #808080;border-bottom:1px solid #fff;border-right:1px solid #fff;"></div>
<div class="t" style="left:585.0px;top:746.8px;font-size:12px;line-height:12px;font-weight:bold;">Avg:</div>
<div class="t" style="left:620.0px;top:746.8px;font-size:12px;line-height:12px;font-weight:bold;color:#1a1ac0;">1</div>
<div class="t" style="left:651.0px;top:746.8px;font-size:12px;line-height:12px;font-weight:bold;">Epi:</div>
<div class="t" style="left:677.0px;top:746.8px;font-size:12px;line-height:12px;font-weight:bold;color:#1a1ac0;">5</div>
<div class="a" style="left:717px;top:743px;width:70px;height:28px;border:1px solid #8e8e8e;box-shadow:inset 1px 1px 0 #f6f6f6,1px 1px 0 #f6f6f6;"></div>
<div class="a" style="left:724px;top:737px;width:56px;height:13px;background:#c2c2c2"></div>
<div class="t" style="left:729.0px;top:739.8px;font-size:12px;line-height:12px;font-weight:bold;transform:scaleX(0.971);transform-origin:0 0;">Channel</div>
<div class="a" style="left:728px;top:755px;width:12px;height:12px;border-radius:50%;background:#fdfde8;border:1px solid #a8a8a8;border-top-color:#707070;border-left-color:#707070"></div>
<div class="a" style="left:732px;top:759px;width:4px;height:4px;border-radius:50%;background:#000"></div>
<div class="t" style="left:746.0px;top:755.8px;font-size:12px;line-height:12px;font-weight:bold;color:#1a1ac0;">0 [0]</div>
<div class="a" style="left:240px;top:769px;width:468px;height:179px;border:1px solid #8e8e8e;box-shadow:inset 1px 1px 0 #f6f6f6,1px 1px 0 #f6f6f6;"></div>
<div class="a" style="left:246px;top:779px;width:454px;height:163px;background:#fff;border:2px solid #48a8a8;box-shadow:inset 1px 1px 0 #b0d8d8"></div>
<div class="a" style="left:320px;top:787px;width:350px;height:120px;border:1px solid #000"></div>
<svg class="a" style="left:0px;top:0px" width="1" height="1" viewBox="0 0 1 1"><path d="M390.5 787V792M390.5 902V907" stroke="#000"/><path d="M460.5 787V792M460.5 902V907" stroke="#000"/><path d="M530.5 787V792M530.5 902V907" stroke="#000"/><path d="M600.5 787V792M600.5 902V907" stroke="#000"/><path d="M321.0 848.0L321.4 847.9L321.9 847.8L322.3 847.7L322.8 847.6L323.2 847.5L323.7 847.4L324.1 847.3L324.6 847.2L325.0 847.2L325.5 847.1L325.9 847.0L326.4 846.9L326.8 846.8L327.3 846.7L327.7 846.6L328.2 846.5L328.6 846.4L329.1 846.3L329.5 846.2L329.9 846.1L330.4 846.1L330.8 846.0L331.3 845.9L331.7 845.8L332.2 845.7L332.6 845.6L333.1 845.5L333.5 845.4L334.0 845.4L334.4 845.3L334.9 845.2L335.3 845.1L335.8 845.0L336.2 844.9L336.7 844.9L337.1 844.8L337.6 844.7L338.0 844.6L338.5 844.5L338.9 844.5L339.3 844.4L339.8 844.3L340.2 844.2L340.7 844.2L341.1 844.1L341.6 844.0L342.0 844.0L342.5 843.9L342.9 843.8L343.4 843.8L343.8 843.7L344.3 843.6L344.7 843.6L345.2 843.5L345.6 843.4L346.1 843.4L346.5 843.3L347.0 843.3L347.4 843.2L347.9 843.1L348.3 843.1L348.7 843.0L349.2 843.0L349.6 842.9L350.1 842.9L350.5 842.8L351.0 842.8L351.4 842.7L351.9 842.7L352.3 842.7L352.8 842.6L353.2 842.6L353.7 842.5L354.1 842.5L354.6 842.5L355.0 842.4L355.5 842.4L355.9 842.4L356.4 842.3L356.8 842.3L357.2 842.3L357.7 842.2L358.1 842.2L358.6 842.2L359.0 842.2L359.5 842.1L359.9 842.1L360.4 842.1L360.8 842.1L361.3 842.1L361.7 842.1L362.2 842.0L362.6 842.0L363.1 842.0L363.5 842.0L364.0 842.0L364.4 842.0L364.9 842.0L365.3 842.0L365.8 842.0L366.2 842.0L366.6 842.0L367.1 842.0L367.5 842.0L368.0 842.0L368.4 842.0L368.9 842.0L369.3 842.0L369.8 842.1L370.2 842.1L370.7 842.1L371.1 842.1L371.6 842.1L372.0 842.1L372.5 842.2L372.9 842.2L373.4 842.2L373.8 842.2L374.3 842.3L374.7 842.3L375.1 842.3L375.6 842.4L376.0 842.4L376.5 842.4L376.9 842.5L377.4 842.5L377.8 842.5L378.3 842.6L378.7 842.6L379.2 842.7L379.6 842.7L380.1 842.7L380.5 842.8L381.0 842.8L381.4 842.9L381.9 842.9L382.3 843.0L382.8 843.0L383.2 843.1L383.6 843.1L384.1 843.2L384.5 843.3L385.0 843.3L385.4 843.4L385.9 843.4L386.3 843.5L386.8 843.6L387.2 843.6L387.7 843.7L388.1 843.8L388.6 843.8L389.0 843.9L389.5 844.0L389.9 844.0L390.4 844.1L390.8 844.2L391.3 844.2L391.7 844.3L392.2 844.4L392.6 844.5L393.0 844.5L393.5 844.6L393.9 844.7L394.4 844.8L394.8 844.9L395.3 844.9L395.7 845.0L396.2 845.1L396.6 845.2L397.1 845.3L397.5 845.4L398.0 845.4L398.4 845.5L398.9 845.6L399.3 845.7L399.8 845.8L400.2 845.9L400.7 846.0L401.1 846.1L401.6 846.1L402.0 846.2L402.4 846.3L402.9 846.4L403.3 846.5L403.8 846.6L404.2 846.7L404.7 846.8L405.1 846.9L405.6 847.0L406.0 847.1L406.5 847.2L406.9 847.2L407.4 847.3L407.8 847.4L408.3 847.5L408.7 847.6L409.2 847.7L409.6 847.8L410.1 847.9L410.5 848.0L410.9 848.1L411.4 848.2L411.8 848.3L412.3 848.4L412.7 848.5L413.2 848.6L413.6 848.7L414.1 848.8L414.5 848.8L415.0 848.9L415.4 849.0L415.9 849.1L416.3 849.2L416.8 849.3L417.2 849.4L417.7 849.5L418.1 849.6L418.6 849.7L419.0 849.8L419.4 849.9L419.9 849.9L420.3 850.0L420.8 850.1L421.2 850.2L421.7 850.3L422.1 850.4L422.6 850.5L423.0 850.6L423.5 850.6L423.9 850.7L424.4 850.8L424.8 850.9L425.3 851.0L425.7 851.1L426.2 851.1L426.6 851.2L427.1 851.3L427.5 851.4L428.0 851.5L428.4 851.5L428.8 851.6L429.3 851.7L429.7 851.8L430.2 851.8L430.6 851.9L431.1 852.0L431.5 852.0L432.0 852.1L432.4 852.2L432.9 852.2L433.3 852.3L433.8 852.4L434.2 852.4L434.7 852.5L435.1 852.6L435.6 852.6L436.0 852.7L436.5 852.7L436.9 852.8L437.4 852.9L437.8 852.9L438.2 853.0L438.7 853.0L439.1 853.1L439.6 853.1L440.0 853.2L440.5 853.2L440.9 853.3L441.4 853.3L441.8 853.3L442.3 853.4L442.7 853.4L443.2 853.5L443.6 853.5L444.1 853.5L444.5 853.6L445.0 853.6L445.4 853.6L445.9 853.7L446.3 853.7L446.7 853.7L447.2 853.8L447.6 853.8L448.1 853.8L448.5 853.8L449.0 853.9L449.4 853.9L449.9 853.9L450.3 853.9L450.8 853.9L451.2 853.9L451.7 854.0L452.1 854.0L452.6 854.0L453.0 854.0L453.5 854.0L453.9 854.0L454.4 854.0L454.8 854.0L455.2 854.0L455.7 854.0L456.1 854.0L456.6 854.0L457.0 854.0L457.5 854.0L457.9 854.0L458.4 854.0L458.8 854.0L459.3 853.9L459.7 853.9L460.2 853.9L460.6 853.9L461.1 853.9L461.5 853.9L462.0 853.8L462.4 853.8L462.9 853.8L463.3 853.8L463.8 853.7L464.2 853.7L464.6 853.7L465.1 853.6L465.5 853.6L466.0 853.6L466.4 853.5L466.9 853.5L467.3 853.5L467.8 853.4L468.2 853.4L468.7 853.3L469.1 853.3L469.6 853.3L470.0 853.2L470.5 853.2L470.9 853.1L471.4 853.1L471.8 853.0L472.3 853.0L472.7 852.9L473.1 852.9L473.6 852.8L474.0 852.7L474.5 852.7L474.9 852.6L475.4 852.6L475.8 852.5L476.3 852.4L476.7 852.4L477.2 852.3L477.6 852.2L478.1 852.2L478.5 852.1L479.0 852.0L479.4 852.0L479.9 851.9L480.3 851.8L480.8 851.8L481.2 851.7L481.7 851.6L482.1 851.5L482.5 851.5L483.0 851.4L483.4 851.3L483.9 851.2L484.3 851.1L484.8 851.1L485.2 851.0L485.7 850.9L486.1 850.8L486.6 850.7L487.0 850.6L487.5 850.6L487.9 850.5L488.4 850.4L488.8 850.3L489.3 850.2L489.7 850.1L490.2 850.0L490.6 849.9L491.1 849.9L491.5 849.8L491.9 849.7L492.4 849.6L492.8 849.5L493.3 849.4L493.7 849.3L494.2 849.2L494.6 849.1L495.1 849.0L495.5 848.9L496.0 848.8L496.4 848.8L496.9 848.7L497.3 848.6L497.8 848.5L498.2 848.4L498.7 848.3L499.1 848.2L499.6 848.1L500.0 848.0" stroke="#2020b0" fill="none" stroke-width="1.1"/><path d="M321.0 848.0L321.4 847.6L321.9 847.2L322.3 846.8L322.8 846.4L323.2 846.0L323.7 845.6L324.1 845.2L324.6 844.8L325.0 844.4L325.5 844.0L325.9 843.6L326.4 843.2L326.8 842.8L327.3 842.5L327.7 842.1L328.2 841.7L328.6 841.4L329.1 841.0L329.5 840.7L329.9 840.4L330.4 840.0L330.8 839.7L331.3 839.4L331.7 839.1L332.2 838.8L332.6 838.5L333.1 838.2L333.5 838.0L334.0 837.7L334.4 837.5L334.9 837.2L335.3 837.0L335.8 836.8L336.2 836.6L336.7 836.4L337.1 836.2L337.6 836.1L338.0 835.9L338.5 835.8L338.9 835.6L339.3 835.5L339.8 835.4L340.2 835.3L340.7 835.2L341.1 835.2L341.6 835.1L342.0 835.1L342.5 835.0L342.9 835.0L343.4 835.0L343.8 835.0L344.3 835.0L344.7 835.1L345.2 835.1L345.6 835.2L346.1 835.2L346.5 835.3L347.0 835.4L347.4 835.5L347.9 835.6L348.3 835.8L348.7 835.9L349.2 836.1L349.6 836.2L350.1 836.4L350.5 836.6L351.0 836.8L351.4 837.0L351.9 837.2L352.3 837.5L352.8 837.7L353.2 838.0L353.7 838.2L354.1 838.5L354.6 838.8L355.0 839.1L355.5 839.4L355.9 839.7L356.4 840.0L356.8 840.4L357.2 840.7L357.7 841.0L358.1 841.4L358.6 841.7L359.0 842.1L359.5 842.5L359.9 842.8L360.4 843.2L360.8 843.6L361.3 844.0L361.7 844.4L362.2 844.8L362.6 845.2L363.1 845.6L363.5 846.0L364.0 846.4L364.4 846.8L364.9 847.2L365.3 847.6L365.8 848.0L366.2 848.4L366.6 848.8L367.1 849.2L367.5 849.6L368.0 850.0L368.4 850.4L368.9 850.8L369.3 851.2L369.8 851.6L370.2 852.0L370.7 852.4L371.1 852.8L371.6 853.2L372.0 853.5L372.5 853.9L372.9 854.3L373.4 854.6L373.8 855.0L374.3 855.3L374.7 855.6L375.1 856.0L375.6 856.3L376.0 856.6L376.5 856.9L376.9 857.2L377.4 857.5L377.8 857.8L378.3 858.0L378.7 858.3L379.2 858.5L379.6 858.8L380.1 859.0L380.5 859.2L381.0 859.4L381.4 859.6L381.9 859.8L382.3 859.9L382.8 860.1L383.2 860.2L383.6 860.4L384.1 860.5L384.5 860.6L385.0 860.7L385.4 860.8L385.9 860.8L386.3 860.9L386.8 860.9L387.2 861.0L387.7 861.0L388.1 861.0L388.6 861.0L389.0 861.0L389.5 860.9L389.9 860.9L390.4 860.8L390.8 860.8L391.3 860.7L391.7 860.6L392.2 860.5L392.6 860.4L393.0 860.2L393.5 860.1L393.9 859.9L394.4 859.8L394.8 859.6L395.3 859.4L395.7 859.2L396.2 859.0L396.6 858.8L397.1 858.5L397.5 858.3L398.0 858.0L398.4 857.8L398.9 857.5L399.3 857.2L399.8 856.9L400.2 856.6L400.7 856.3L401.1 856.0L401.6 855.6L402.0 855.3L402.4 855.0L402.9 854.6L403.3 854.3L403.8 853.9L404.2 853.5L404.7 853.2L405.1 852.8L405.6 852.4L406.0 852.0L406.5 851.6L406.9 851.2L407.4 850.8L407.8 850.4L408.3 850.0L408.7 849.6L409.2 849.2L409.6 848.8L410.1 848.4L410.5 848.0L410.9 847.6L411.4 847.2L411.8 846.8L412.3 846.4L412.7 846.0L413.2 845.6L413.6 845.2L414.1 844.8L414.5 844.4L415.0 844.0L415.4 843.6L415.9 843.2L416.3 842.8L416.8 842.5L417.2 842.1L417.7 841.7L418.1 841.4L418.6 841.0L419.0 840.7L419.4 840.4L419.9 840.0L420.3 839.7L420.8 839.4L421.2 839.1L421.7 838.8L422.1 838.5L422.6 838.2L423.0 838.0L423.5 837.7L423.9 837.5L424.4 837.2L424.8 837.0L425.3 836.8L425.7 836.6L426.2 836.4L426.6 836.2L427.1 836.1L427.5 835.9L428.0 835.8L428.4 835.6L428.8 835.5L429.3 835.4L429.7 835.3L430.2 835.2L430.6 835.2L431.1 835.1L431.5 835.1L432.0 835.0L432.4 835.0L432.9 835.0L433.3 835.0L433.8 835.0L434.2 835.1L434.7 835.1L435.1 835.2L435.6 835.2L436.0 835.3L436.5 835.4L436.9 835.5L437.4 835.6L437.8 835.8L438.2 835.9L438.7 836.1L439.1 836.2L439.6 836.4L440.0 836.6L440.5 836.8L440.9 837.0L441.4 837.2L441.8 837.5L442.3 837.7L442.7 838.0L443.2 838.2L443.6 838.5L444.1 838.8L444.5 839.1L445.0 839.4L445.4 839.7L445.9 840.0L446.3 840.4L446.7 840.7L447.2 841.0L447.6 841.4L448.1 841.7L448.5 842.1L449.0 842.5L449.4 842.8L449.9 843.2L450.3 843.6L450.8 844.0L451.2 844.4L451.7 844.8L452.1 845.2L452.6 845.6L453.0 846.0L453.5 846.4L453.9 846.8L454.4 847.2L454.8 847.6L455.2 848.0L455.7 848.4L456.1 848.8L456.6 849.2L457.0 849.6L457.5 850.0L457.9 850.4L458.4 850.8L458.8 851.2L459.3 851.6L459.7 852.0L460.2 852.4L460.6 852.8L461.1 853.2L461.5 853.5L462.0 853.9L462.4 854.3L462.9 854.6L463.3 855.0L463.8 855.3L464.2 855.6L464.6 856.0L465.1 856.3L465.5 856.6L466.0 856.9L466.4 857.2L466.9 857.5L467.3 857.8L467.8 858.0L468.2 858.3L468.7 858.5L469.1 858.8L469.6 859.0L470.0 859.2L470.5 859.4L470.9 859.6L471.4 859.8L471.8 859.9L472.3 860.1L472.7 860.2L473.1 860.4L473.6 860.5L474.0 860.6L474.5 860.7L474.9 860.8L475.4 860.8L475.8 860.9L476.3 860.9L476.7 861.0L477.2 861.0L477.6 861.0L478.1 861.0L478.5 861.0L479.0 860.9L479.4 860.9L479.9 860.8L480.3 860.8L480.8 860.7L481.2 860.6L481.7 860.5L482.1 860.4L482.5 860.2L483.0 860.1L483.4 859.9L483.9 859.8L484.3 859.6L484.8 859.4L485.2 859.2L485.7 859.0L486.1 858.8L486.6 858.5L487.0 858.3L487.5 858.0L487.9 857.8L488.4 857.5L488.8 857.2L489.3 856.9L489.7 856.6L490.2 856.3L490.6 856.0L491.1 855.6L491.5 855.3L491.9 855.0L492.4 854.6L492.8 854.3L493.3 853.9L493.7 853.5L494.2 853.2L494.6 852.8L495.1 852.4L495.5 852.0L496.0 851.6L496.4 851.2L496.9 850.8L497.3 850.4L497.8 850.0L498.2 849.6L498.7 849.2L499.1 848.8L499.6 848.4L500.0 848.0" stroke="#2020b0" fill="none" stroke-width="1.1"/><path d="M321.0 848.0L321.4 846.4L321.9 844.9L322.3 843.3L322.8 841.8L323.2 840.3L323.7 838.8L324.1 837.4L324.6 836.0L325.0 834.6L325.5 833.3L325.9 832.1L326.4 830.9L326.8 829.8L327.3 828.7L327.7 827.8L328.2 826.9L328.6 826.1L329.1 825.4L329.5 824.8L329.9 824.2L330.4 823.8L330.8 823.4L331.3 823.2L331.7 823.0L332.2 823.0L332.6 823.0L333.1 823.2L333.5 823.4L334.0 823.8L334.4 824.2L334.9 824.8L335.3 825.4L335.8 826.1L336.2 826.9L336.7 827.8L337.1 828.7L337.6 829.8L338.0 830.9L338.5 832.1L338.9 833.3L339.3 834.6L339.8 836.0L340.2 837.4L340.7 838.8L341.1 840.3L341.6 841.8L342.0 843.3L342.5 844.9L342.9 846.4L343.4 848.0L343.8 849.6L344.3 851.1L344.7 852.7L345.2 854.2L345.6 855.7L346.1 857.2L346.5 858.6L347.0 860.0L347.4 861.4L347.9 862.7L348.3 863.9L348.7 865.1L349.2 866.2L349.6 867.3L350.1 868.2L350.5 869.1L351.0 869.9L351.4 870.6L351.9 871.2L352.3 871.8L352.8 872.2L353.2 872.6L353.7 872.8L354.1 873.0L354.6 873.0L355.0 873.0L355.5 872.8L355.9 872.6L356.4 872.2L356.8 871.8L357.2 871.2L357.7 870.6L358.1 869.9L358.6 869.1L359.0 868.2L359.5 867.3L359.9 866.2L360.4 865.1L360.8 863.9L361.3 862.7L361.7 861.4L362.2 860.0L362.6 858.6L363.1 857.2L363.5 855.7L364.0 854.2L364.4 852.7L364.9 851.1L365.3 849.6L365.8 848.0L366.2 846.4L366.6 844.9L367.1 843.3L367.5 841.8L368.0 840.3L368.4 838.8L368.9 837.4L369.3 836.0L369.8 834.6L370.2 833.3L370.7 832.1L371.1 830.9L371.6 829.8L372.0 828.7L372.5 827.8L372.9 826.9L373.4 826.1L373.8 825.4L374.3 824.8L374.7 824.2L375.1 823.8L375.6 823.4L376.0 823.2L376.5 823.0L376.9 823.0L377.4 823.0L377.8 823.2L378.3 823.4L378.7 823.8L379.2 824.2L379.6 824.8L380.1 825.4L380.5 826.1L381.0 826.9L381.4 827.8L381.9 828.7L382.3 829.8L382.8 830.9L383.2 832.1L383.6 833.3L384.1 834.6L384.5 836.0L385.0 837.4L385.4 838.8L385.9 840.3L386.3 841.8L386.8 843.3L387.2 844.9L387.7 846.4L388.1 848.0L388.6 849.6L389.0 851.1L389.5 852.7L389.9 854.2L390.4 855.7L390.8 857.2L391.3 858.6L391.7 860.0L392.2 861.4L392.6 862.7L393.0 863.9L393.5 865.1L393.9 866.2L394.4 867.3L394.8 868.2L395.3 869.1L395.7 869.9L396.2 870.6L396.6 871.2L397.1 871.8L397.5 872.2L398.0 872.6L398.4 872.8L398.9 873.0L399.3 873.0L399.8 873.0L400.2 872.8L400.7 872.6L401.1 872.2L401.6 871.8L402.0 871.2L402.4 870.6L402.9 869.9L403.3 869.1L403.8 868.2L404.2 867.3L404.7 866.2L405.1 865.1L405.6 863.9L406.0 862.7L406.5 861.4L406.9 860.0L407.4 858.6L407.8 857.2L408.3 855.7L408.7 854.2L409.2 852.7L409.6 851.1L410.1 849.6L410.5 848.0L410.9 846.4L411.4 844.9L411.8 843.3L412.3 841.8L412.7 840.3L413.2 838.8L413.6 837.4L414.1 836.0L414.5 834.6L415.0 833.3L415.4 832.1L415.9 830.9L416.3 829.8L416.8 828.7L417.2 827.8L417.7 826.9L418.1 826.1L418.6 825.4L419.0 824.8L419.4 824.2L419.9 823.8L420.3 823.4L420.8 823.2L421.2 823.0L421.7 823.0L422.1 823.0L422.6 823.2L423.0 823.4L423.5 823.8L423.9 824.2L424.4 824.8L424.8 825.4L425.3 826.1L425.7 826.9L426.2 827.8L426.6 828.7L427.1 829.8L427.5 830.9L428.0 832.1L428.4 833.3L428.8 834.6L429.3 836.0L429.7 837.4L430.2 838.8L430.6 840.3L431.1 841.8L431.5 843.3L432.0 844.9L432.4 846.4L432.9 848.0L433.3 849.6L433.8 851.1L434.2 852.7L434.7 854.2L435.1 855.7L435.6 857.2L436.0 858.6L436.5 860.0L436.9 861.4L437.4 862.7L437.8 863.9L438.2 865.1L438.7 866.2L439.1 867.3L439.6 868.2L440.0 869.1L440.5 869.9L440.9 870.6L441.4 871.2L441.8 871.8L442.3 872.2L442.7 872.6L443.2 872.8L443.6 873.0L444.1 873.0L444.5 873.0L445.0 872.8L445.4 872.6L445.9 872.2L446.3 871.8L446.7 871.2L447.2 870.6L447.6 869.9L448.1 869.1L448.5 868.2L449.0 867.3L449.4 866.2L449.9 865.1L450.3 863.9L450.8 862.7L451.2 861.4L451.7 860.0L452.1 858.6L452.6 857.2L453.0 855.7L453.5 854.2L453.9 852.7L454.4 851.1L454.8 849.6L455.2 848.0L455.7 846.4L456.1 844.9L456.6 843.3L457.0 841.8L457.5 840.3L457.9 838.8L458.4 837.4L458.8 836.0L459.3 834.6L459.7 833.3L460.2 832.1L460.6 830.9L461.1 829.8L461.5 828.7L462.0 827.8L462.4 826.9L462.9 826.1L463.3 825.4L463.8 824.8L464.2 824.2L464.6 823.8L465.1 823.4L465.5 823.2L466.0 823.0L466.4 823.0L466.9 823.0L467.3 823.2L467.8 823.4L468.2 823.8L468.7 824.2L469.1 824.8L469.6 825.4L470.0 826.1L470.5 826.9L470.9 827.8L471.4 828.7L471.8 829.8L472.3 830.9L472.7 832.1L473.1 833.3L473.6 834.6L474.0 836.0L474.5 837.4L474.9 838.8L475.4 840.3L475.8 841.8L476.3 843.3L476.7 844.9L477.2 846.4L477.6 848.0L478.1 849.6L478.5 851.1L479.0 852.7L479.4 854.2L479.9 855.7L480.3 857.2L480.8 858.6L481.2 860.0L481.7 861.4L482.1 862.7L482.5 863.9L483.0 865.1L483.4 866.2L483.9 867.3L484.3 868.2L484.8 869.1L485.2 869.9L485.7 870.6L486.1 871.2L486.6 871.8L487.0 872.2L487.5 872.6L487.9 872.8L488.4 873.0L488.8 873.0L489.3 873.0L489.7 872.8L490.2 872.6L490.6 872.2L491.1 871.8L491.5 871.2L491.9 870.6L492.4 869.9L492.8 869.1L493.3 868.2L493.7 867.3L494.2 866.2L494.6 865.1L495.1 863.9L495.5 862.7L496.0 861.4L496.4 860.0L496.9 858.6L497.3 857.2L497.8 855.7L498.2 854.2L498.7 852.7L499.1 851.1L499.6 849.6L500.0 848.0" stroke="#2020b0" fill="none" stroke-width="1.1"/><path d="M321.0 848.0L321.4 843.1L321.9 838.3L322.3 833.6L322.8 829.2L323.2 825.1L323.7 821.3L324.1 817.9L324.6 815.1L325.0 812.7L325.5 810.9L325.9 809.7L326.4 809.1L326.8 809.1L327.3 809.7L327.7 810.9L328.2 812.7L328.6 815.1L329.1 817.9L329.5 821.3L329.9 825.1L330.4 829.2L330.8 833.6L331.3 838.3L331.7 843.1L332.2 848.0L332.6 852.9L333.1 857.7L333.5 862.4L334.0 866.8L334.4 870.9L334.9 874.7L335.3 878.1L335.8 880.9L336.2 883.3L336.7 885.1L337.1 886.3L337.6 886.9L338.0 886.9L338.5 886.3L338.9 885.1L339.3 883.3L339.8 880.9L340.2 878.1L340.7 874.7L341.1 870.9L341.6 866.8L342.0 862.4L342.5 857.7L342.9 852.9L343.4 848.0L343.8 843.1L344.3 838.3L344.7 833.6L345.2 829.2L345.6 825.1L346.1 821.3L346.5 817.9L347.0 815.1L347.4 812.7L347.9 810.9L348.3 809.7L348.7 809.1L349.2 809.1L349.6 809.7L350.1 810.9L350.5 812.7L351.0 815.1L351.4 817.9L351.9 821.3L352.3 825.1L352.8 829.2L353.2 833.6L353.7 838.3L354.1 843.1L354.6 848.0L355.0 852.9L355.5 857.7L355.9 862.4L356.4 866.8L356.8 870.9L357.2 874.7L357.7 878.1L358.1 880.9L358.6 883.3L359.0 885.1L359.5 886.3L359.9 886.9L360.4 886.9L360.8 886.3L361.3 885.1L361.7 883.3L362.2 880.9L362.6 878.1L363.1 874.7L363.5 870.9L364.0 866.8L364.4 862.4L364.9 857.7L365.3 852.9L365.8 848.0L366.2 843.1L366.6 838.3L367.1 833.6L367.5 829.2L368.0 825.1L368.4 821.3L368.9 817.9L369.3 815.1L369.8 812.7L370.2 810.9L370.7 809.7L371.1 809.1L371.6 809.1L372.0 809.7L372.5 810.9L372.9 812.7L373.4 815.1L373.8 817.9L374.3 821.3L374.7 825.1L375.1 829.2L375.6 833.6L376.0 838.3L376.5 843.1L376.9 848.0L377.4 852.9L377.8 857.7L378.3 862.4L378.7 866.8L379.2 870.9L379.6 874.7L380.1 878.1L380.5 880.9L381.0 883.3L381.4 885.1L381.9 886.3L382.3 886.9L382.8 886.9L383.2 886.3L383.6 885.1L384.1 883.3L384.5 880.9L385.0 878.1L385.4 874.7L385.9 870.9L386.3 866.8L386.8 862.4L387.2 857.7L387.7 852.9L388.1 848.0L388.6 843.1L389.0 838.3L389.5 833.6L389.9 829.2L390.4 825.1L390.8 821.3L391.3 817.9L391.7 815.1L392.2 812.7L392.6 810.9L393.0 809.7L393.5 809.1L393.9 809.1L394.4 809.7L394.8 810.9L395.3 812.7L395.7 815.1L396.2 817.9L396.6 821.3L397.1 825.1L397.5 829.2L398.0 833.6L398.4 838.3L398.9 843.1L399.3 848.0L399.8 852.9L400.2 857.7L400.7 862.4L401.1 866.8L401.6 870.9L402.0 874.7L402.4 878.1L402.9 880.9L403.3 883.3L403.8 885.1L404.2 886.3L404.7 886.9L405.1 886.9L405.6 886.3L406.0 885.1L406.5 883.3L406.9 880.9L407.4 878.1L407.8 874.7L408.3 870.9L408.7 866.8L409.2 862.4L409.6 857.7L410.1 852.9L410.5 848.0L410.9 843.1L411.4 838.3L411.8 833.6L412.3 829.2L412.7 825.1L413.2 821.3L413.6 817.9L414.1 815.1L414.5 812.7L415.0 810.9L415.4 809.7L415.9 809.1L416.3 809.1L416.8 809.7L417.2 810.9L417.7 812.7L418.1 815.1L418.6 817.9L419.0 821.3L419.4 825.1L419.9 829.2L420.3 833.6L420.8 838.3L421.2 843.1L421.7 848.0L422.1 852.9L422.6 857.7L423.0 862.4L423.5 866.8L423.9 870.9L424.4 874.7L424.8 878.1L425.3 880.9L425.7 883.3L426.2 885.1L426.6 886.3L427.1 886.9L427.5 886.9L428.0 886.3L428.4 885.1L428.8 883.3L429.3 880.9L429.7 878.1L430.2 874.7L430.6 870.9L431.1 866.8L431.5 862.4L432.0 857.7L432.4 852.9L432.9 848.0L433.3 843.1L433.8 838.3L434.2 833.6L434.7 829.2L435.1 825.1L435.6 821.3L436.0 817.9L436.5 815.1L436.9 812.7L437.4 810.9L437.8 809.7L438.2 809.1L438.7 809.1L439.1 809.7L439.6 810.9L440.0 812.7L440.5 815.1L440.9 817.9L441.4 821.3L441.8 825.1L442.3 829.2L442.7 833.6L443.2 838.3L443.6 843.1L444.1 848.0L444.5 852.9L445.0 857.7L445.4 862.4L445.9 866.8L446.3 870.9L446.7 874.7L447.2 878.1L447.6 880.9L448.1 883.3L448.5 885.1L449.0 886.3L449.4 886.9L449.9 886.9L450.3 886.3L450.8 885.1L451.2 883.3L451.7 880.9L452.1 878.1L452.6 874.7L453.0 870.9L453.5 866.8L453.9 862.4L454.4 857.7L454.8 852.9L455.2 848.0L455.7 843.1L456.1 838.3L456.6 833.6L457.0 829.2L457.5 825.1L457.9 821.3L458.4 817.9L458.8 815.1L459.3 812.7L459.7 810.9L460.2 809.7L460.6 809.1L461.1 809.1L461.5 809.7L462.0 810.9L462.4 812.7L462.9 815.1L463.3 817.9L463.8 821.3L464.2 825.1L464.6 829.2L465.1 833.6L465.5 838.3L466.0 843.1L466.4 848.0L466.9 852.9L467.3 857.7L467.8 862.4L468.2 866.8L468.7 870.9L469.1 874.7L469.6 878.1L470.0 880.9L470.5 883.3L470.9 885.1L471.4 886.3L471.8 886.9L472.3 886.9L472.7 886.3L473.1 885.1L473.6 883.3L474.0 880.9L474.5 878.1L474.9 874.7L475.4 870.9L475.8 866.8L476.3 862.4L476.7 857.7L477.2 852.9L477.6 848.0L478.1 843.1L478.5 838.3L479.0 833.6L479.4 829.2L479.9 825.1L480.3 821.3L480.8 817.9L481.2 815.1L481.7 812.7L482.1 810.9L482.5 809.7L483.0 809.1L483.4 809.1L483.9 809.7L484.3 810.9L484.8 812.7L485.2 815.1L485.7 817.9L486.1 821.3L486.6 825.1L487.0 829.2L487.5 833.6L487.9 838.3L488.4 843.1L488.8 848.0L489.3 852.9L489.7 857.7L490.2 862.4L490.6 866.8L491.1 870.9L491.5 874.7L491.9 878.1L492.4 880.9L492.8 883.3L493.3 885.1L493.7 886.3L494.2 886.9L494.6 886.9L495.1 886.3L495.5 885.1L496.0 883.3L496.4 880.9L496.9 878.1L497.3 874.7L497.8 870.9L498.2 866.8L498.7 862.4L499.1 857.7L499.6 852.9L500.0 848.0" stroke="#2a1aa0" fill="none" stroke-width="1.1"/><path d="M321.0 848.0L321.4 836.3L321.9 825.4L322.3 815.8L322.8 808.3L323.2 803.3L323.7 801.1L324.1 801.8L324.6 805.5L325.0 811.8L325.5 820.4L325.9 830.7L326.4 842.1L326.8 853.9L327.3 865.3L327.7 875.6L328.2 884.2L328.6 890.5L329.1 894.2L329.5 894.9L329.9 892.7L330.4 887.7L330.8 880.2L331.3 870.6L331.7 859.7L332.2 848.0L332.6 836.3L333.1 825.4L333.5 815.8L334.0 808.3L334.4 803.3L334.9 801.1L335.3 801.8L335.8 805.5L336.2 811.8L336.7 820.4L337.1 830.7L337.6 842.1L338.0 853.9L338.5 865.3L338.9 875.6L339.3 884.2L339.8 890.5L340.2 894.2L340.7 894.9L341.1 892.7L341.6 887.7L342.0 880.2L342.5 870.6L342.9 859.7L343.4 848.0L343.8 836.3L344.3 825.4L344.7 815.8L345.2 808.3L345.6 803.3L346.1 801.1L346.5 801.8L347.0 805.5L347.4 811.8L347.9 820.4L348.3 830.7L348.7 842.1L349.2 853.9L349.6 865.3L350.1 875.6L350.5 884.2L351.0 890.5L351.4 894.2L351.9 894.9L352.3 892.7L352.8 887.7L353.2 880.2L353.7 870.6L354.1 859.7L354.6 848.0L355.0 836.3L355.5 825.4L355.9 815.8L356.4 808.3L356.8 803.3L357.2 801.1L357.7 801.8L358.1 805.5L358.6 811.8L359.0 820.4L359.5 830.7L359.9 842.1L360.4 853.9L360.8 865.3L361.3 875.6L361.7 884.2L362.2 890.5L362.6 894.2L363.1 894.9L363.5 892.7L364.0 887.7L364.4 880.2L364.9 870.6L365.3 859.7L365.8 848.0L366.2 836.3L366.6 825.4L367.1 815.8L367.5 808.3L368.0 803.3L368.4 801.1L368.9 801.8L369.3 805.5L369.8 811.8L370.2 820.4L370.7 830.7L371.1 842.1L371.6 853.9L372.0 865.3L372.5 875.6L372.9 884.2L373.4 890.5L373.8 894.2L374.3 894.9L374.7 892.7L375.1 887.7L375.6 880.2L376.0 870.6L376.5 859.7L376.9 848.0L377.4 836.3L377.8 825.4L378.3 815.8L378.7 808.3L379.2 803.3L379.6 801.1L380.1 801.8L380.5 805.5L381.0 811.8L381.4 820.4L381.9 830.7L382.3 842.1L382.8 853.9L383.2 865.3L383.6 875.6L384.1 884.2L384.5 890.5L385.0 894.2L385.4 894.9L385.9 892.7L386.3 887.7L386.8 880.2L387.2 870.6L387.7 859.7L388.1 848.0L388.6 836.3L389.0 825.4L389.5 815.8L389.9 808.3L390.4 803.3L390.8 801.1L391.3 801.8L391.7 805.5L392.2 811.8L392.6 820.4L393.0 830.7L393.5 842.1L393.9 853.9L394.4 865.3L394.8 875.6L395.3 884.2L395.7 890.5L396.2 894.2L396.6 894.9L397.1 892.7L397.5 887.7L398.0 880.2L398.4 870.6L398.9 859.7L399.3 848.0L399.8 836.3L400.2 825.4L400.7 815.8L401.1 808.3L401.6 803.3L402.0 801.1L402.4 801.8L402.9 805.5L403.3 811.8L403.8 820.4L404.2 830.7L404.7 842.1L405.1 853.9L405.6 865.3L406.0 875.6L406.5 884.2L406.9 890.5L407.4 894.2L407.8 894.9L408.3 892.7L408.7 887.7L409.2 880.2L409.6 870.6L410.1 859.7L410.5 848.0L410.9 836.3L411.4 825.4L411.8 815.8L412.3 808.3L412.7 803.3L413.2 801.1L413.6 801.8L414.1 805.5L414.5 811.8L415.0 820.4L415.4 830.7L415.9 842.1L416.3 853.9L416.8 865.3L417.2 875.6L417.7 884.2L418.1 890.5L418.6 894.2L419.0 894.9L419.4 892.7L419.9 887.7L420.3 880.2L420.8 870.6L421.2 859.7L421.7 848.0L422.1 836.3L422.6 825.4L423.0 815.8L423.5 808.3L423.9 803.3L424.4 801.1L424.8 801.8L425.3 805.5L425.7 811.8L426.2 820.4L426.6 830.7L427.1 842.1L427.5 853.9L428.0 865.3L428.4 875.6L428.8 884.2L429.3 890.5L429.7 894.2L430.2 894.9L430.6 892.7L431.1 887.7L431.5 880.2L432.0 870.6L432.4 859.7L432.9 848.0L433.3 836.3L433.8 825.4L434.2 815.8L434.7 808.3L435.1 803.3L435.6 801.1L436.0 801.8L436.5 805.5L436.9 811.8L437.4 820.4L437.8 830.7L438.2 842.1L438.7 853.9L439.1 865.3L439.6 875.6L440.0 884.2L440.5 890.5L440.9 894.2L441.4 894.9L441.8 892.7L442.3 887.7L442.7 880.2L443.2 870.6L443.6 859.7L444.1 848.0L444.5 836.3L445.0 825.4L445.4 815.8L445.9 808.3L446.3 803.3L446.7 801.1L447.2 801.8L447.6 805.5L448.1 811.8L448.5 820.4L449.0 830.7L449.4 842.1L449.9 853.9L450.3 865.3L450.8 875.6L451.2 884.2L451.7 890.5L452.1 894.2L452.6 894.9L453.0 892.7L453.5 887.7L453.9 880.2L454.4 870.6L454.8 859.7L455.2 848.0L455.7 836.3L456.1 825.4L456.6 815.8L457.0 808.3L457.5 803.3L457.9 801.1L458.4 801.8L458.8 805.5L459.3 811.8L459.7 820.4L460.2 830.7L460.6 842.1L461.1 853.9L461.5 865.3L462.0 875.6L462.4 884.2L462.9 890.5L463.3 894.2L463.8 894.9L464.2 892.7L464.6 887.7L465.1 880.2L465.5 870.6L466.0 859.7L466.4 848.0L466.9 836.3L467.3 825.4L467.8 815.8L468.2 808.3L468.7 803.3L469.1 801.1L469.6 801.8L470.0 805.5L470.5 811.8L470.9 820.4L471.4 830.7L471.8 842.1L472.3 853.9L472.7 865.3L473.1 875.6L473.6 884.2L474.0 890.5L474.5 894.2L474.9 894.9L475.4 892.7L475.8 887.7L476.3 880.2L476.7 870.6L477.2 859.7L477.6 848.0L478.1 836.3L478.5 825.4L479.0 815.8L479.4 808.3L479.9 803.3L480.3 801.1L480.8 801.8L481.2 805.5L481.7 811.8L482.1 820.4L482.5 830.7L483.0 842.1L483.4 853.9L483.9 865.3L484.3 875.6L484.8 884.2L485.2 890.5L485.7 894.2L486.1 894.9L486.6 892.7L487.0 887.7L487.5 880.2L487.9 870.6L488.4 859.7L488.8 848.0L489.3 836.3L489.7 825.4L490.2 815.8L490.6 808.3L491.1 803.3L491.5 801.1L491.9 801.8L492.4 805.5L492.8 811.8L493.3 820.4L493.7 830.7L494.2 842.1L494.6 853.9L495.1 865.3L495.5 875.6L496.0 884.2L496.4 890.5L496.9 894.2L497.3 894.9L497.8 892.7L498.2 887.7L498.7 880.2L499.1 870.6L499.6 859.7L500.0 848.0" stroke="#c83030" fill="none" stroke-width="1.1"/><path d="M500 848L501 795L501 803.1L502 810.0L503 815.9L504 820.8L505 825.0L506 828.5L507 831.5L508 834.0L509 836.2L510 838.0L511 839.5L512 840.8L513 841.9L514 842.9L515 843.6L516 844.3L517 844.9L518 845.4L519 845.8L520 846.1L521 846.4L522 846.6L523 846.9L524 847.0L525 847.2L526 847.3L527 847.4L528 847.5L529 847.6L530 847.6L531 847.7L532 847.7L533 847.8L534 847.8L535 847.8L536 847.9L537 847.9L538 847.9L539 847.9L587 848L588 881L589 875.9L590 871.6L591 868.0L592 864.9L593 862.3L594 860.1L595 858.3L596 856.7L597 855.4L598 854.2L599 853.3L600 852.5L601 851.8L602 851.2L603 850.7L604 850.3L605 849.9L606 849.6L607 849.4L608 849.2L609 849.0L610 848.8L611 848.7L612 848.6L613 848.5L614 848.4L615 848.4L616 848.3L617 848.3L669 848" stroke="#2020b0" fill="none" stroke-width="2.2"/><path d="M588 848L589 880" stroke="#c03030" stroke-width="1.5"/></svg>
<div class="t" style="left:291.6px;top:787.0px;font-size:12px;line-height:12px;color:#1a1a9a;">5.60</div>
<div class="t" style="left:287.6px;top:841.9px;font-size:12px;line-height:12px;color:#1a1a9a;">-0.10</div>
<div class="t" style="left:287.6px;top:896.3px;font-size:12px;line-height:12px;color:#1a1a9a;">-5.79</div>
<div class="t" style="left:264px;top:795px;font-size:12px;line-height:12px;color:#1a1a9a;transform:rotate(-90deg);transform-origin:18px 6px;width:36px">I (nA)</div>
<div class="t" style="left:320.2px;top:907.8px;font-size:12px;line-height:12px;color:#1a1a9a;">0</div>
<div class="t" style="left:380.7px;top:907.8px;font-size:12px;line-height:12px;color:#1a1a9a;">409</div>
<div class="t" style="left:450.2px;top:907.8px;font-size:12px;line-height:12px;color:#1a1a9a;">819</div>
<div class="t" style="left:517.4px;top:907.8px;font-size:12px;line-height:12px;color:#1a1a9a;">1228</div>
<div class="t" style="left:586.9px;top:907.8px;font-size:12px;line-height:12px;color:#1a1a9a;">1638</div>
<div class="t" style="left:643.3px;top:907.8px;font-size:12px;line-height:12px;color:#1a1a9a;">2047</div>
<div class="t" style="left:651.7px;top:924.8px;font-size:12px;line-height:12px;color:#1a1a9a;">Pts</div>
<div class="a" style="left:232px;top:959px;width:8px;height:9px;background:#1010c0"></div>
<div class="t" style="left:312.0px;top:957.8px;font-size:12px;line-height:12px;font-weight:bold;">X,Y:</div>
<div class="t" style="left:344.0px;top:957.8px;font-size:12px;line-height:12px;font-weight:bold;color:#1a1ac0;transform:scaleX(1.058);transform-origin:0 0;">1239.897, -8.922</div>
<div class="a" style="left:496px;top:954px;width:67px;height:20px;background:#fdfde8;border-top:1px solid #808080;border-left:1px solid #808080;border-bottom:1px solid #fff;border-right:1px solid #fff;"></div>
<div class="t" style="left:499.0px;top:958.2px;font-size:12px;line-height:12px;">I vs t</div>
<div class="a" style="left:545px;top:955px;width:17px;height:18px;background:#d4d4d4;border-top:1px solid #fff;border-left:1px solid #fff;border-bottom:1px solid #6a6a6a;border-right:1px solid #6a6a6a;"></div>
<svg class="a" style="left:549px;top:961.5px" width="9" height="5"><path d="M0 0H9L4.5 5Z" fill="#000"/></svg>
<div class="t" style="left:569.0px;top:957.8px;font-size:12px;line-height:12px;transform:scaleX(0.868);transform-origin:0 0;">Part:</div>
<div class="a" style="left:593px;top:954px;width:34px;height:20px;background:#fdfde8;border-top:1px solid #808080;border-left:1px solid #808080;border-bottom:1px solid #fff;border-right:1px solid #fff;"></div>
<div class="t" style="left:596.0px;top:958.2px;font-size:12px;line-height:12px;">All</div>
<div class="a" style="left:609px;top:955px;width:17px;height:18px;background:#d4d4d4;border-top:1px solid #fff;border-left:1px solid #fff;border-bottom:1px solid #6a6a6a;border-right:1px solid #6a6a6a;"></div>
<svg class="a" style="left:613px;top:961.5px" width="9" height="5"><path d="M0 0H9L4.5 5Z" fill="#000"/></svg>
<div class="a" style="left:633px;top:952px;width:22px;height:23px;background:#d4d4d4;border-top:1px solid #fff;border-left:1px solid #fff;border-bottom:1px solid #6a6a6a;border-right:1px solid #6a6a6a;"></div>
<svg class="a" style="left:636px;top:955px" width="16" height="17" viewBox="0 0 16 17"><path d="M1 2H9" stroke="#1a1ac0" stroke-width="2.5"/><path d="M2 8Q2 14 8 14M14 3Q14 9 9 9" stroke="#e02020" stroke-width="2" fill="none"/><path d="M10 15H15" stroke="#1a1ac0" stroke-width="2.5" stroke-dasharray="2 1"/></svg>
<div class="a" style="left:717px;top:918px;width:70px;height:30px;border:1px solid #8e8e8e;box-shadow:inset 1px 1px 0 #f6f6f6,1px 1px 0 #f6f6f6;"></div>
<div class="a" style="left:721px;top:912px;width:62px;height:13px;background:#c2c2c2"></div>
<div class="t" style="left:724.0px;top:914.8px;font-size:12px;line-height:12px;font-weight:bold;transform:scaleX(0.971);transform-origin:0 0;">Fix Scales</div>
<div class="t" style="left:727.0px;top:931.7px;font-size:11px;line-height:11px;">y</div>
<div class="a" style="left:736px;top:932px;width:11px;height:11px;background:#fdfde8;border-top:1px solid #808080;border-left:1px solid #808080;border-bottom:1px solid #fff;border-right:1px solid #fff;"></div>
<div class="t" style="left:754.0px;top:931.7px;font-size:11px;line-height:11px;">x</div>
<div class="a" style="left:763px;top:932px;width:11px;height:11px;background:#fdfde8;border-top:1px solid #808080;border-left:1px solid #808080;border-bottom:1px solid #fff;border-right:1px solid #fff;"></div>
<div class="a" style="left:830px;top:739px;width:665px;height:456px;background:#66b0f0;border:1px solid #4a90d0"></div>
<svg class="a" style="left:839px;top:748px" width="17" height="13" viewBox="0 0 17 13"><rect x="1" y="4" width="11" height="8" fill="#ccc" stroke="#222"/><path d="M12 6L16 3V12L12 9" fill="#aaa" stroke="#222"/><circle cx="4" cy="3" r="2" fill="#ddd" stroke="#222"/><circle cx="9" cy="3" r="2" fill="#ddd" stroke="#222"/></svg>
<div class="t" style="left:1009.0px;top:747.3px;font-size:15px;line-height:15px;color:#222;transform:scaleX(0.964);transform-origin:0 0;">Look32x! (v. 25. 5) [w/ Lenovo EasyCamera (0)]</div>
<div class="a" style="left:1399px;top:752px;width:11px;height:2px;background:#222"></div>
<div class="a" style="left:1425px;top:746px;width:12px;height:8px;border:1.4px solid #222;border-top-width:2px"></div>
<div class="a" style="left:1444px;top:740px;width:45px;height:19px;background:#c74b40"></div>
<svg class="a" style="left:1461px;top:745px" width="11" height="9" viewBox="0 0 11 9"><path d="M1 0L10 9M10 0L1 9" stroke="#fff" stroke-width="1.6"/></svg>
<div class="a" style="left:837px;top:770px;width:649px;height:20px;background:#f4f5f7"></div>
<div class="t" style="left:845.0px;top:773.8px;font-size:12px;line-height:12px;color:#111;transform:scaleX(0.950);transform-origin:0 0;">Exit</div>
<div class="t" style="left:876.0px;top:773.8px;font-size:12px;line-height:12px;color:#111;transform:scaleX(0.960);transform-origin:0 0;">Preview</div>
<div class="t" style="left:931.0px;top:773.8px;font-size:12px;line-height:12px;color:#111;transform:scaleX(0.984);transform-origin:0 0;">Capture</div>
<div class="t" style="left:987.0px;top:773.8px;font-size:12px;line-height:12px;color:#111;transform:scaleX(0.937);transform-origin:0 0;">Devices</div>
<div class="t" style="left:1041.0px;top:773.8px;font-size:12px;line-height:12px;color:#111;transform:scaleX(1.015);transform-origin:0 0;">Options</div>
<div class="t" style="left:1097.0px;top:773.8px;font-size:12px;line-height:12px;color:#111;transform:scaleX(0.970);transform-origin:0 0;">Player</div>
<div class="t" style="left:1143.0px;top:773.8px;font-size:12px;line-height:12px;color:#111;transform:scaleX(1.048);transform-origin:0 0;">Aligning off</div>
<div class="a" style="left:837px;top:1153px;width:649px;height:37px;background:#d8d8d8;border-top:1px solid #fff"></div>
<div class="a" style="left:839px;top:1168px;width:19px;height:19px;background:#e0e0e0;border-top:1px solid #fff;border-left:1px solid #fff;border-bottom:1px solid #6a6a6a;border-right:1px solid #6a6a6a;"></div>
<svg class="a" style="left:842px;top:1171px" width="13" height="13" viewBox="0 0 13 13"><ellipse cx="6" cy="7" rx="5" ry="4" fill="#ddd" stroke="#111" stroke-width="1.3"/><ellipse cx="8" cy="5" rx="3" ry="2" fill="#fff" stroke="#111"/></svg>
<div class="a" style="left:863px;top:1171px;width:13px;height:13px;background:#fdfde8;border-top:1px solid #808080;border-left:1px solid #808080;border-bottom:1px solid #fff;border-right:1px solid #fff;"></div>
<svg class="a" style="left:863px;top:1171px" width="13" height="13"><path d="M2.5 6L5 9L10 3" stroke="#000" stroke-width="2" fill="none"/></svg>
<div class="t" style="left:1044.0px;top:1170.8px;font-size:12px;line-height:12px;color:#111;transform:scaleX(0.871);transform-origin:0 0;">30 FPS   X:  1084  Y:  3    GrayVal: 254   [ 2752692]</div>
<svg class="a" style="left:837px;top:790px;overflow:hidden" width="649" height="363" viewBox="837 790 649 363"><rect x="837" y="790" width="649" height="363" fill="#e8e4dc"/><rect x="958" y="790" width="317" height="236" fill="#efebe4"/><rect x="837" y="790" width="83" height="99" fill="#bcbcba"/><rect x="855" y="800" width="60" height="85" fill="#cfcfcd"/><rect x="837" y="810" width="15" height="70" fill="#8e8e8c"/><rect x="873" y="850" width="17" height="18" fill="#e4e4e4"/><rect x="916" y="790" width="42" height="139" fill="#c8984a"/><rect x="918" y="792" width="12" height="137" fill="#b48838"/><rect x="837" y="889" width="93" height="8" fill="#5a4838"/><rect x="837" y="897" width="62" height="88" fill="#5e5c5a"/><rect x="843" y="900" width="17" height="85" fill="#c8ccd0"/><rect x="862" y="905" width="23" height="70" fill="#4a7ab0"/><rect x="886" y="905" width="13" height="55" fill="#d8d8d0"/><rect x="837" y="985" width="55" height="80" fill="#3e3028"/><rect x="837" y="1052" width="33" height="21" fill="#c04838"/><rect x="837" y="1077" width="51" height="43" fill="#dcdcdc"/><rect x="837" y="1120" width="35" height="33" fill="#4a4038"/><path d="M941 845L1070 838L1075 925L945 925 Z" fill="#3e3e3e"/><path d="M1066 826L1150 822L1157 917L1070 922 Z" fill="#2e2e2e"/><path d="M934 815L975 809L1030 842L990 850 Z" fill="#1c1c1c"/><rect x="958" y="891" width="108" height="26" fill="#262626"/><rect x="1000" y="872" width="10" height="8" fill="#d8d8d8"/><rect x="1036" y="882" width="10" height="8" fill="#e0e0e0"/><rect x="955" y="860" width="11" height="35" fill="#2a3040"/><rect x="941" y="921" width="106" height="19" fill="#e4e4e4"/><rect x="935" y="940" width="115" height="8" fill="#303030"/><path d="M1039 912L1090 902L1150 903L1203 918L1200 948L1120 952L1042 950 Z" fill="#e6e6ea"/><rect x="1060" y="918" width="130" height="24" fill="#d2d2da"/><rect x="899" y="934" width="190" height="66" fill="#aaaaaa"/><rect x="899" y="1000" width="190" height="65" fill="#cacaca"/><rect x="899" y="1030" width="190" height="6" fill="#6a6a6a"/><rect x="1085" y="934" width="125" height="84" fill="#4a7cbc"/><path d="M1075 952L1105 948L1105 1030L1075 1030 Z" fill="#b8bcc4"/><path d="M1085 1018L1210 988L1210 1084L1085 1084 Z" fill="#d4d8dc"/><rect x="1092" y="1030" width="16" height="60" fill="#a4aab2"/><rect x="1210" y="950" width="40" height="76" fill="#ece8e0"/><rect x="1248" y="976" width="238" height="177" fill="#c4803e"/><rect x="1248" y="976" width="61" height="177" fill="#cc8a4a"/><path d="M1300 993L1486 993L1486 1102L1420 1105L1350 1085L1318 1040 Z" fill="#161618"/><path d="M1313 1026L1375 1038L1389 1086L1345 1082L1320 1055 Z" fill="#d8e0e8"/><rect x="1231" y="891" width="255" height="57" fill="#28282a"/><rect x="1240" y="905" width="246" height="5" fill="#5a5a62"/><rect x="1240" y="925" width="246" height="4" fill="#3e3e44"/><path d="M1224 948L1486 952L1486 998L1224 990 Z" fill="#3a3030"/><rect x="1275" y="790" width="102" height="101" fill="#8e8c92"/><rect x="1377" y="790" width="84" height="32" fill="#4a3028"/><rect x="1383" y="790" width="65" height="25" fill="#dccfb6"/><rect x="1461" y="790" width="25" height="42" fill="#e8e4dc"/><rect x="1372" y="832" width="114" height="68" fill="#d8d0c0"/><rect x="1372" y="849" width="38" height="42" fill="#3a2a24"/><rect x="891" y="1065" width="190" height="75" fill="#9a6434"/><rect x="899" y="1065" width="161" height="15" fill="#6a5444"/><path d="M1081 1060L1190 1048L1271 1075L1271 1153L1081 1153 Z" fill="#d8d8dc"/><path d="M1088 1065L1190 1052L1265 1078L1160 1105 Z" fill="#ececee"/><rect x="1081" y="1112" width="190" height="41" fill="#6a6a70"/><rect x="1229" y="1119" width="42" height="34" fill="#4a98d0"/><path d="M870 1153L878 1136L1085 1136L1085 1153 Z" fill="#f2f2f2"/><circle cx="908" cy="950" r="3.2" fill="#3a3a3a"/><circle cx="908" cy="950" r="1.4" fill="#c8c8c8"/><circle cx="920" cy="950" r="3.2" fill="#3a3a3a"/><circle cx="920" cy="950" r="1.4" fill="#c8c8c8"/><circle cx="932" cy="950" r="3.2" fill="#3a3a3a"/><circle cx="932" cy="950" r="1.4" fill="#c8c8c8"/><circle cx="944" cy="950" r="3.2" fill="#3a3a3a"/><circle cx="944" cy="950" r="1.4" fill="#c8c8c8"/><circle cx="956" cy="950" r="3.2" fill="#3a3a3a"/><circle cx="956" cy="950" r="1.4" fill="#c8c8c8"/><circle cx="968" cy="950" r="3.2" fill="#3a3a3a"/><circle cx="968" cy="950" r="1.4" fill="#c8c8c8"/><circle cx="980" cy="950" r="3.2" fill="#3a3a3a"/><circle cx="980" cy="950" r="1.4" fill="#c8c8c8"/><circle cx="992" cy="950" r="3.2" fill="#3a3a3a"/><circle cx="992" cy="950" r="1.4" fill="#c8c8c8"/><circle cx="1004" cy="950" r="3.2" fill="#3a3a3a"/><circle cx="1004" cy="950" r="1.4" fill="#c8c8c8"/><circle cx="1016" cy="950" r="3.2" fill="#3a3a3a"/><circle cx="1016" cy="950" r="1.4" fill="#c8c8c8"/><circle cx="1028" cy="950" r="3.2" fill="#3a3a3a"/><circle cx="1028" cy="950" r="1.4" fill="#c8c8c8"/><circle cx="1040" cy="950" r="3.2" fill="#3a3a3a"/><circle cx="1040" cy="950" r="1.4" fill="#c8c8c8"/><circle cx="1052" cy="950" r="3.2" fill="#3a3a3a"/><circle cx="1052" cy="950" r="1.4" fill="#c8c8c8"/><circle cx="1064" cy="950" r="3.2" fill="#3a3a3a"/><circle cx="1064" cy="950" r="1.4" fill="#c8c8c8"/><circle cx="1076" cy="950" r="3.2" fill="#3a3a3a"/><circle cx="1076" cy="950" r="1.4" fill="#c8c8c8"/><circle cx="908" cy="972" r="3.2" fill="#3a3a3a"/><circle cx="908" cy="972" r="1.4" fill="#c8c8c8"/><circle cx="920" cy="972" r="3.2" fill="#3a3a3a"/><circle cx="920" cy="972" r="1.4" fill="#c8c8c8"/><circle cx="932" cy="972" r="3.2" fill="#3a3a3a"/><circle cx="932" cy="972" r="1.4" fill="#c8c8c8"/><circle cx="944" cy="972" r="3.2" fill="#3a3a3a"/><circle cx="944" cy="972" r="1.4" fill="#c8c8c8"/><circle cx="956" cy="972" r="3.2" fill="#3a3a3a"/><circle cx="956" cy="972" r="1.4" fill="#c8c8c8"/><circle cx="968" cy="972" r="3.2" fill="#3a3a3a"/><circle cx="968" cy="972" r="1.4" fill="#c8c8c8"/><circle cx="980" cy="972" r="3.2" fill="#3a3a3a"/><circle cx="980" cy="972" r="1.4" fill="#c8c8c8"/><circle cx="992" cy="972" r="3.2" fill="#3a3a3a"/><circle cx="992" cy="972" r="1.4" fill="#c8c8c8"/><circle cx="1004" cy="972" r="3.2" fill="#3a3a3a"/><circle cx="1004" cy="972" r="1.4" fill="#c8c8c8"/><circle cx="1016" cy="972" r="3.2" fill="#3a3a3a"/><circle cx="1016" cy="972" r="1.4" fill="#c8c8c8"/><circle cx="1028" cy="972" r="3.2" fill="#3a3a3a"/><circle cx="1028" cy="972" r="1.4" fill="#c8c8c8"/><circle cx="1040" cy="972" r="3.2" fill="#3a3a3a"/><circle cx="1040" cy="972" r="1.4" fill="#c8c8c8"/><circle cx="1052" cy="972" r="3.2" fill="#3a3a3a"/><circle cx="1052" cy="972" r="1.4" fill="#c8c8c8"/><circle cx="1064" cy="972" r="3.2" fill="#3a3a3a"/><circle cx="1064" cy="972" r="1.4" fill="#c8c8c8"/><circle cx="1076" cy="972" r="3.2" fill="#3a3a3a"/><circle cx="1076" cy="972" r="1.4" fill="#c8c8c8"/><circle cx="908" cy="994" r="3.2" fill="#3a3a3a"/><circle cx="908" cy="994" r="1.4" fill="#c8c8c8"/><circle cx="920" cy="994" r="3.2" fill="#3a3a3a"/><circle cx="920" cy="994" r="1.4" fill="#c8c8c8"/><circle cx="932" cy="994" r="3.2" fill="#3a3a3a"/><circle cx="932" cy="994" r="1.4" fill="#c8c8c8"/><circle cx="944" cy="994" r="3.2" fill="#3a3a3a"/><circle cx="944" cy="994" r="1.4" fill="#c8c8c8"/><circle cx="956" cy="994" r="3.2" fill="#3a3a3a"/><circle cx="956" cy="994" r="1.4" fill="#c8c8c8"/><circle cx="968" cy="994" r="3.2" fill="#3a3a3a"/><circle cx="968" cy="994" r="1.4" fill="#c8c8c8"/><circle cx="980" cy="994" r="3.2" fill="#3a3a3a"/><circle cx="980" cy="994" r="1.4" fill="#c8c8c8"/><circle cx="992" cy="994" r="3.2" fill="#3a3a3a"/><circle cx="992" cy="994" r="1.4" fill="#c8c8c8"/><circle cx="1004" cy="994" r="3.2" fill="#3a3a3a"/><circle cx="1004" cy="994" r="1.4" fill="#c8c8c8"/><circle cx="1016" cy="994" r="3.2" fill="#3a3a3a"/><circle cx="1016" cy="994" r="1.4" fill="#c8c8c8"/><circle cx="1028" cy="994" r="3.2" fill="#3a3a3a"/><circle cx="1028" cy="994" r="1.4" fill="#c8c8c8"/><circle cx="1040" cy="994" r="3.2" fill="#3a3a3a"/><circle cx="1040" cy="994" r="1.4" fill="#c8c8c8"/><circle cx="1052" cy="994" r="3.2" fill="#3a3a3a"/><circle cx="1052" cy="994" r="1.4" fill="#c8c8c8"/><circle cx="1064" cy="994" r="3.2" fill="#3a3a3a"/><circle cx="1064" cy="994" r="1.4" fill="#c8c8c8"/><circle cx="1076" cy="994" r="3.2" fill="#3a3a3a"/><circle cx="1076" cy="994" r="1.4" fill="#c8c8c8"/><ellipse cx="1326" cy="846" rx="40" ry="42" fill="none" stroke="#c8c8cc" stroke-width="3"/><rect x="1292" y="811" width="59" height="74" fill="#eeeef0"/><path d="M1298 830H1342M1298 845H1338M1298 860H1345M1298 872H1333" stroke="#888" stroke-width="2"/><circle cx="1420" cy="850" r="4" fill="#f0ece0" stroke="#888"/><circle cx="1440" cy="845" r="4" fill="#f0ece0" stroke="#888"/><circle cx="1460" cy="850" r="4" fill="#f0ece0" stroke="#888"/><circle cx="1475" cy="862" r="4" fill="#f0ece0" stroke="#888"/><circle cx="1425" cy="875" r="4" fill="#f0ece0" stroke="#888"/><circle cx="1450" cy="880" r="4" fill="#f0ece0" stroke="#888"/><circle cx="1470" cy="882" r="4" fill="#f0ece0" stroke="#888"/><path d="M905 1151Q900 1000 990 965" stroke="#222" stroke-width="3" fill="none" stroke-linecap="round"/><path d="M975 1151Q950 1060 1010 980" stroke="#2a2a2a" stroke-width="3" fill="none" stroke-linecap="round"/><path d="M1060 1100Q1000 1010 1080 955" stroke="#222" stroke-width="3" fill="none" stroke-linecap="round"/><path d="M1150 1151Q1250 1030 1486 955" stroke="#1e1e1e" stroke-width="3.5" fill="none" stroke-linecap="round"/><path d="M1180 1040Q1300 900 1480 890" stroke="#2a2a2a" stroke-width="2.5" fill="none" stroke-linecap="round"/><path d="M1260 1151Q1340 1040 1486 970" stroke="#333" stroke-width="2.5" fill="none" stroke-linecap="round"/><path d="M1205 915Q1220 980 1230 1060" stroke="#2a2a2a" stroke-width="2" fill="none" stroke-linecap="round"/><path d="M1100 1130Q1150 1100 1180 1060" stroke="#eee" stroke-width="2" fill="none" stroke-linecap="round"/><path d="M970 985Q990 1050 1020 1080" stroke="#e8e8e8" stroke-width="2" fill="none" stroke-linecap="round"/><path d="M985 1055L1015 1045" stroke="#e8d030" stroke-width="5" fill="none" stroke-linecap="round"/><path d="M1025 980L1045 972" stroke="#d03030" stroke-width="5" fill="none" stroke-linecap="round"/><path d="M975 968L1000 962" stroke="#e8d030" stroke-width="5" fill="none" stroke-linecap="round"/><path d="M1440 1000L1460 1040L1420 1060" stroke="#e03060" stroke-width="2" fill="none" stroke-linecap="round"/><path d="M850 1000Q880 1080 960 1130" stroke="#2a2a2a" stroke-width="2.5" fill="none" stroke-linecap="round"/><text x="1250" y="980" font-family="Liberation Sans" font-weight="bold" font-size="15" fill="#ddd" textLength="230" lengthAdjust="spacingAndGlyphs">COLUMBIAN  SEVENTY-THREE</text></svg>
<div class="t" style="left:839.0px;top:792.2px;font-size:34px;line-height:34px;color:#e81010;transform:scaleX(1.020);transform-origin:0 0;">1/19/2015 11:43:42 AM</div>
<div class="a" style="left:405px;top:1003px;width:355px;height:292px;background:#9ccbf0;border:1px solid #7ab0e0"></div>
<div class="a" style="left:408px;top:1004px;width:348px;height:30px;background:#ffffff"></div>
<div class="a" style="left:408px;top:1034px;width:348px;height:261px;background:#c8c8c8"></div>
<svg class="a" style="left:416px;top:1009px" width="18" height="17" viewBox="0 0 18 17"><path d="M1 5H17M1 12H17" stroke="#1a1ab0" stroke-width="2.5"/><path d="M5 2L13 16" stroke="#d8d020" stroke-width="4"/><path d="M3 14L14 2" stroke="#1a1ab0" stroke-width="1.5"/></svg>
<div class="t" style="left:437.0px;top:1013.0px;font-size:13px;line-height:13px;color:#7c7c7c;transform:scaleX(0.894);transform-origin:0 0;">jClamp MultiClamp 700B :  ( 008...</div>
<div class="a" style="left:637px;top:1018px;width:10px;height:1px;background:#555"></div>
<div class="a" style="left:683px;top:1014px;width:9px;height:9px;border:1px solid #ddd"></div>
<svg class="a" style="left:728px;top:1013px" width="10" height="11" viewBox="0 0 10 11"><path d="M0 0L10 11M10 0L0 11" stroke="#555" stroke-width="1.2"/></svg>
<div class="a" style="left:417px;top:1042px;width:19px;height:19px;background:#cfcfcf;border-top:1px solid #fff;border-left:1px solid #fff;border-bottom:1px solid #6a6a6a;border-right:1px solid #6a6a6a;"></div>
<div class="a" style="left:438px;top:1042px;width:19px;height:19px;background:#cfcfcf;border-top:1px solid #fff;border-left:1px solid #fff;border-bottom:1px solid #6a6a6a;border-right:1px solid #6a6a6a;"></div>
<div class="a" style="left:470px;top:1042px;width:19px;height:19px;background:#cfcfcf;border-top:1px solid #fff;border-left:1px solid #fff;border-bottom:1px solid #6a6a6a;border-right:1px solid #6a6a6a;"></div>
<div class="a" style="left:491px;top:1042px;width:20px;height:19px;background:#cfcfcf;border-top:1px solid #fff;border-left:1px solid #fff;border-bottom:1px solid #6a6a6a;border-right:1px solid #6a6a6a;"></div>
<div class="a" style="left:522px;top:1042px;width:19px;height:19px;background:#cfcfcf;border-top:1px solid #fff;border-left:1px solid #fff;border-bottom:1px solid #6a6a6a;border-right:1px solid #6a6a6a;"></div>
<div class="a" style="left:543px;top:1042px;width:20px;height:19px;background:#cfcfcf;border-top:1px solid #fff;border-left:1px solid #fff;border-bottom:1px solid #6a6a6a;border-right:1px solid #6a6a6a;"></div>
<div class="a" style="left:575px;top:1042px;width:19px;height:19px;background:#cfcfcf;border-top:1px solid #fff;border-left:1px solid #fff;border-bottom:1px solid #6a6a6a;border-right:1px solid #6a6a6a;"></div>
<div class="a" style="left:606px;top:1042px;width:20px;height:19px;background:#cfcfcf;border-top:1px solid #fff;border-left:1px solid #fff;border-bottom:1px solid #6a6a6a;border-right:1px solid #6a6a6a;"></div>
<div class="a" style="left:627px;top:1042px;width:20px;height:19px;background:#cfcfcf;border-top:1px solid #fff;border-left:1px solid #fff;border-bottom:1px solid #6a6a6a;border-right:1px solid #6a6a6a;"></div>
<div class="a" style="left:660px;top:1042px;width:19px;height:19px;background:#cfcfcf;border-top:1px solid #fff;border-left:1px solid #fff;border-bottom:1px solid #6a6a6a;border-right:1px solid #6a6a6a;"></div>
<div class="a" style="left:681px;top:1042px;width:19px;height:19px;background:#cfcfcf;border-top:1px solid #fff;border-left:1px solid #fff;border-bottom:1px solid #6a6a6a;border-right:1px solid #6a6a6a;"></div>
<div class="a" style="left:702px;top:1042px;width:19px;height:19px;background:#cfcfcf;border-top:1px solid #fff;border-left:1px solid #fff;border-bottom:1px solid #6a6a6a;border-right:1px solid #6a6a6a;"></div>
<div class="a" style="left:734px;top:1042px;width:19px;height:19px;background:#cfcfcf;border-top:1px solid #fff;border-left:1px solid #fff;border-bottom:1px solid #6a6a6a;border-right:1px solid #6a6a6a;"></div>
<svg class="a" style="left:418px;top:1043px" width="18" height="18" viewBox="0 0 18 18"><path d="M3 3H15M9 6V16M5 9L9 5L13 9" stroke="#111" stroke-width="1.6" fill="none"/><rect x="2" y="2" width="14" height="3" fill="#1a1ab0"/></svg>
<svg class="a" style="left:439px;top:1043px" width="18" height="18" viewBox="0 0 18 18"><ellipse cx="9" cy="10" rx="7" ry="5" fill="#ddd" stroke="#111" stroke-width="1.4"/><ellipse cx="11" cy="7" rx="4" ry="3" fill="#fff" stroke="#111"/></svg>
<svg class="a" style="left:471px;top:1043px" width="18" height="18" viewBox="0 0 18 18"><path d="M2 6H7L8 8H15V15H2Z" fill="#e8d870" stroke="#111"/><path d="M4 15L6 10H17L15 15Z" fill="#f0e080" stroke="#111"/></svg>
<svg class="a" style="left:492px;top:1043px" width="18" height="18" viewBox="0 0 18 18"><rect x="2" y="2" width="14" height="14" fill="#1a1ab0"/><rect x="5" y="2" width="8" height="5" fill="#fff"/><rect x="5" y="10" width="8" height="6" fill="#111"/></svg>
<svg class="a" style="left:523px;top:1043px" width="18" height="18" viewBox="0 0 18 18"><path d="M14 9A5 5 0 1 1 9 4H12M10 1L13 4L10 7" stroke="#111" stroke-width="1.8" fill="none"/></svg>
<svg class="a" style="left:544px;top:1043px" width="18" height="18" viewBox="0 0 18 18"><rect x="2" y="3" width="12" height="9" fill="#fff" stroke="#111" stroke-width="1.3"/><path d="M4 6H12" stroke="#1a1ab0" stroke-width="2"/><path d="M9 8L15 16L12 16L11 18Z" fill="#e8d020" stroke="#111"/></svg>
<svg class="a" style="left:576px;top:1043px" width="18" height="18" viewBox="0 0 18 18"><path d="M4 3V15M7 3V15M10 3V15M13 3V15" stroke="#eee" stroke-width="1.5"/><path d="M5 3V15M8 3V15M11 3V15M14 3V15" stroke="#888"/></svg>
<svg class="a" style="left:607px;top:1043px" width="18" height="18" viewBox="0 0 18 18"><path d="M2 7H5L10 3V15L5 11H2Z" fill="#e8d020" stroke="#111"/><path d="M12 6L16 4M12 9H16M12 12L16 14" stroke="#888"/></svg>
<svg class="a" style="left:628px;top:1043px" width="18" height="18" viewBox="0 0 18 18"><circle cx="12" cy="6" r="4" fill="#e8d020" stroke="#111"/><path d="M9 9L3 15M5 13L7 15" stroke="#111" stroke-width="2"/></svg>
<div class="t" style="left:665.9px;top:1046.0px;font-size:13px;line-height:13px;color:#f4f4f4;text-shadow:-1px -1px 0 #999">1</div>
<div class="t" style="left:686.9px;top:1046.0px;font-size:13px;line-height:13px;color:#f4f4f4;text-shadow:-1px -1px 0 #999">2</div>
<div class="t" style="left:707.9px;top:1046.0px;font-size:13px;line-height:13px;color:#f4f4f4;text-shadow:-1px -1px 0 #999">3</div>
<div class="t" style="left:739.2px;top:1046.1px;font-size:14px;line-height:14px;font-weight:bold;">?</div>
<div class="a" style="left:416px;top:1067px;width:163px;height:129px;border:1px solid #fff;border-right-color:#777;border-bottom-color:#777;box-shadow:inset -1px -1px 0 #fff,inset 1px 1px 0 #888"></div>
<div class="a" style="left:421px;top:1077px;width:155px;height:115px;border:1px solid #8e8e8e;box-shadow:inset 1px 1px 0 #f6f6f6,1px 1px 0 #f6f6f6;"></div>
<div class="a" style="left:426px;top:1070px;width:63.2695px;height:14px;background:#c8c8c8"></div>
<div class="t" style="left:428.0px;top:1071.0px;font-size:13px;line-height:13px;color:#111;transform:scaleX(0.979);transform-origin:0 0;">Channel 1</div>
<div class="t" style="left:428.0px;top:1086.8px;font-size:12px;line-height:12px;color:#111;transform:scaleX(0.857);transform-origin:0 0;">V (mV)</div>
<div class="t" style="left:506.0px;top:1086.8px;font-size:12px;line-height:12px;color:#111;transform:scaleX(0.886);transform-origin:0 0;">I (pA)</div>
<div class="a" style="left:428px;top:1101px;width:61px;height:20px;background:#c8c8c8;border:1px solid #777;border-right-color:#fff;border-bottom-color:#fff"></div>
<div class="t" style="left:457.9px;top:1105.1px;font-size:14px;line-height:14px;font-weight:bold;color:#111;">-1.1</div>
<div class="a" style="left:507px;top:1101px;width:61px;height:20px;background:#c8c8c8;border:1px solid #777;border-right-color:#fff;border-bottom-color:#fff"></div>
<div class="t" style="left:541.5px;top:1105.1px;font-size:14px;line-height:14px;font-weight:bold;color:#111;">3.8</div>
<div class="a" style="left:429px;top:1128px;width:12px;height:12px;background:#fdfde8;border-top:1px solid #808080;border-left:1px solid #808080;border-bottom:1px solid #fff;border-right:1px solid #fff;"></div>
<div class="t" style="left:446.0px;top:1127.8px;font-size:12px;line-height:12px;color:#111;transform:scaleX(0.893);transform-origin:0 0;">Resistance</div>
<div class="a" style="left:526px;top:1128px;width:12px;height:12px;background:#fdfde8;border-top:1px solid #808080;border-left:1px solid #808080;border-bottom:1px solid #fff;border-right:1px solid #fff;"></div>
<div class="t" style="left:543.0px;top:1127.8px;font-size:12px;line-height:12px;color:#111;transform:scaleX(0.814);transform-origin:0 0;">Irms</div>
<div class="a" style="left:429px;top:1151px;width:139px;height:35px;border:1px solid #8e8e8e;box-shadow:inset 1px 1px 0 #f6f6f6,1px 1px 0 #f6f6f6;"></div>
<div class="a" style="left:434px;top:1144px;width:32px;height:13px;background:#c8c8c8"></div>
<div class="t" style="left:437.0px;top:1145.0px;font-size:13px;line-height:13px;color:#111;transform:scaleX(0.830);transform-origin:0 0;">Mode</div>
<div class="a" style="left:435px;top:1160px;width:26px;height:18px;background:#e4e4e4;border:1px solid #555;border-right-color:#fff;border-bottom-color:#fff"></div>
<div class="t" style="left:439.0px;top:1163.0px;font-size:13px;line-height:13px;color:#111;">VC</div>
<div class="a" style="left:462px;top:1160px;width:26px;height:18px;background:#cfcfcf;border-top:1px solid #fff;border-left:1px solid #fff;border-bottom:1px solid #6a6a6a;border-right:1px solid #6a6a6a;"></div>
<div class="t" style="left:466.5px;top:1163.2px;font-size:12px;line-height:12px;color:#111;">I=0</div>
<div class="a" style="left:489px;top:1160px;width:26px;height:18px;background:#cfcfcf;border-top:1px solid #fff;border-left:1px solid #fff;border-bottom:1px solid #6a6a6a;border-right:1px solid #6a6a6a;"></div>
<div class="t" style="left:496.0px;top:1163.2px;font-size:12px;line-height:12px;color:#111;">IC</div>
<div class="a" style="left:522px;top:1163px;width:12px;height:12px;background:#fdfde8;border-top:1px solid #808080;border-left:1px solid #808080;border-bottom:1px solid #fff;border-right:1px solid #fff;"></div>
<div class="t" style="left:539.0px;top:1164.0px;font-size:13px;line-height:13px;color:#111;transform:scaleX(0.852);transform-origin:0 0;">Ext</div>
<div class="a" style="left:590px;top:1067px;width:163px;height:129px;border:1px solid #fff;border-right-color:#777;border-bottom-color:#777;box-shadow:inset -1px -1px 0 #fff,inset 1px 1px 0 #888"></div>
<div class="a" style="left:595px;top:1077px;width:155px;height:115px;border:1px solid #8e8e8e;box-shadow:inset 1px 1px 0 #f6f6f6,1px 1px 0 #f6f6f6;"></div>
<div class="a" style="left:600px;top:1070px;width:63.2695px;height:14px;background:#c8c8c8"></div>
<div class="t" style="left:602.0px;top:1071.0px;font-size:13px;line-height:13px;color:#111;transform:scaleX(0.979);transform-origin:0 0;">Channel 2</div>
<div class="t" style="left:602.0px;top:1086.8px;font-size:12px;line-height:12px;color:#111;transform:scaleX(0.857);transform-origin:0 0;">V (mV)</div>
<div class="t" style="left:680.0px;top:1086.8px;font-size:12px;line-height:12px;color:#111;transform:scaleX(0.886);transform-origin:0 0;">I (pA)</div>
<div class="a" style="left:602px;top:1101px;width:61px;height:20px;background:#c8c8c8;border:1px solid #777;border-right-color:#fff;border-bottom-color:#fff"></div>
<div class="t" style="left:636.5px;top:1105.1px;font-size:14px;line-height:14px;font-weight:bold;color:#111;">0.1</div>
<div class="a" style="left:681px;top:1101px;width:61px;height:20px;background:#c8c8c8;border:1px solid #777;border-right-color:#fff;border-bottom-color:#fff"></div>
<div class="t" style="left:715.5px;top:1105.1px;font-size:14px;line-height:14px;font-weight:bold;color:#111;">3.1</div>
<div class="a" style="left:603px;top:1128px;width:12px;height:12px;background:#fdfde8;border-top:1px solid #808080;border-left:1px solid #808080;border-bottom:1px solid #fff;border-right:1px solid #fff;"></div>
<div class="t" style="left:620.0px;top:1127.8px;font-size:12px;line-height:12px;color:#111;transform:scaleX(0.893);transform-origin:0 0;">Resistance</div>
<div class="a" style="left:700px;top:1128px;width:12px;height:12px;background:#fdfde8;border-top:1px solid #808080;border-left:1px solid #808080;border-bottom:1px solid #fff;border-right:1px solid #fff;"></div>
<div class="t" style="left:717.0px;top:1127.8px;font-size:12px;line-height:12px;color:#111;transform:scaleX(0.814);transform-origin:0 0;">Irms</div>
<div class="a" style="left:603px;top:1151px;width:139px;height:35px;border:1px solid #8e8e8e;box-shadow:inset 1px 1px 0 #f6f6f6,1px 1px 0 #f6f6f6;"></div>
<div class="a" style="left:608px;top:1144px;width:32px;height:13px;background:#c8c8c8"></div>
<div class="t" style="left:611.0px;top:1145.0px;font-size:13px;line-height:13px;color:#111;transform:scaleX(0.830);transform-origin:0 0;">Mode</div>
<div class="a" style="left:609px;top:1160px;width:26px;height:18px;background:#e4e4e4;border:1px solid #555;border-right-color:#fff;border-bottom-color:#fff"></div>
<div class="t" style="left:613.0px;top:1163.0px;font-size:13px;line-height:13px;color:#111;">VC</div>
<div class="a" style="left:636px;top:1160px;width:26px;height:18px;background:#cfcfcf;border-top:1px solid #fff;border-left:1px solid #fff;border-bottom:1px solid #6a6a6a;border-right:1px solid #6a6a6a;"></div>
<div class="t" style="left:640.5px;top:1163.2px;font-size:12px;line-height:12px;color:#111;">I=0</div>
<div class="a" style="left:663px;top:1160px;width:26px;height:18px;background:#cfcfcf;border-top:1px solid #fff;border-left:1px solid #fff;border-bottom:1px solid #6a6a6a;border-right:1px solid #6a6a6a;"></div>
<div class="t" style="left:670.0px;top:1163.2px;font-size:12px;line-height:12px;color:#111;">IC</div>
<div class="a" style="left:696px;top:1163px;width:12px;height:12px;background:#fdfde8;border-top:1px solid #808080;border-left:1px solid #808080;border-bottom:1px solid #fff;border-right:1px solid #fff;"></div>
<div class="t" style="left:713.0px;top:1164.0px;font-size:13px;line-height:13px;color:#111;transform:scaleX(0.852);transform-origin:0 0;">Ext</div>
<div class="a" style="left:418px;top:1223px;width:336px;height:72px;border-top:1px solid #fff;border-left:1px solid #fff;border-right:1px solid #777"></div>
<div class="a" style="left:487px;top:1208px;width:59px;height:16px;background:#c8c8c8;border:1px solid #fff;border-right-color:#777;border-bottom:none"></div>
<div class="t" style="left:492.0px;top:1209.8px;font-size:12px;line-height:12px;color:#1a1a9a;transform:scaleX(0.942);transform-origin:0 0;">I-Clamp 1</div>
<div class="a" style="left:548px;top:1208px;width:64px;height:16px;background:#c8c8c8;border:1px solid #fff;border-right-color:#777;border-bottom:none"></div>
<div class="t" style="left:553.0px;top:1209.8px;font-size:12px;line-height:12px;color:#1a7a1a;transform:scaleX(0.964);transform-origin:0 0;">V-Clamp 2</div>
<div class="a" style="left:614px;top:1208px;width:60px;height:16px;background:#c8c8c8;border:1px solid #fff;border-right-color:#777;border-bottom:none"></div>
<div class="t" style="left:619.0px;top:1209.8px;font-size:12px;line-height:12px;color:#1a7a1a;transform:scaleX(0.961);transform-origin:0 0;">I-Clamp 2</div>
<div class="a" style="left:418px;top:1205px;width:68px;height:19px;background:#c8c8c8;border:1px solid #fff;border-right-color:#777;border-bottom:none"></div>
<div class="t" style="left:424.0px;top:1209.0px;font-size:13px;line-height:13px;font-weight:bold;color:#1a1a7a;transform:scaleX(0.891);transform-origin:0 0;">V-Clamp 1</div>
<div class="a" style="left:424px;top:1232px;width:172px;height:42px;border:1px solid #8e8e8e;box-shadow:inset 1px 1px 0 #f6f6f6,1px 1px 0 #f6f6f6;"></div>
<div class="a" style="left:430px;top:1238px;width:12px;height:12px;background:#fdfde8;border-top:1px solid #808080;border-left:1px solid #808080;border-bottom:1px solid #fff;border-right:1px solid #fff;"></div>
<div class="t" style="left:448.0px;top:1236.8px;font-size:12px;line-height:12px;color:#111;transform:scaleX(0.863);transform-origin:0 0;">Holding:</div>
<div class="t" style="left:498.0px;top:1236.8px;font-size:12px;line-height:12px;color:#1a1ab0;transform:scaleX(0.892);transform-origin:0 0;">0 mV</div>
<div class="a" style="left:430px;top:1256px;width:12px;height:12px;background:#fdfde8;border-top:1px solid #808080;border-left:1px solid #808080;border-bottom:1px solid #fff;border-right:1px solid #fff;"></div>
<div class="t" style="left:448.0px;top:1255.8px;font-size:12px;line-height:12px;color:#111;transform:scaleX(0.895);transform-origin:0 0;">Seal Test:</div>
<div class="t" style="left:499.0px;top:1255.8px;font-size:12px;line-height:12px;color:#1a1ab0;transform:scaleX(0.865);transform-origin:0 0;">10 mV</div>
<div class="t" style="left:536.0px;top:1255.8px;font-size:12px;line-height:12px;color:#111;">@</div>
<div class="t" style="left:556.0px;top:1255.8px;font-size:12px;line-height:12px;color:#1a1ab0;transform:scaleX(0.894);transform-origin:0 0;">100 Hz</div>
<div class="a" style="left:601px;top:1232px;width:145px;height:42px;border:1px solid #8e8e8e;box-shadow:inset 1px 1px 0 #f6f6f6,1px 1px 0 #f6f6f6;"></div>
<div class="a" style="left:607px;top:1225px;width:78px;height:14px;background:#c8c8c8"></div>
<div class="t" style="left:610.0px;top:1225.8px;font-size:12px;line-height:12px;color:#111;transform:scaleX(0.883);transform-origin:0 0;">Pipette Offset</div>
<div class="t" style="left:606.0px;top:1255.8px;font-size:12px;line-height:12px;color:#1a1ab0;transform:scaleX(0.872);transform-origin:0 0;">0.00 mV</div>
<div class="a" style="left:664px;top:1244px;width:23px;height:21px;background:#d4d4d4;border-top:1px solid #fff;border-left:1px solid #fff;border-bottom:1px solid #6a6a6a;border-right:1px solid #6a6a6a;"></div>
<svg class="a" style="left:670px;top:1247px" width="11" height="14" viewBox="0 0 11 14"><path d="M2.5 7V4A3 3 0 0 1 8.5 4V7" stroke="#000" stroke-width="1.6" fill="none"/><rect x="1" y="7" width="9" height="7" fill="#000"/></svg>
<div class="a" style="left:691px;top:1245px;width:47px;height:19px;background:#c8c8c8;border-top:1px solid #fff;border-left:1px solid #fff;border-bottom:1px solid #6a6a6a;border-right:1px solid #6a6a6a;"></div>
<div class="t" style="left:702.2px;top:1248.7px;font-size:12px;line-height:12px;color:#f2f2f2;">Auto</div>
<div class="t" style="left:448.0px;top:1281.8px;font-size:12px;line-height:12px;color:#111;transform:scaleX(0.838);transform-origin:0 0;">Cp Fast:</div>
<div class="t" style="left:498.0px;top:1281.8px;font-size:12px;line-height:12px;color:#1a1ab0;transform:scaleX(0.908);transform-origin:0 0;">2.017 pF</div>
<div class="a" style="left:552px;top:1280px;width:14px;height:15px;background:#d4d4d4;border-top:1px solid #fff;border-left:1px solid #fff;border-bottom:1px solid #6a6a6a;border-right:1px solid #6a6a6a;"></div>
<div class="a" style="left:557px;top:1285px;width:4px;height:4px;background:#000;border-radius:50%"></div>
<div class="t" style="left:574.0px;top:1281.8px;font-size:12px;line-height:12px;color:#1a1ab0;transform:scaleX(0.884);transform-origin:0 0;">1.21 µs</div>
<div class="a" style="left:691px;top:1278px;width:47px;height:17px;background:#d0d0d0;border-top:1px solid #fff;border-left:1px solid #fff;border-bottom:1px solid #6a6a6a;border-right:1px solid #6a6a6a;"></div>
<div class="t" style="left:702.2px;top:1280.7px;font-size:12px;line-height:12px;color:#111;">Auto</div>
</body></html>
